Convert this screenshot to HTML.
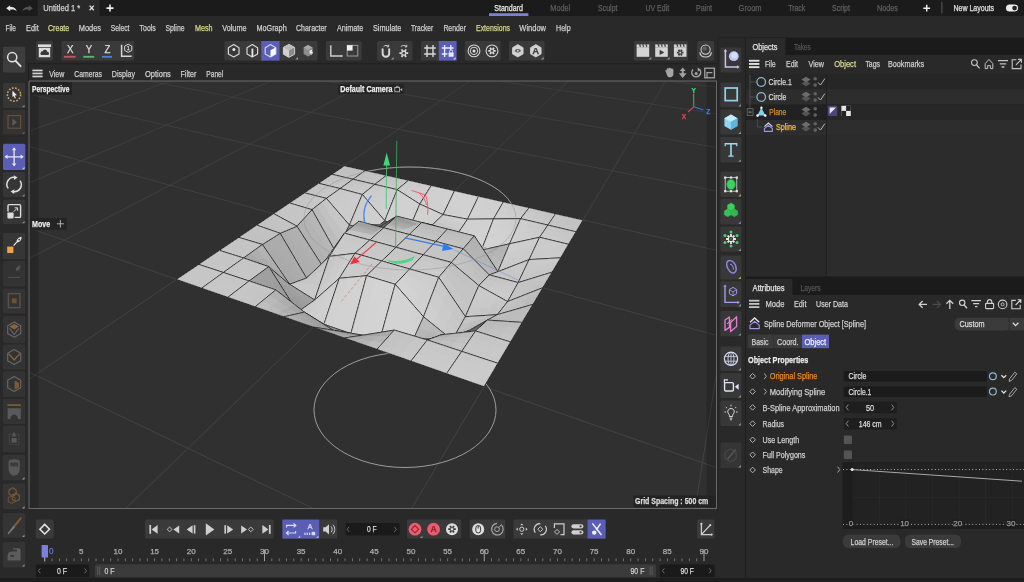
<!DOCTYPE html>
<html lang="en"><head><meta charset="utf-8"><title>Cinema 4D - Untitled 1</title>
<style>
html,body{margin:0;padding:0;background:#292929;overflow:hidden}
svg{display:block;font-family:'Liberation Sans', sans-serif}
text{white-space:pre;stroke-width:0.25px;paint-order:stroke fill}
svg{will-change:transform;transform:translateZ(0)}
</style></head><body>
<svg width="1024" height="582" viewBox="0 0 1024 582" shape-rendering="geometricPrecision">
<rect x="0.00" y="0.00" width="1024.00" height="582.00" fill="#292929" />
<rect x="0.00" y="0.00" width="1024.00" height="16.00" fill="#1b1b1b" />
<rect x="37.60" y="0.00" width="62.00" height="16.00" fill="#292929" />
<path d="M6.2 8.2 L10.2 5.2 L10.2 7.1 C13.5 6.6 16 8.2 16.8 11.4 C15.4 9.6 13.2 9.2 10.2 9.6 L10.2 11.2 Z" fill="#e6e6e6" />
<path d="M32.8 8.2 L28.8 5.2 L28.8 7.1 C25.5 6.6 23 8.2 22.2 11.4 C23.6 9.6 25.8 9.2 28.8 9.6 L28.8 11.2 Z" fill="#555" />
<text x="43.3" y="11.0" font-size="8.5" fill="#d0d0d0" stroke="#d0d0d0" textLength="37.0" lengthAdjust="spacingAndGlyphs" >Untitled 1 *</text>
<path d="M89.6 5.6 L93.8 10.2 M93.8 5.6 L89.6 10.2" fill="none" stroke="#e0e0e0" stroke-width="1.3" />
<path d="M110 4.6 V11.6 M106.5 8.1 H113.5" fill="none" stroke="#f0f0f0" stroke-width="1.6" />
<text x="494.2" y="11.0" font-size="8.5" fill="#e8e8e8" stroke="#e8e8e8" textLength="28.8" lengthAdjust="spacingAndGlyphs" >Standard</text>
<text x="550.3" y="11.0" font-size="8.5" fill="#5e5e5e" stroke="#5e5e5e" textLength="19.9" lengthAdjust="spacingAndGlyphs" >Model</text>
<text x="598.0" y="11.0" font-size="8.5" fill="#5e5e5e" stroke="#5e5e5e" textLength="19.5" lengthAdjust="spacingAndGlyphs" >Sculpt</text>
<text x="645.4" y="11.0" font-size="8.5" fill="#5e5e5e" stroke="#5e5e5e" textLength="23.8" lengthAdjust="spacingAndGlyphs" >UV Edit</text>
<text x="696.0" y="11.0" font-size="8.5" fill="#5e5e5e" stroke="#5e5e5e" textLength="16.0" lengthAdjust="spacingAndGlyphs" >Paint</text>
<text x="738.6" y="11.0" font-size="8.5" fill="#5e5e5e" stroke="#5e5e5e" textLength="23.0" lengthAdjust="spacingAndGlyphs" >Groom</text>
<text x="788.3" y="11.0" font-size="8.5" fill="#5e5e5e" stroke="#5e5e5e" textLength="16.9" lengthAdjust="spacingAndGlyphs" >Track</text>
<text x="832.0" y="11.0" font-size="8.5" fill="#5e5e5e" stroke="#5e5e5e" textLength="18.0" lengthAdjust="spacingAndGlyphs" >Script</text>
<text x="877.0" y="11.0" font-size="8.5" fill="#5e5e5e" stroke="#5e5e5e" textLength="21.0" lengthAdjust="spacingAndGlyphs" >Nodes</text>
<rect x="489.00" y="13.20" width="39.40" height="2.80" fill="#7c80d2" />
<path d="M926.7 4.8 V11.6 M923.3 8.2 H930.1" fill="none" stroke="#f0f0f0" stroke-width="1.5" />
<rect x="941.40" y="2.00" width="1.00" height="11.50" fill="#5a5a5a" />
<text x="953.4" y="11.0" font-size="8.5" fill="#e0e0e0" stroke="#e0e0e0" textLength="40.7" lengthAdjust="spacingAndGlyphs" >New Layouts</text>
<rect x="1006.00" y="4.60" width="12.20" height="7.00" fill="#ececec" rx="3.5" />
<circle cx="1014.60" cy="8.10" r="2.40" fill="#222" />
<text x="5.5" y="31.0" font-size="9" fill="#cfcfcf" stroke="#cfcfcf" textLength="10.5" lengthAdjust="spacingAndGlyphs" >File</text>
<text x="26.0" y="31.0" font-size="9" fill="#cfcfcf" stroke="#cfcfcf" textLength="12.7" lengthAdjust="spacingAndGlyphs" >Edit</text>
<text x="47.9" y="31.0" font-size="9" fill="#d6d98a" stroke="#d6d98a" textLength="21.4" lengthAdjust="spacingAndGlyphs" >Create</text>
<text x="78.7" y="31.0" font-size="9" fill="#cfcfcf" stroke="#cfcfcf" textLength="22.3" lengthAdjust="spacingAndGlyphs" >Modes</text>
<text x="110.7" y="31.0" font-size="9" fill="#cfcfcf" stroke="#cfcfcf" textLength="18.8" lengthAdjust="spacingAndGlyphs" >Select</text>
<text x="139.6" y="31.0" font-size="9" fill="#cfcfcf" stroke="#cfcfcf" textLength="16.1" lengthAdjust="spacingAndGlyphs" >Tools</text>
<text x="165.4" y="31.0" font-size="9" fill="#cfcfcf" stroke="#cfcfcf" textLength="19.2" lengthAdjust="spacingAndGlyphs" >Spline</text>
<text x="194.9" y="31.0" font-size="9" fill="#d6d98a" stroke="#d6d98a" textLength="17.6" lengthAdjust="spacingAndGlyphs" >Mesh</text>
<text x="222.2" y="31.0" font-size="9" fill="#cfcfcf" stroke="#cfcfcf" textLength="24.4" lengthAdjust="spacingAndGlyphs" >Volume</text>
<text x="256.4" y="31.0" font-size="9" fill="#cfcfcf" stroke="#cfcfcf" textLength="30.3" lengthAdjust="spacingAndGlyphs" >MoGraph</text>
<text x="296.0" y="31.0" font-size="9" fill="#cfcfcf" stroke="#cfcfcf" textLength="30.7" lengthAdjust="spacingAndGlyphs" >Character</text>
<text x="336.9" y="31.0" font-size="9" fill="#cfcfcf" stroke="#cfcfcf" textLength="26.5" lengthAdjust="spacingAndGlyphs" >Animate</text>
<text x="373.0" y="31.0" font-size="9" fill="#cfcfcf" stroke="#cfcfcf" textLength="28.4" lengthAdjust="spacingAndGlyphs" >Simulate</text>
<text x="411.0" y="31.0" font-size="9" fill="#cfcfcf" stroke="#cfcfcf" textLength="22.2" lengthAdjust="spacingAndGlyphs" >Tracker</text>
<text x="443.4" y="31.0" font-size="9" fill="#cfcfcf" stroke="#cfcfcf" textLength="22.6" lengthAdjust="spacingAndGlyphs" >Render</text>
<text x="476.0" y="31.0" font-size="9" fill="#d6d98a" stroke="#d6d98a" textLength="34.0" lengthAdjust="spacingAndGlyphs" >Extensions</text>
<text x="519.3" y="31.0" font-size="9" fill="#cfcfcf" stroke="#cfcfcf" textLength="26.7" lengthAdjust="spacingAndGlyphs" >Window</text>
<text x="556.0" y="31.0" font-size="9" fill="#cfcfcf" stroke="#cfcfcf" textLength="14.6" lengthAdjust="spacingAndGlyphs" >Help</text>
<rect x="29.00" y="81.00" width="687.50" height="427.50" fill="#303030" />
<clipPath id="vpclip"><rect x="29" y="81" width="687.5" height="427.5"/></clipPath>
<g clip-path="url(#vpclip)">
<line x1="-83.46" y1="94.52" x2="44.08" y2="60.51" stroke="#464646" stroke-width="1" opacity="0.52"/>
<line x1="27.42" y1="93.74" x2="126.15" y2="63.73" stroke="#464646" stroke-width="1" opacity="0.52"/>
<line x1="-16.00" y1="146.92" x2="122.65" y2="97.95" stroke="#464646" stroke-width="1" opacity="0.62"/>
<line x1="122.65" y1="97.95" x2="210.22" y2="67.03" stroke="#464646" stroke-width="1" opacity="0.53"/>
<line x1="-29.63" y1="207.54" x2="117.79" y2="145.53" stroke="#464646" stroke-width="1" opacity="0.70"/>
<line x1="117.79" y1="145.53" x2="220.59" y2="102.28" stroke="#464646" stroke-width="1" opacity="0.62"/>
<line x1="220.59" y1="102.28" x2="296.36" y2="70.41" stroke="#464646" stroke-width="1" opacity="0.54"/>
<line x1="-84.81" y1="317.58" x2="110.57" y2="216.16" stroke="#464646" stroke-width="1" opacity="0.79"/>
<line x1="110.57" y1="216.16" x2="249.27" y2="144.16" stroke="#464646" stroke-width="1" opacity="0.70"/>
<line x1="249.27" y1="144.16" x2="331.56" y2="101.44" stroke="#464646" stroke-width="1" opacity="0.61"/>
<line x1="331.56" y1="101.44" x2="392.36" y2="69.88" stroke="#464646" stroke-width="1" opacity="0.53"/>
<line x1="8.82" y1="362.46" x2="261.66" y2="483.64" stroke="#464646" stroke-width="1" opacity="0.88"/>
<line x1="261.66" y1="483.64" x2="604.60" y2="648.01" stroke="#464646" stroke-width="1" opacity="0.90"/>
<line x1="-189.88" y1="527.14" x2="98.73" y2="331.99" stroke="#464646" stroke-width="1" opacity="0.88"/>
<line x1="98.73" y1="331.99" x2="256.73" y2="225.15" stroke="#464646" stroke-width="1" opacity="0.80"/>
<line x1="256.73" y1="225.15" x2="356.43" y2="157.73" stroke="#464646" stroke-width="1" opacity="0.72"/>
<line x1="356.43" y1="157.73" x2="425.07" y2="111.32" stroke="#464646" stroke-width="1" opacity="0.63"/>
<line x1="425.07" y1="111.32" x2="481.28" y2="73.31" stroke="#464646" stroke-width="1" opacity="0.54"/>
<line x1="5.97" y1="219.95" x2="176.50" y2="279.40" stroke="#464646" stroke-width="1" opacity="0.78"/>
<line x1="176.50" y1="279.40" x2="376.96" y2="349.28" stroke="#464646" stroke-width="1" opacity="0.83"/>
<line x1="376.96" y1="349.28" x2="702.41" y2="462.74" stroke="#464646" stroke-width="1" opacity="0.87"/>
<line x1="702.41" y1="462.74" x2="1136.15" y2="613.95" stroke="#464646" stroke-width="1" opacity="0.90"/>
<line x1="117.49" y1="516.46" x2="313.42" y2="327.13" stroke="#464646" stroke-width="1" opacity="0.88"/>
<line x1="313.42" y1="327.13" x2="421.65" y2="222.55" stroke="#464646" stroke-width="1" opacity="0.80"/>
<line x1="421.65" y1="222.55" x2="490.30" y2="156.21" stroke="#464646" stroke-width="1" opacity="0.71"/>
<line x1="490.30" y1="156.21" x2="537.72" y2="110.38" stroke="#464646" stroke-width="1" opacity="0.63"/>
<line x1="537.72" y1="110.38" x2="572.44" y2="76.83" stroke="#464646" stroke-width="1" opacity="0.55"/>
<line x1="4.37" y1="139.72" x2="115.27" y2="170.19" stroke="#464646" stroke-width="1" opacity="0.67"/>
<line x1="115.27" y1="170.19" x2="273.65" y2="213.71" stroke="#464646" stroke-width="1" opacity="0.72"/>
<line x1="273.65" y1="213.71" x2="480.70" y2="270.59" stroke="#464646" stroke-width="1" opacity="0.77"/>
<line x1="480.70" y1="270.59" x2="722.15" y2="336.93" stroke="#464646" stroke-width="1" opacity="0.82"/>
<line x1="159.79" y1="932.20" x2="412.94" y2="506.19" stroke="#464646" stroke-width="1" opacity="0.90"/>
<line x1="412.94" y1="506.19" x2="522.14" y2="322.41" stroke="#464646" stroke-width="1" opacity="0.87"/>
<line x1="522.14" y1="322.41" x2="583.00" y2="220.00" stroke="#464646" stroke-width="1" opacity="0.79"/>
<line x1="583.00" y1="220.00" x2="621.80" y2="154.71" stroke="#464646" stroke-width="1" opacity="0.71"/>
<line x1="621.80" y1="154.71" x2="648.69" y2="109.46" stroke="#464646" stroke-width="1" opacity="0.63"/>
<line x1="648.69" y1="109.46" x2="668.42" y2="76.25" stroke="#464646" stroke-width="1" opacity="0.54"/>
<line x1="-19.71" y1="83.03" x2="78.97" y2="105.46" stroke="#464646" stroke-width="1" opacity="0.56"/>
<line x1="78.97" y1="105.46" x2="198.03" y2="132.51" stroke="#464646" stroke-width="1" opacity="0.61"/>
<line x1="198.03" y1="132.51" x2="344.50" y2="165.80" stroke="#464646" stroke-width="1" opacity="0.66"/>
<line x1="344.50" y1="165.80" x2="529.09" y2="207.75" stroke="#464646" stroke-width="1" opacity="0.71"/>
<line x1="529.09" y1="207.75" x2="768.91" y2="262.25" stroke="#464646" stroke-width="1" opacity="0.76"/>
<line x1="684.62" y1="576.05" x2="718.89" y2="357.71" stroke="#464646" stroke-width="1" opacity="0.89"/>
<line x1="137.38" y1="78.63" x2="247.66" y2="100.04" stroke="#464646" stroke-width="1" opacity="0.55"/>
<line x1="247.66" y1="100.04" x2="380.02" y2="125.74" stroke="#464646" stroke-width="1" opacity="0.60"/>
<line x1="380.02" y1="125.74" x2="541.85" y2="157.16" stroke="#464646" stroke-width="1" opacity="0.65"/>
<line x1="541.85" y1="157.16" x2="744.21" y2="196.44" stroke="#464646" stroke-width="1" opacity="0.70"/>
<line x1="286.78" y1="74.44" x2="407.36" y2="94.91" stroke="#464646" stroke-width="1" opacity="0.53"/>
<line x1="407.36" y1="94.91" x2="571.38" y2="122.75" stroke="#464646" stroke-width="1" opacity="0.58"/>
<line x1="571.38" y1="122.75" x2="750.99" y2="153.24" stroke="#464646" stroke-width="1" opacity="0.64"/>
<line x1="414.26" y1="68.22" x2="558.77" y2="90.04" stroke="#464646" stroke-width="1" opacity="0.51"/>
<line x1="558.77" y1="90.04" x2="734.36" y2="116.56" stroke="#464646" stroke-width="1" opacity="0.57"/>
<line x1="548.93" y1="64.50" x2="702.52" y2="85.43" stroke="#464646" stroke-width="1" opacity="0.50"/>
<line x1="702.52" y1="85.43" x2="888.23" y2="110.72" stroke="#464646" stroke-width="1" opacity="0.55"/>
<line x1="677.51" y1="60.96" x2="839.19" y2="81.04" stroke="#464646" stroke-width="1" opacity="0.48"/>
<ellipse cx="405" cy="410" rx="91" ry="57.5" fill="none" stroke="#a8a8a8" stroke-width="0.9"/>
<ellipse cx="410" cy="218.5" rx="106" ry="51.5" fill="none" stroke="#a8a8a8" stroke-width="0.9"/>
<g shape-rendering="crispEdges">
<polygon points="340.4,168.6 347.3,170.2 351.3,167.4 344.5,165.8" fill="rgb(192,192,192)"/>
<polygon points="347.3,170.2 354.2,171.8 358.2,168.9 351.3,167.4" fill="rgb(192,192,192)"/>
<polygon points="336.2,171.4 343.1,173.0 347.3,170.2 340.4,168.6" fill="rgb(192,192,192)"/>
<polygon points="354.2,171.8 361.2,173.4 365.2,170.5 358.2,168.9" fill="rgb(192,192,192)"/>
<polygon points="343.1,173.0 350.1,174.7 354.2,171.8 347.3,170.2" fill="rgb(192,192,192)"/>
<polygon points="331.9,174.3 338.9,176.0 343.1,173.0 336.2,171.4" fill="rgb(193,193,193)"/>
<polygon points="350.1,174.7 357.2,176.3 361.2,173.4 354.2,171.8" fill="rgb(193,193,193)"/>
<polygon points="338.9,176.0 345.9,177.6 350.1,174.7 343.1,173.0" fill="rgb(193,193,193)"/>
<polygon points="345.9,177.6 353.0,179.3 357.2,176.3 350.1,174.7" fill="rgb(193,193,193)"/>
<polygon points="331.9,174.3 353.0,179.3 365.2,170.5 344.5,165.8" fill="none" stroke="#262626" stroke-width="0.7" stroke-linejoin="round" shape-rendering="geometricPrecision"/>
<polygon points="361.2,173.4 368.3,175.0 372.3,172.1 365.2,170.5" fill="rgb(193,193,193)"/>
<polygon points="368.3,175.0 375.5,176.7 379.4,173.7 372.3,172.1" fill="rgb(193,193,193)"/>
<polygon points="357.2,176.3 364.3,178.0 368.3,175.0 361.2,173.4" fill="rgb(193,193,193)"/>
<polygon points="375.5,176.7 382.7,178.3 386.5,175.4 379.4,173.7" fill="rgb(194,194,194)"/>
<polygon points="364.3,178.0 371.5,179.6 375.5,176.7 368.3,175.0" fill="rgb(194,194,194)"/>
<polygon points="353.0,179.3 360.2,181.0 364.3,178.0 357.2,176.3" fill="rgb(194,194,194)"/>
<polygon points="371.5,179.6 378.8,181.3 382.7,178.3 375.5,176.7" fill="rgb(195,195,195)"/>
<polygon points="360.2,181.0 367.4,182.7 371.5,179.6 364.3,178.0" fill="rgb(195,195,195)"/>
<polygon points="367.4,182.7 374.8,184.4 378.8,181.3 371.5,179.6" fill="rgb(197,197,197)"/>
<polygon points="353.0,179.3 374.8,184.4 386.5,175.4 365.2,170.5" fill="none" stroke="#262626" stroke-width="0.7" stroke-linejoin="round" shape-rendering="geometricPrecision"/>
<polygon points="327.6,177.3 334.6,178.9 338.9,176.0 331.9,174.3" fill="rgb(193,193,193)"/>
<polygon points="334.6,178.9 341.6,180.6 345.9,177.6 338.9,176.0" fill="rgb(193,193,193)"/>
<polygon points="323.1,180.3 330.2,182.0 334.6,178.9 327.6,177.3" fill="rgb(193,193,193)"/>
<polygon points="341.6,180.6 348.8,182.3 353.0,179.3 345.9,177.6" fill="rgb(194,194,194)"/>
<polygon points="330.2,182.0 337.3,183.7 341.6,180.6 334.6,178.9" fill="rgb(194,194,194)"/>
<polygon points="318.6,183.3 325.7,185.1 330.2,182.0 323.1,180.3" fill="rgb(194,194,194)"/>
<polygon points="337.3,183.7 344.5,185.4 348.8,182.3 341.6,180.6" fill="rgb(196,196,196)"/>
<polygon points="325.7,185.1 332.9,186.8 337.3,183.7 330.2,182.0" fill="rgb(196,196,196)"/>
<polygon points="332.9,186.8 340.1,188.6 344.5,185.4 337.3,183.7" fill="rgb(197,197,197)"/>
<polygon points="318.6,183.3 340.1,188.6 353.0,179.3 331.9,174.3" fill="none" stroke="#262626" stroke-width="0.7" stroke-linejoin="round" shape-rendering="geometricPrecision"/>
<polygon points="382.7,178.3 390.0,180.0 393.8,177.0 386.5,175.4" fill="rgb(195,195,195)"/>
<polygon points="390.0,180.0 397.4,181.7 401.1,178.7 393.8,177.0" fill="rgb(196,196,196)"/>
<polygon points="378.8,181.3 386.1,183.0 390.0,180.0 382.7,178.3" fill="rgb(197,197,197)"/>
<polygon points="397.4,181.7 404.8,183.4 408.5,180.3 401.1,178.7" fill="rgb(198,198,198)"/>
<polygon points="386.1,183.0 393.5,184.8 397.4,181.7 390.0,180.0" fill="rgb(198,198,198)"/>
<polygon points="374.8,184.4 382.2,186.1 386.1,183.0 378.8,181.3" fill="rgb(198,198,198)"/>
<polygon points="393.5,184.8 401.0,186.5 404.8,183.4 397.4,181.7" fill="rgb(200,200,200)"/>
<polygon points="382.2,186.1 389.6,187.9 393.5,184.8 386.1,183.0" fill="rgb(200,200,200)"/>
<polygon points="389.6,187.9 397.2,189.7 401.0,186.5 393.5,184.8" fill="rgb(201,201,201)"/>
<polygon points="374.8,184.4 397.2,189.7 408.5,180.3 386.5,175.4" fill="none" stroke="#262626" stroke-width="0.7" stroke-linejoin="round" shape-rendering="geometricPrecision"/>
<polygon points="404.8,183.4 412.3,186.1 416.0,182.0 408.5,180.3" fill="rgb(201,201,201)"/>
<polygon points="412.3,186.1 419.8,188.9 423.5,183.8 416.0,182.0" fill="rgb(203,203,203)"/>
<polygon points="401.0,186.5 408.5,190.3 412.3,186.1 404.8,183.4" fill="rgb(203,203,203)"/>
<polygon points="419.8,188.9 427.4,191.6 431.2,185.5 423.5,183.8" fill="rgb(205,205,205)"/>
<polygon points="408.5,190.3 416.1,194.0 419.8,188.9 412.3,186.1" fill="rgb(205,205,205)"/>
<polygon points="416.1,194.0 423.7,197.8 427.4,191.6 419.8,188.9" fill="rgb(207,207,207)"/>
<polygon points="397.2,189.7 404.7,194.5 408.5,190.3 401.0,186.5" fill="rgb(205,205,205)"/>
<polygon points="404.7,194.5 412.3,199.3 416.1,194.0 408.5,190.3" fill="rgb(207,207,207)"/>
<polygon points="412.3,199.3 419.8,204.1 423.7,197.8 416.1,194.0" fill="rgb(208,208,208)"/>
<polygon points="397.2,189.7 419.8,204.1 431.2,185.5 408.5,180.3" fill="none" stroke="#262626" stroke-width="0.7" stroke-linejoin="round" shape-rendering="geometricPrecision"/>
<polygon points="348.8,182.3 356.0,184.1 360.2,181.0 353.0,179.3" fill="rgb(195,195,195)"/>
<polygon points="356.0,184.1 363.3,185.9 367.4,182.7 360.2,181.0" fill="rgb(197,197,197)"/>
<polygon points="344.5,185.4 351.8,187.3 356.0,184.1 348.8,182.3" fill="rgb(197,197,197)"/>
<polygon points="363.3,185.9 370.7,187.7 374.8,184.4 367.4,182.7" fill="rgb(199,199,199)"/>
<polygon points="351.8,187.3 359.1,189.2 363.3,185.9 356.0,184.1" fill="rgb(200,200,200)"/>
<polygon points="340.1,188.6 347.4,190.5 351.8,187.3 344.5,185.4" fill="rgb(199,199,199)"/>
<polygon points="359.1,189.2 366.5,191.1 370.7,187.7 363.3,185.9" fill="rgb(201,201,201)"/>
<polygon points="347.4,190.5 354.8,192.5 359.1,189.2 351.8,187.3" fill="rgb(201,201,201)"/>
<polygon points="354.8,192.5 362.3,194.5 366.5,191.1 359.1,189.2" fill="rgb(203,203,203)"/>
<polygon points="340.1,188.6 362.3,194.5 374.8,184.4 353.0,179.3" fill="none" stroke="#262626" stroke-width="0.7" stroke-linejoin="round" shape-rendering="geometricPrecision"/>
<polygon points="370.7,187.7 378.1,191.8 382.2,186.1 374.8,184.4" fill="rgb(201,201,201)"/>
<polygon points="378.1,191.8 385.6,195.9 389.6,187.9 382.2,186.1" fill="rgb(204,204,204)"/>
<polygon points="385.6,195.9 393.1,200.0 397.2,189.7 389.6,187.9" fill="rgb(205,205,205)"/>
<polygon points="366.5,191.1 374.0,197.5 378.1,191.8 370.7,187.7" fill="rgb(203,203,203)"/>
<polygon points="374.0,197.5 381.5,203.9 385.6,195.9 378.1,191.8" fill="rgb(205,205,205)"/>
<polygon points="381.5,203.9 388.9,210.3 393.1,200.0 385.6,195.9" fill="rgb(207,207,207)"/>
<polygon points="377.3,212.0 384.8,220.7 388.9,210.3 381.5,203.9" fill="rgb(207,207,207)"/>
<polygon points="369.8,203.3 377.3,212.0 381.5,203.9 374.0,197.5" fill="rgb(206,206,206)"/>
<polygon points="362.3,194.5 369.8,203.3 374.0,197.5 366.5,191.1" fill="rgb(205,205,205)"/>
<polygon points="362.3,194.5 384.8,220.7 397.2,189.7 374.8,184.4" fill="none" stroke="#262626" stroke-width="0.7" stroke-linejoin="round" shape-rendering="geometricPrecision"/>
<polygon points="427.4,191.6 435.1,193.9 438.9,187.2 431.2,185.5" fill="rgb(207,207,207)"/>
<polygon points="435.1,193.9 442.9,196.3 446.6,189.0 438.9,187.2" fill="rgb(208,208,208)"/>
<polygon points="423.7,197.8 431.4,200.7 435.1,193.9 427.4,191.6" fill="rgb(208,208,208)"/>
<polygon points="442.9,196.3 450.7,198.6 454.5,190.8 446.6,189.0" fill="rgb(209,209,209)"/>
<polygon points="431.4,200.7 439.1,203.6 442.9,196.3 435.1,193.9" fill="rgb(208,208,208)"/>
<polygon points="419.8,204.1 427.5,207.6 431.4,200.7 423.7,197.8" fill="rgb(208,208,208)"/>
<polygon points="439.1,203.6 447.0,206.6 450.7,198.6 442.9,196.3" fill="rgb(209,209,209)"/>
<polygon points="427.5,207.6 435.3,211.1 439.1,203.6 431.4,200.7" fill="rgb(208,208,208)"/>
<polygon points="435.3,211.1 443.1,214.6 447.0,206.6 439.1,203.6" fill="rgb(208,208,208)"/>
<polygon points="419.8,204.1 443.1,214.6 454.5,190.8 431.2,185.5" fill="none" stroke="#262626" stroke-width="0.7" stroke-linejoin="round" shape-rendering="geometricPrecision"/>
<polygon points="314.0,186.4 321.1,188.2 325.7,185.1 318.6,183.3" fill="rgb(194,194,194)"/>
<polygon points="321.1,188.2 328.3,190.0 332.9,186.8 325.7,185.1" fill="rgb(196,196,196)"/>
<polygon points="309.3,189.6 316.5,191.4 321.1,188.2 314.0,186.4" fill="rgb(195,195,195)"/>
<polygon points="328.3,190.0 335.6,191.8 340.1,188.6 332.9,186.8" fill="rgb(198,198,198)"/>
<polygon points="316.5,191.4 323.7,193.2 328.3,190.0 321.1,188.2" fill="rgb(197,197,197)"/>
<polygon points="304.5,192.9 311.7,194.7 316.5,191.4 309.3,189.6" fill="rgb(195,195,195)"/>
<polygon points="323.7,193.2 331.1,195.1 335.6,191.8 328.3,190.0" fill="rgb(199,199,199)"/>
<polygon points="311.7,194.7 319.0,196.5 323.7,193.2 316.5,191.4" fill="rgb(197,197,197)"/>
<polygon points="319.0,196.5 326.4,198.4 331.1,195.1 323.7,193.2" fill="rgb(199,199,199)"/>
<polygon points="304.5,192.9 326.4,198.4 340.1,188.6 318.6,183.3" fill="none" stroke="#262626" stroke-width="0.7" stroke-linejoin="round" shape-rendering="geometricPrecision"/>
<polygon points="393.1,200.0 400.6,204.5 404.7,194.5 397.2,189.7" fill="rgb(208,208,208)"/>
<polygon points="400.6,204.5 408.2,209.0 412.3,199.3 404.7,194.5" fill="rgb(209,209,209)"/>
<polygon points="388.9,210.3 396.5,214.6 400.6,204.5 393.1,200.0" fill="rgb(208,208,208)"/>
<polygon points="408.2,209.0 415.8,213.6 419.8,204.1 412.3,199.3" fill="rgb(209,209,209)"/>
<polygon points="396.5,214.6 404.1,218.8 408.2,209.0 400.6,204.5" fill="rgb(209,209,209)"/>
<polygon points="384.8,220.7 392.3,224.7 396.5,214.6 388.9,210.3" fill="rgb(209,209,209)"/>
<polygon points="404.1,218.8 411.7,223.1 415.8,213.6 408.2,209.0" fill="rgb(210,210,210)"/>
<polygon points="392.3,224.7 400.0,228.7 404.1,218.8 396.5,214.6" fill="rgb(210,210,210)"/>
<polygon points="400.0,228.7 407.6,232.7 411.7,223.1 404.1,218.8" fill="rgb(211,211,211)"/>
<polygon points="384.8,220.7 407.6,232.7 419.8,204.1 397.2,189.7" fill="none" stroke="#262626" stroke-width="0.7" stroke-linejoin="round" shape-rendering="geometricPrecision"/>
<polygon points="335.6,191.8 343.1,196.1 347.4,190.5 340.1,188.6" fill="rgb(201,201,201)"/>
<polygon points="343.1,196.1 350.5,200.4 354.8,192.5 347.4,190.5" fill="rgb(203,203,203)"/>
<polygon points="350.5,200.4 358.0,204.7 362.3,194.5 354.8,192.5" fill="rgb(204,204,204)"/>
<polygon points="331.1,195.1 338.6,201.7 343.1,196.1 335.6,191.8" fill="rgb(201,201,201)"/>
<polygon points="338.6,201.7 346.2,208.3 350.5,200.4 343.1,196.1" fill="rgb(203,203,203)"/>
<polygon points="346.2,208.3 353.7,214.9 358.0,204.7 350.5,200.4" fill="rgb(204,204,204)"/>
<polygon points="341.8,216.2 349.4,225.1 353.7,214.9 346.2,208.3" fill="rgb(203,203,203)"/>
<polygon points="334.1,207.3 341.8,216.2 346.2,208.3 338.6,201.7" fill="rgb(203,203,203)"/>
<polygon points="326.4,198.4 334.1,207.3 338.6,201.7 331.1,195.1" fill="rgb(202,202,202)"/>
<polygon points="326.4,198.4 349.4,225.1 362.3,194.5 340.1,188.6" fill="none" stroke="#262626" stroke-width="0.7" stroke-linejoin="round" shape-rendering="geometricPrecision"/>
<polygon points="450.7,198.6 458.7,200.4 462.4,192.6 454.5,190.8" fill="rgb(210,210,210)"/>
<polygon points="458.7,200.4 466.8,202.1 470.5,194.4 462.4,192.6" fill="rgb(209,209,209)"/>
<polygon points="447.0,206.6 455.0,208.2 458.7,200.4 450.7,198.6" fill="rgb(209,209,209)"/>
<polygon points="466.8,202.1 474.9,203.8 478.6,196.3 470.5,194.4" fill="rgb(209,209,209)"/>
<polygon points="443.1,214.6 451.2,216.1 455.0,208.2 447.0,206.6" fill="rgb(208,208,208)"/>
<polygon points="455.0,208.2 463.1,209.8 466.8,202.1 458.7,200.4" fill="rgb(209,209,209)"/>
<polygon points="463.1,209.8 471.3,211.5 474.9,203.8 466.8,202.1" fill="rgb(209,209,209)"/>
<polygon points="451.2,216.1 459.3,217.7 463.1,209.8 455.0,208.2" fill="rgb(208,208,208)"/>
<polygon points="459.3,217.7 467.5,219.2 471.3,211.5 463.1,209.8" fill="rgb(209,209,209)"/>
<polygon points="443.1,214.6 467.5,219.2 478.6,196.3 454.5,190.8" fill="none" stroke="#262626" stroke-width="0.7" stroke-linejoin="round" shape-rendering="geometricPrecision"/>
<polygon points="373.1,217.6 380.7,224.1 384.8,220.7 377.3,212.0" fill="rgb(207,207,207)"/>
<polygon points="365.6,211.1 373.1,217.6 377.3,212.0 369.8,203.3" fill="rgb(206,206,206)"/>
<polygon points="358.0,204.7 365.6,211.1 369.8,203.3 362.3,194.5" fill="rgb(205,205,205)"/>
<polygon points="353.7,214.9 361.3,219.0 365.6,211.1 358.0,204.7" fill="rgb(204,204,204)"/>
<polygon points="361.3,219.0 368.9,223.2 373.1,217.6 365.6,211.1" fill="rgb(206,206,206)"/>
<polygon points="368.9,223.2 376.5,227.5 380.7,224.1 373.1,217.6" fill="rgb(207,207,207)"/>
<polygon points="349.4,225.1 356.9,227.0 361.3,219.0 353.7,214.9" fill="rgb(203,203,203)"/>
<polygon points="356.9,227.0 364.6,229.0 368.9,223.2 361.3,219.0" fill="rgb(205,205,205)"/>
<polygon points="364.6,229.0 372.3,230.9 376.5,227.5 368.9,223.2" fill="rgb(206,206,206)"/>
<polygon points="349.4,225.1 372.3,230.9 384.8,220.7 362.3,194.5" fill="none" stroke="#262626" stroke-width="0.7" stroke-linejoin="round" shape-rendering="geometricPrecision"/>
<polygon points="415.8,213.6 423.6,215.0 427.5,207.6 419.8,204.1" fill="rgb(209,209,209)"/>
<polygon points="423.6,215.0 431.6,216.5 435.3,211.1 427.5,207.6" fill="rgb(209,209,209)"/>
<polygon points="411.7,223.1 419.7,222.6 423.6,215.0 415.8,213.6" fill="rgb(210,210,210)"/>
<polygon points="431.6,216.5 439.6,218.0 443.1,214.6 435.3,211.1" fill="rgb(208,208,208)"/>
<polygon points="407.6,232.7 415.7,230.2 419.7,222.6 411.7,223.1" fill="rgb(211,211,211)"/>
<polygon points="419.7,222.6 427.8,222.0 431.6,216.5 423.6,215.0" fill="rgb(209,209,209)"/>
<polygon points="427.8,222.0 436.0,221.4 439.6,218.0 431.6,216.5" fill="rgb(207,207,207)"/>
<polygon points="415.7,230.2 423.9,227.6 427.8,222.0 419.7,222.6" fill="rgb(209,209,209)"/>
<polygon points="423.9,227.6 432.3,225.0 436.0,221.4 427.8,222.0" fill="rgb(206,206,206)"/>
<polygon points="407.6,232.7 432.3,225.0 443.1,214.6 419.8,204.1" fill="none" stroke="#262626" stroke-width="0.7" stroke-linejoin="round" shape-rendering="geometricPrecision"/>
<polygon points="299.6,196.2 306.9,198.1 311.7,194.7 304.5,192.9" fill="rgb(196,196,196)"/>
<polygon points="306.9,198.1 314.3,200.1 319.0,196.5 311.7,194.7" fill="rgb(198,198,198)"/>
<polygon points="294.6,199.5 302.0,201.6 306.9,198.1 299.6,196.2" fill="rgb(197,197,197)"/>
<polygon points="314.3,200.1 321.7,202.1 326.4,198.4 319.0,196.5" fill="rgb(199,199,199)"/>
<polygon points="302.0,201.6 309.4,203.7 314.3,200.1 306.9,198.1" fill="rgb(198,198,198)"/>
<polygon points="289.5,203.0 296.9,205.2 302.0,201.6 294.6,199.5" fill="rgb(197,197,197)"/>
<polygon points="309.4,203.7 316.9,205.8 321.7,202.1 314.3,200.1" fill="rgb(199,199,199)"/>
<polygon points="296.9,205.2 304.4,207.4 309.4,203.7 302.0,201.6" fill="rgb(198,198,198)"/>
<polygon points="304.4,207.4 312.0,209.7 316.9,205.8 309.4,203.7" fill="rgb(198,198,198)"/>
<polygon points="289.5,203.0 312.0,209.7 326.4,198.4 304.5,192.9" fill="none" stroke="#262626" stroke-width="0.7" stroke-linejoin="round" shape-rendering="geometricPrecision"/>
<polygon points="380.7,224.1 388.4,225.2 392.3,224.7 384.8,220.7" fill="rgb(100,100,100)"/>
<polygon points="388.4,225.2 396.2,226.3 400.0,228.7 392.3,224.7" fill="rgb(100,100,100)"/>
<polygon points="396.2,226.3 404.1,227.4 407.6,232.7 400.0,228.7" fill="rgb(100,100,100)"/>
<polygon points="376.5,227.5 384.4,225.7 388.4,225.2 380.7,224.1" fill="rgb(100,100,100)"/>
<polygon points="384.4,225.7 392.3,223.8 396.2,226.3 388.4,225.2" fill="rgb(100,100,100)"/>
<polygon points="372.3,230.9 380.2,226.2 384.4,225.7 376.5,227.5" fill="rgb(100,100,100)"/>
<polygon points="392.3,223.8 400.5,221.9 404.1,227.4 396.2,226.3" fill="rgb(100,100,100)"/>
<polygon points="380.2,226.2 388.3,221.2 392.3,223.8 384.4,225.7" fill="rgb(100,100,100)"/>
<polygon points="388.3,221.2 396.7,216.2 400.5,221.9 392.3,223.8" fill="rgb(100,100,100)"/>
<polygon points="372.3,230.9 396.7,216.2 407.6,232.7 384.8,220.7" fill="none" stroke="#262626" stroke-width="0.7" stroke-linejoin="round" shape-rendering="geometricPrecision"/>
<polygon points="474.9,203.8 483.3,205.0 486.8,198.1 478.6,196.3" fill="rgb(209,209,209)"/>
<polygon points="483.3,205.0 491.7,206.2 495.1,200.0 486.8,198.1" fill="rgb(207,207,207)"/>
<polygon points="471.3,211.5 479.7,212.0 483.3,205.0 474.9,203.8" fill="rgb(209,209,209)"/>
<polygon points="491.7,206.2 500.2,207.5 503.4,201.9 495.1,200.0" fill="rgb(206,206,206)"/>
<polygon points="467.5,219.2 476.1,219.1 479.7,212.0 471.3,211.5" fill="rgb(209,209,209)"/>
<polygon points="479.7,212.0 488.2,212.6 491.7,206.2 483.3,205.0" fill="rgb(208,208,208)"/>
<polygon points="488.2,212.6 496.9,213.1 500.2,207.5 491.7,206.2" fill="rgb(207,207,207)"/>
<polygon points="476.1,219.1 484.7,219.0 488.2,212.6 479.7,212.0" fill="rgb(208,208,208)"/>
<polygon points="484.7,219.0 493.5,218.9 496.9,213.1 488.2,212.6" fill="rgb(208,208,208)"/>
<polygon points="467.5,219.2 493.5,218.9 503.4,201.9 478.6,196.3" fill="none" stroke="#262626" stroke-width="0.7" stroke-linejoin="round" shape-rendering="geometricPrecision"/>
<polygon points="337.3,223.6 345.0,234.3 349.4,225.1 341.8,216.2" fill="rgb(199,199,199)"/>
<polygon points="329.5,212.9 337.3,223.6 341.8,216.2 334.1,207.3" fill="rgb(199,199,199)"/>
<polygon points="321.7,202.1 329.5,212.9 334.1,207.3 326.4,198.4" fill="rgb(198,198,198)"/>
<polygon points="332.8,231.1 340.6,243.5 345.0,234.3 337.3,223.6" fill="rgb(194,194,194)"/>
<polygon points="324.9,218.5 332.8,231.1 337.3,223.6 329.5,212.9" fill="rgb(194,194,194)"/>
<polygon points="328.2,238.6 336.1,252.8 340.6,243.5 332.8,231.1" fill="rgb(188,188,188)"/>
<polygon points="316.9,205.8 324.9,218.5 329.5,212.9 321.7,202.1" fill="rgb(193,193,193)"/>
<polygon points="320.1,224.2 328.2,238.6 332.8,231.1 324.9,218.5" fill="rgb(188,188,188)"/>
<polygon points="312.0,209.7 320.1,224.2 324.9,218.5 316.9,205.8" fill="rgb(187,187,187)"/>
<polygon points="312.0,209.7 336.1,252.8 349.4,225.1 326.4,198.4" fill="none" stroke="#262626" stroke-width="0.7" stroke-linejoin="round" shape-rendering="geometricPrecision"/>
<polygon points="439.6,218.0 447.7,220.1 451.2,216.1 443.1,214.6" fill="rgb(206,206,206)"/>
<polygon points="447.7,220.1 455.8,222.2 459.3,217.7 451.2,216.1" fill="rgb(207,207,207)"/>
<polygon points="436.0,221.4 444.1,224.1 447.7,220.1 439.6,218.0" fill="rgb(202,202,202)"/>
<polygon points="455.8,222.2 464.0,224.4 467.5,219.2 459.3,217.7" fill="rgb(207,207,207)"/>
<polygon points="444.1,224.1 452.2,226.9 455.8,222.2 447.7,220.1" fill="rgb(203,203,203)"/>
<polygon points="452.2,226.9 460.5,229.6 464.0,224.4 455.8,222.2" fill="rgb(203,203,203)"/>
<polygon points="432.3,225.0 440.4,228.3 444.1,224.1 436.0,221.4" fill="rgb(197,197,197)"/>
<polygon points="440.4,228.3 448.6,231.6 452.2,226.9 444.1,224.1" fill="rgb(198,198,198)"/>
<polygon points="448.6,231.6 456.9,235.0 460.5,229.6 452.2,226.9" fill="rgb(198,198,198)"/>
<polygon points="432.3,225.0 456.9,235.0 467.5,219.2 443.1,214.6" fill="none" stroke="#262626" stroke-width="0.7" stroke-linejoin="round" shape-rendering="geometricPrecision"/>
<polygon points="345.0,234.3 352.5,232.2 356.9,227.0 349.4,225.1" fill="rgb(161,161,161)"/>
<polygon points="340.6,243.5 348.0,237.4 352.5,232.2 345.0,234.3" fill="rgb(159,159,159)"/>
<polygon points="352.5,232.2 360.2,230.0 364.6,229.0 356.9,227.0" fill="rgb(159,159,159)"/>
<polygon points="336.1,252.8 343.4,242.7 348.0,237.4 340.6,243.5" fill="rgb(154,154,154)"/>
<polygon points="360.2,230.0 368.0,227.8 372.3,230.9 364.6,229.0" fill="rgb(154,154,154)"/>
<polygon points="348.0,237.4 355.7,231.1 360.2,230.0 352.5,232.2" fill="rgb(161,161,161)"/>
<polygon points="343.4,242.7 351.0,232.2 355.7,231.1 348.0,237.4" fill="rgb(163,163,163)"/>
<polygon points="355.7,231.1 363.5,224.6 368.0,227.8 360.2,230.0" fill="rgb(162,162,162)"/>
<polygon points="351.0,232.2 358.9,221.3 363.5,224.6 355.7,231.1" fill="rgb(167,167,167)"/>
<polygon points="336.1,252.8 358.9,221.3 372.3,230.9 349.4,225.1" fill="none" stroke="#262626" stroke-width="0.7" stroke-linejoin="round" shape-rendering="geometricPrecision"/>
<polygon points="500.2,207.5 508.8,208.7 511.9,203.8 503.4,201.9" fill="rgb(204,204,204)"/>
<polygon points="508.8,208.7 517.5,210.0 520.4,205.8 511.9,203.8" fill="rgb(202,202,202)"/>
<polygon points="496.9,213.1 505.6,213.7 508.8,208.7 500.2,207.5" fill="rgb(206,206,206)"/>
<polygon points="517.5,210.0 526.3,211.3 529.1,207.7 520.4,205.8" fill="rgb(200,200,200)"/>
<polygon points="505.6,213.7 514.5,214.4 517.5,210.0 508.8,208.7" fill="rgb(204,204,204)"/>
<polygon points="493.5,218.9 502.4,218.8 505.6,213.7 496.9,213.1" fill="rgb(208,208,208)"/>
<polygon points="514.5,214.4 523.5,215.0 526.3,211.3 517.5,210.0" fill="rgb(202,202,202)"/>
<polygon points="502.4,218.8 511.4,218.8 514.5,214.4 505.6,213.7" fill="rgb(206,206,206)"/>
<polygon points="511.4,218.8 520.6,218.7 523.5,215.0 514.5,214.4" fill="rgb(204,204,204)"/>
<polygon points="493.5,218.9 520.6,218.7 529.1,207.7 503.4,201.9" fill="none" stroke="#262626" stroke-width="0.7" stroke-linejoin="round" shape-rendering="geometricPrecision"/>
<polygon points="464.0,224.4 472.4,226.0 476.1,219.1 467.5,219.2" fill="rgb(208,208,208)"/>
<polygon points="472.4,226.0 480.9,227.6 484.7,219.0 476.1,219.1" fill="rgb(209,209,209)"/>
<polygon points="460.5,229.6 468.7,232.9 472.4,226.0 464.0,224.4" fill="rgb(208,208,208)"/>
<polygon points="468.7,232.9 477.1,236.3 480.9,227.6 472.4,226.0" fill="rgb(209,209,209)"/>
<polygon points="480.9,227.6 489.5,229.2 493.5,218.9 484.7,219.0" fill="rgb(209,209,209)"/>
<polygon points="456.9,235.0 465.0,240.0 468.7,232.9 460.5,229.6" fill="rgb(208,208,208)"/>
<polygon points="477.1,236.3 485.5,239.7 489.5,229.2 480.9,227.6" fill="rgb(210,210,210)"/>
<polygon points="465.0,240.0 473.2,245.1 477.1,236.3 468.7,232.9" fill="rgb(210,210,210)"/>
<polygon points="473.2,245.1 481.4,250.2 485.5,239.7 477.1,236.3" fill="rgb(211,211,211)"/>
<polygon points="456.9,235.0 481.4,250.2 493.5,218.9 467.5,219.2" fill="none" stroke="#262626" stroke-width="0.7" stroke-linejoin="round" shape-rendering="geometricPrecision"/>
<polygon points="404.1,227.4 412.2,226.4 415.7,230.2 407.6,232.7" fill="rgb(100,100,100)"/>
<polygon points="412.2,226.4 420.5,225.3 423.9,227.6 415.7,230.2" fill="rgb(100,100,100)"/>
<polygon points="400.5,221.9 408.6,222.4 412.2,226.4 404.1,227.4" fill="rgb(100,100,100)"/>
<polygon points="420.5,225.3 428.9,224.2 432.3,225.0 423.9,227.6" fill="rgb(100,100,100)"/>
<polygon points="408.6,222.4 416.9,222.9 420.5,225.3 412.2,226.4" fill="rgb(100,100,100)"/>
<polygon points="416.9,222.9 425.3,223.4 428.9,224.2 420.5,225.3" fill="rgb(100,100,100)"/>
<polygon points="396.7,216.2 404.9,218.3 408.6,222.4 400.5,221.9" fill="rgb(100,100,100)"/>
<polygon points="404.9,218.3 413.2,220.4 416.9,222.9 408.6,222.4" fill="rgb(100,100,100)"/>
<polygon points="413.2,220.4 421.6,222.5 425.3,223.4 416.9,222.9" fill="rgb(100,100,100)"/>
<polygon points="396.7,216.2 421.6,222.5 432.3,225.0 407.6,232.7" fill="none" stroke="#262626" stroke-width="0.7" stroke-linejoin="round" shape-rendering="geometricPrecision"/>
<polygon points="323.4,243.1 331.4,256.8 336.1,252.8 328.2,238.6" fill="rgb(183,183,183)"/>
<polygon points="315.3,229.2 323.4,243.1 328.2,238.6 320.1,224.2" fill="rgb(183,183,183)"/>
<polygon points="318.5,247.6 326.7,260.9 331.4,256.8 323.4,243.1" fill="rgb(180,180,180)"/>
<polygon points="307.0,215.1 315.3,229.2 320.1,224.2 312.0,209.7" fill="rgb(183,183,183)"/>
<polygon points="310.3,234.2 318.5,247.6 323.4,243.1 315.3,229.2" fill="rgb(180,180,180)"/>
<polygon points="313.6,252.2 321.8,265.0 326.7,260.9 318.5,247.6" fill="rgb(177,177,177)"/>
<polygon points="302.0,220.6 310.3,234.2 315.3,229.2 307.0,215.1" fill="rgb(180,180,180)"/>
<polygon points="305.3,239.3 313.6,252.2 318.5,247.6 310.3,234.2" fill="rgb(178,178,178)"/>
<polygon points="296.9,226.2 305.3,239.3 310.3,234.2 302.0,220.6" fill="rgb(178,178,178)"/>
<polygon points="296.9,226.2 321.8,265.0 336.1,252.8 312.0,209.7" fill="none" stroke="#262626" stroke-width="0.7" stroke-linejoin="round" shape-rendering="geometricPrecision"/>
<polygon points="284.4,206.5 291.8,209.3 296.9,205.2 289.5,203.0" fill="rgb(198,198,198)"/>
<polygon points="291.8,209.3 299.4,212.2 304.4,207.4 296.9,205.2" fill="rgb(198,198,198)"/>
<polygon points="299.4,212.2 307.0,215.1 312.0,209.7 304.4,207.4" fill="rgb(198,198,198)"/>
<polygon points="279.1,210.1 286.6,213.5 291.8,209.3 284.4,206.5" fill="rgb(197,197,197)"/>
<polygon points="286.6,213.5 294.3,217.1 299.4,212.2 291.8,209.3" fill="rgb(197,197,197)"/>
<polygon points="294.3,217.1 302.0,220.6 307.0,215.1 299.4,212.2" fill="rgb(198,198,198)"/>
<polygon points="273.7,213.7 281.3,217.9 286.6,213.5 279.1,210.1" fill="rgb(197,197,197)"/>
<polygon points="281.3,217.9 289.1,222.0 294.3,217.1 286.6,213.5" fill="rgb(197,197,197)"/>
<polygon points="289.1,222.0 296.9,226.2 302.0,220.6 294.3,217.1" fill="rgb(197,197,197)"/>
<polygon points="273.7,213.7 296.9,226.2 312.0,209.7 289.5,203.0" fill="none" stroke="#262626" stroke-width="0.7" stroke-linejoin="round" shape-rendering="geometricPrecision"/>
<polygon points="526.3,211.3 535.1,213.4 537.8,209.7 529.1,207.7" fill="rgb(198,198,198)"/>
<polygon points="535.1,213.4 544.1,215.4 546.7,211.7 537.8,209.7" fill="rgb(197,197,197)"/>
<polygon points="523.5,215.0 532.4,217.1 535.1,213.4 526.3,211.3" fill="rgb(201,201,201)"/>
<polygon points="544.1,215.4 553.1,217.5 555.6,213.8 546.7,211.7" fill="rgb(196,196,196)"/>
<polygon points="532.4,217.1 541.4,219.2 544.1,215.4 535.1,213.4" fill="rgb(199,199,199)"/>
<polygon points="520.6,218.7 529.6,220.8 532.4,217.1 523.5,215.0" fill="rgb(203,203,203)"/>
<polygon points="541.4,219.2 550.5,221.3 553.1,217.5 544.1,215.4" fill="rgb(197,197,197)"/>
<polygon points="529.6,220.8 538.7,223.0 541.4,219.2 532.4,217.1" fill="rgb(201,201,201)"/>
<polygon points="538.7,223.0 547.9,225.1 550.5,221.3 541.4,219.2" fill="rgb(199,199,199)"/>
<polygon points="520.6,218.7 547.9,225.1 555.6,213.8 529.1,207.7" fill="none" stroke="#262626" stroke-width="0.7" stroke-linejoin="round" shape-rendering="geometricPrecision"/>
<polygon points="489.5,229.2 498.5,228.5 502.4,218.8 493.5,218.9" fill="rgb(209,209,209)"/>
<polygon points="485.5,239.7 494.6,238.2 498.5,228.5 489.5,229.2" fill="rgb(210,210,210)"/>
<polygon points="498.5,228.5 507.7,227.7 511.4,218.8 502.4,218.8" fill="rgb(208,208,208)"/>
<polygon points="481.4,250.2 490.6,248.1 494.6,238.2 485.5,239.7" fill="rgb(211,211,211)"/>
<polygon points="494.6,238.2 503.9,236.8 507.7,227.7 498.5,228.5" fill="rgb(209,209,209)"/>
<polygon points="507.7,227.7 517.0,227.0 520.6,218.7 511.4,218.8" fill="rgb(206,206,206)"/>
<polygon points="490.6,248.1 500.0,246.0 503.9,236.8 494.6,238.2" fill="rgb(210,210,210)"/>
<polygon points="503.9,236.8 513.3,235.3 517.0,227.0 507.7,227.7" fill="rgb(208,208,208)"/>
<polygon points="500.0,246.0 509.6,243.8 513.3,235.3 503.9,236.8" fill="rgb(208,208,208)"/>
<polygon points="481.4,250.2 509.6,243.8 520.6,218.7 493.5,218.9" fill="none" stroke="#262626" stroke-width="0.7" stroke-linejoin="round" shape-rendering="geometricPrecision"/>
<polygon points="428.9,224.2 437.1,227.1 440.4,228.3 432.3,225.0" fill="rgb(100,100,100)"/>
<polygon points="437.1,227.1 445.4,230.1 448.6,231.6 440.4,228.3" fill="rgb(100,100,100)"/>
<polygon points="445.4,230.1 453.8,233.1 456.9,235.0 448.6,231.6" fill="rgb(100,100,100)"/>
<polygon points="425.3,223.4 433.7,225.9 437.1,227.1 428.9,224.2" fill="rgb(100,100,100)"/>
<polygon points="433.7,225.9 442.2,228.5 445.4,230.1 437.1,227.1" fill="rgb(100,100,100)"/>
<polygon points="442.2,228.5 450.7,231.1 453.8,233.1 445.4,230.1" fill="rgb(100,100,100)"/>
<polygon points="421.6,222.5 430.2,224.7 433.7,225.9 425.3,223.4" fill="rgb(100,100,100)"/>
<polygon points="430.2,224.7 438.8,226.9 442.2,228.5 433.7,225.9" fill="rgb(100,100,100)"/>
<polygon points="438.8,226.9 447.5,229.1 450.7,231.1 442.2,228.5" fill="rgb(100,100,100)"/>
<polygon points="421.6,222.5 447.5,229.1 456.9,235.0 432.3,225.0" fill="none" stroke="#262626" stroke-width="0.7" stroke-linejoin="round" shape-rendering="geometricPrecision"/>
<polygon points="368.0,227.8 376.0,225.3 380.2,226.2 372.3,230.9" fill="rgb(100,100,100)"/>
<polygon points="376.0,225.3 384.1,222.7 388.3,221.2 380.2,226.2" fill="rgb(100,100,100)"/>
<polygon points="363.5,224.6 371.6,224.3 376.0,225.3 368.0,227.8" fill="rgb(100,100,100)"/>
<polygon points="384.1,222.7 392.4,220.0 396.7,216.2 388.3,221.2" fill="rgb(100,100,100)"/>
<polygon points="371.6,224.3 379.8,224.1 384.1,222.7 376.0,225.3" fill="rgb(100,100,100)"/>
<polygon points="358.9,221.3 367.1,223.4 371.6,224.3 363.5,224.6" fill="rgb(100,100,100)"/>
<polygon points="379.8,224.1 388.1,223.8 392.4,220.0 384.1,222.7" fill="rgb(100,100,100)"/>
<polygon points="367.1,223.4 375.3,225.6 379.8,224.1 371.6,224.3" fill="rgb(100,100,100)"/>
<polygon points="375.3,225.6 383.7,227.8 388.1,223.8 379.8,224.1" fill="rgb(100,100,100)"/>
<polygon points="358.9,221.3 383.7,227.8 396.7,216.2 372.3,230.9" fill="none" stroke="#262626" stroke-width="0.7" stroke-linejoin="round" shape-rendering="geometricPrecision"/>
<polygon points="331.4,256.8 338.8,246.6 343.4,242.7 336.1,252.8" fill="rgb(100,100,100)"/>
<polygon points="326.7,260.9 334.0,250.7 338.8,246.6 331.4,256.8" fill="rgb(100,100,100)"/>
<polygon points="338.8,246.6 346.3,236.1 351.0,232.2 343.4,242.7" fill="rgb(100,100,100)"/>
<polygon points="321.8,265.0 329.1,254.8 334.0,250.7 326.7,260.9" fill="rgb(100,100,100)"/>
<polygon points="334.0,250.7 341.5,240.1 346.3,236.1 338.8,246.6" fill="rgb(100,100,100)"/>
<polygon points="346.3,236.1 354.2,225.1 358.9,221.3 351.0,232.2" fill="rgb(100,100,100)"/>
<polygon points="329.1,254.8 336.6,244.2 341.5,240.1 334.0,250.7" fill="rgb(100,100,100)"/>
<polygon points="341.5,240.1 349.4,229.1 354.2,225.1 346.3,236.1" fill="rgb(100,100,100)"/>
<polygon points="336.6,244.2 344.5,233.2 349.4,229.1 341.5,240.1" fill="rgb(100,100,100)"/>
<polygon points="321.8,265.0 344.5,233.2 358.9,221.3 336.1,252.8" fill="none" stroke="#262626" stroke-width="0.7" stroke-linejoin="round" shape-rendering="geometricPrecision"/>
<polygon points="553.1,217.5 562.2,219.6 564.6,215.8 555.6,213.8" fill="rgb(195,195,195)"/>
<polygon points="562.2,219.6 571.4,221.7 573.8,217.9 564.6,215.8" fill="rgb(195,195,195)"/>
<polygon points="550.5,221.3 559.7,223.4 562.2,219.6 553.1,217.5" fill="rgb(196,196,196)"/>
<polygon points="571.4,221.7 580.7,223.8 583.0,220.0 573.8,217.9" fill="rgb(194,194,194)"/>
<polygon points="559.7,223.4 569.0,225.6 571.4,221.7 562.2,219.6" fill="rgb(195,195,195)"/>
<polygon points="547.9,225.1 557.1,227.3 559.7,223.4 550.5,221.3" fill="rgb(197,197,197)"/>
<polygon points="569.0,225.6 578.4,227.8 580.7,223.8 571.4,221.7" fill="rgb(195,195,195)"/>
<polygon points="557.1,227.3 566.5,229.5 569.0,225.6 559.7,223.4" fill="rgb(196,196,196)"/>
<polygon points="566.5,229.5 576.0,231.8 578.4,227.8 569.0,225.6" fill="rgb(195,195,195)"/>
<polygon points="547.9,225.1 576.0,231.8 583.0,220.0 555.6,213.8" fill="none" stroke="#262626" stroke-width="0.7" stroke-linejoin="round" shape-rendering="geometricPrecision"/>
<polygon points="453.8,233.1 462.2,237.2 465.0,240.0 456.9,235.0" fill="rgb(100,100,100)"/>
<polygon points="462.2,237.2 470.6,241.4 473.2,245.1 465.0,240.0" fill="rgb(100,100,100)"/>
<polygon points="470.6,241.4 479.1,245.6 481.4,250.2 473.2,245.1" fill="rgb(100,100,100)"/>
<polygon points="450.7,231.1 459.3,234.3 462.2,237.2 453.8,233.1" fill="rgb(100,100,100)"/>
<polygon points="459.3,234.3 468.0,237.6 470.6,241.4 462.2,237.2" fill="rgb(100,100,100)"/>
<polygon points="468.0,237.6 476.8,240.8 479.1,245.6 470.6,241.4" fill="rgb(100,100,100)"/>
<polygon points="447.5,229.1 456.3,231.3 459.3,234.3 450.7,231.1" fill="rgb(100,100,100)"/>
<polygon points="456.3,231.3 465.3,233.6 468.0,237.6 459.3,234.3" fill="rgb(100,100,100)"/>
<polygon points="465.3,233.6 474.3,235.9 476.8,240.8 468.0,237.6" fill="rgb(100,100,100)"/>
<polygon points="447.5,229.1 474.3,235.9 481.4,250.2 456.9,235.0" fill="none" stroke="#262626" stroke-width="0.7" stroke-linejoin="round" shape-rendering="geometricPrecision"/>
<polygon points="308.4,255.9 316.8,269.3 321.8,265.0 313.6,252.2" fill="rgb(175,175,175)"/>
<polygon points="300.0,242.3 308.4,255.9 313.6,252.2 305.3,239.3" fill="rgb(176,176,176)"/>
<polygon points="303.2,259.6 311.7,273.6 316.8,269.3 308.4,255.9" fill="rgb(174,174,174)"/>
<polygon points="291.4,228.5 300.0,242.3 305.3,239.3 296.9,226.2" fill="rgb(176,176,176)"/>
<polygon points="294.6,245.3 303.2,259.6 308.4,255.9 300.0,242.3" fill="rgb(174,174,174)"/>
<polygon points="297.8,263.4 306.5,278.1 311.7,273.6 303.2,259.6" fill="rgb(173,173,173)"/>
<polygon points="285.9,230.9 294.6,245.3 300.0,242.3 291.4,228.5" fill="rgb(175,175,175)"/>
<polygon points="289.1,248.5 297.8,263.4 303.2,259.6 294.6,245.3" fill="rgb(173,173,173)"/>
<polygon points="280.1,233.3 289.1,248.5 294.6,245.3 285.9,230.9" fill="rgb(173,173,173)"/>
<polygon points="280.1,233.3 306.5,278.1 321.8,265.0 296.9,226.2" fill="none" stroke="#262626" stroke-width="0.7" stroke-linejoin="round" shape-rendering="geometricPrecision"/>
<polygon points="268.1,217.4 275.8,221.1 281.3,217.9 273.7,213.7" fill="rgb(196,196,196)"/>
<polygon points="275.8,221.1 283.6,224.8 289.1,222.0 281.3,217.9" fill="rgb(196,196,196)"/>
<polygon points="283.6,224.8 291.4,228.5 296.9,226.2 289.1,222.0" fill="rgb(196,196,196)"/>
<polygon points="262.5,221.3 270.2,224.4 275.8,221.1 268.1,217.4" fill="rgb(195,195,195)"/>
<polygon points="270.2,224.4 278.0,227.7 283.6,224.8 275.8,221.1" fill="rgb(195,195,195)"/>
<polygon points="278.0,227.7 285.9,230.9 291.4,228.5 283.6,224.8" fill="rgb(196,196,196)"/>
<polygon points="256.7,225.1 264.5,227.8 270.2,224.4 262.5,221.3" fill="rgb(194,194,194)"/>
<polygon points="264.5,227.8 272.2,230.6 278.0,227.7 270.2,224.4" fill="rgb(194,194,194)"/>
<polygon points="272.2,230.6 280.1,233.3 285.9,230.9 278.0,227.7" fill="rgb(195,195,195)"/>
<polygon points="256.7,225.1 280.1,233.3 296.9,226.2 273.7,213.7" fill="none" stroke="#262626" stroke-width="0.7" stroke-linejoin="round" shape-rendering="geometricPrecision"/>
<polygon points="392.4,220.0 400.7,222.1 404.9,218.3 396.7,216.2" fill="rgb(177,177,177)"/>
<polygon points="400.7,222.1 409.1,224.3 413.2,220.4 404.9,218.3" fill="rgb(181,181,181)"/>
<polygon points="388.1,223.8 396.4,226.0 400.7,222.1 392.4,220.0" fill="rgb(183,183,183)"/>
<polygon points="409.1,224.3 417.6,226.5 421.6,222.5 413.2,220.4" fill="rgb(185,185,185)"/>
<polygon points="396.4,226.0 404.9,228.2 409.1,224.3 400.7,222.1" fill="rgb(187,187,187)"/>
<polygon points="383.7,227.8 392.1,230.0 396.4,226.0 388.1,223.8" fill="rgb(189,189,189)"/>
<polygon points="404.9,228.2 413.5,230.4 417.6,226.5 409.1,224.3" fill="rgb(190,190,190)"/>
<polygon points="392.1,230.0 400.6,232.3 404.9,228.2 396.4,226.0" fill="rgb(191,191,191)"/>
<polygon points="400.6,232.3 409.3,234.5 413.5,230.4 404.9,228.2" fill="rgb(194,194,194)"/>
<polygon points="383.7,227.8 409.3,234.5 421.6,222.5 396.7,216.2" fill="none" stroke="#262626" stroke-width="0.7" stroke-linejoin="round" shape-rendering="geometricPrecision"/>
<polygon points="517.0,227.0 526.3,227.7 529.6,220.8 520.6,218.7" fill="rgb(205,205,205)"/>
<polygon points="526.3,227.7 535.6,228.4 538.7,223.0 529.6,220.8" fill="rgb(203,203,203)"/>
<polygon points="513.3,235.3 522.9,234.6 526.3,227.7 517.0,227.0" fill="rgb(206,206,206)"/>
<polygon points="535.6,228.4 545.2,229.1 547.9,225.1 538.7,223.0" fill="rgb(201,201,201)"/>
<polygon points="509.6,243.8 519.4,241.7 522.9,234.6 513.3,235.3" fill="rgb(207,207,207)"/>
<polygon points="522.9,234.6 532.5,233.9 535.6,228.4 526.3,227.7" fill="rgb(205,205,205)"/>
<polygon points="532.5,233.9 542.4,233.1 545.2,229.1 535.6,228.4" fill="rgb(203,203,203)"/>
<polygon points="519.4,241.7 529.4,239.5 532.5,233.9 522.9,234.6" fill="rgb(206,206,206)"/>
<polygon points="529.4,239.5 539.6,237.3 542.4,233.1 532.5,233.9" fill="rgb(204,204,204)"/>
<polygon points="509.6,243.8 539.6,237.3 547.9,225.1 520.6,218.7" fill="none" stroke="#262626" stroke-width="0.7" stroke-linejoin="round" shape-rendering="geometricPrecision"/>
<polygon points="479.1,245.6 487.9,248.0 490.6,248.1 481.4,250.2" fill="rgb(166,166,166)"/>
<polygon points="487.9,248.0 496.8,250.5 500.0,246.0 490.6,248.1" fill="rgb(173,173,173)"/>
<polygon points="496.8,250.5 505.8,253.0 509.6,243.8 500.0,246.0" fill="rgb(179,179,179)"/>
<polygon points="476.8,240.8 485.1,248.0 487.9,248.0 479.1,245.6" fill="rgb(171,171,171)"/>
<polygon points="485.1,248.0 493.5,255.1 496.8,250.5 487.9,248.0" fill="rgb(177,177,177)"/>
<polygon points="493.5,255.1 501.9,262.3 505.8,253.0 496.8,250.5" fill="rgb(182,182,182)"/>
<polygon points="490.1,259.9 497.9,271.7 501.9,262.3 493.5,255.1" fill="rgb(185,185,185)"/>
<polygon points="482.2,247.9 490.1,259.9 493.5,255.1 485.1,248.0" fill="rgb(181,181,181)"/>
<polygon points="474.3,235.9 482.2,247.9 485.1,248.0 476.8,240.8" fill="rgb(176,176,176)"/>
<polygon points="474.3,235.9 497.9,271.7 509.6,243.8 481.4,250.2" fill="none" stroke="#262626" stroke-width="0.7" stroke-linejoin="round" shape-rendering="geometricPrecision"/>
<polygon points="316.8,269.3 324.1,260.1 329.1,254.8 321.8,265.0" fill="rgb(154,154,154)"/>
<polygon points="311.7,273.6 319.1,265.5 324.1,260.1 316.8,269.3" fill="rgb(175,175,175)"/>
<polygon points="324.1,260.1 331.7,250.6 336.6,244.2 329.1,254.8" fill="rgb(155,155,155)"/>
<polygon points="306.5,278.1 313.9,271.1 319.1,265.5 311.7,273.6" fill="rgb(185,185,185)"/>
<polygon points="319.1,265.5 326.7,257.2 331.7,250.6 324.1,260.1" fill="rgb(176,176,176)"/>
<polygon points="313.9,271.1 321.6,263.8 326.7,257.2 319.1,265.5" fill="rgb(187,187,187)"/>
<polygon points="331.7,250.6 339.6,240.8 344.5,233.2 336.6,244.2" fill="rgb(156,156,156)"/>
<polygon points="326.7,257.2 334.5,248.5 339.6,240.8 331.7,250.6" fill="rgb(177,177,177)"/>
<polygon points="321.6,263.8 329.4,256.4 334.5,248.5 326.7,257.2" fill="rgb(188,188,188)"/>
<polygon points="306.5,278.1 329.4,256.4 344.5,233.2 321.8,265.0" fill="none" stroke="#262626" stroke-width="0.7" stroke-linejoin="round" shape-rendering="geometricPrecision"/>
<polygon points="354.2,225.1 362.4,227.3 367.1,223.4 358.9,221.3" fill="rgb(185,185,185)"/>
<polygon points="362.4,227.3 370.7,229.6 375.3,225.6 367.1,223.4" fill="rgb(188,188,188)"/>
<polygon points="349.4,229.1 357.7,231.4 362.4,227.3 354.2,225.1" fill="rgb(192,192,192)"/>
<polygon points="370.7,229.6 379.1,231.8 383.7,227.8 375.3,225.6" fill="rgb(190,190,190)"/>
<polygon points="357.7,231.4 366.0,233.6 370.7,229.6 362.4,227.3" fill="rgb(193,193,193)"/>
<polygon points="344.5,233.2 352.8,235.5 357.7,231.4 349.4,229.1" fill="rgb(197,197,197)"/>
<polygon points="366.0,233.6 374.5,235.9 379.1,231.8 370.7,229.6" fill="rgb(194,194,194)"/>
<polygon points="352.8,235.5 361.3,237.8 366.0,233.6 357.7,231.4" fill="rgb(197,197,197)"/>
<polygon points="361.3,237.8 369.8,240.1 374.5,235.9 366.0,233.6" fill="rgb(197,197,197)"/>
<polygon points="344.5,233.2 369.8,240.1 383.7,227.8 358.9,221.3" fill="none" stroke="#262626" stroke-width="0.7" stroke-linejoin="round" shape-rendering="geometricPrecision"/>
<polygon points="417.6,226.5 426.2,228.7 430.2,224.7 421.6,222.5" fill="rgb(187,187,187)"/>
<polygon points="426.2,228.7 434.9,230.9 438.8,226.9 430.2,224.7" fill="rgb(187,187,187)"/>
<polygon points="413.5,230.4 422.1,232.7 426.2,228.7 417.6,226.5" fill="rgb(191,191,191)"/>
<polygon points="434.9,230.9 443.7,233.1 447.5,229.1 438.8,226.9" fill="rgb(187,187,187)"/>
<polygon points="422.1,232.7 430.9,235.0 434.9,230.9 426.2,228.7" fill="rgb(191,191,191)"/>
<polygon points="409.3,234.5 418.0,236.8 422.1,232.7 413.5,230.4" fill="rgb(195,195,195)"/>
<polygon points="430.9,235.0 439.8,237.3 443.7,233.1 434.9,230.9" fill="rgb(191,191,191)"/>
<polygon points="418.0,236.8 426.8,239.2 430.9,235.0 422.1,232.7" fill="rgb(195,195,195)"/>
<polygon points="426.8,239.2 435.8,241.5 439.8,237.3 430.9,235.0" fill="rgb(195,195,195)"/>
<polygon points="409.3,234.5 435.8,241.5 447.5,229.1 421.6,222.5" fill="none" stroke="#262626" stroke-width="0.7" stroke-linejoin="round" shape-rendering="geometricPrecision"/>
<polygon points="545.2,229.1 554.5,231.3 557.1,227.3 547.9,225.1" fill="rgb(199,199,199)"/>
<polygon points="554.5,231.3 564.0,233.6 566.5,229.5 557.1,227.3" fill="rgb(198,198,198)"/>
<polygon points="542.4,233.1 551.9,235.4 554.5,231.3 545.2,229.1" fill="rgb(201,201,201)"/>
<polygon points="564.0,233.6 573.6,235.9 576.0,231.8 566.5,229.5" fill="rgb(197,197,197)"/>
<polygon points="551.9,235.4 561.4,237.7 564.0,233.6 554.5,231.3" fill="rgb(200,200,200)"/>
<polygon points="539.6,237.3 549.1,239.6 551.9,235.4 542.4,233.1" fill="rgb(203,203,203)"/>
<polygon points="561.4,237.7 571.1,240.0 573.6,235.9 564.0,233.6" fill="rgb(199,199,199)"/>
<polygon points="549.1,239.6 558.8,241.9 561.4,237.7 551.9,235.4" fill="rgb(202,202,202)"/>
<polygon points="558.8,241.9 568.5,244.3 571.1,240.0 561.4,237.7" fill="rgb(200,200,200)"/>
<polygon points="539.6,237.3 568.5,244.3 576.0,231.8 547.9,225.1" fill="none" stroke="#262626" stroke-width="0.7" stroke-linejoin="round" shape-rendering="geometricPrecision"/>
<polygon points="505.8,253.0 515.7,250.3 519.4,241.7 509.6,243.8" fill="rgb(207,207,207)"/>
<polygon points="501.9,262.3 511.9,259.0 515.7,250.3 505.8,253.0" fill="rgb(204,204,204)"/>
<polygon points="515.7,250.3 525.8,247.5 529.4,239.5 519.4,241.7" fill="rgb(206,206,206)"/>
<polygon points="497.9,271.7 508.1,267.8 511.9,259.0 501.9,262.3" fill="rgb(202,202,202)"/>
<polygon points="511.9,259.0 522.2,255.5 525.8,247.5 515.7,250.3" fill="rgb(204,204,204)"/>
<polygon points="525.8,247.5 536.2,244.6 539.6,237.3 529.4,239.5" fill="rgb(205,205,205)"/>
<polygon points="508.1,267.8 518.5,263.7 522.2,255.5 511.9,259.0" fill="rgb(202,202,202)"/>
<polygon points="522.2,255.5 532.7,252.0 536.2,244.6 525.8,247.5" fill="rgb(203,203,203)"/>
<polygon points="518.5,263.7 529.1,259.6 532.7,252.0 522.2,255.5" fill="rgb(202,202,202)"/>
<polygon points="497.9,271.7 529.1,259.6 539.6,237.3 509.6,243.8" fill="none" stroke="#262626" stroke-width="0.7" stroke-linejoin="round" shape-rendering="geometricPrecision"/>
<polygon points="292.3,265.9 301.0,280.1 306.5,278.1 297.8,263.4" fill="rgb(172,172,172)"/>
<polygon points="283.4,251.5 292.3,265.9 297.8,263.4 289.1,248.5" fill="rgb(172,172,172)"/>
<polygon points="286.5,268.5 295.4,282.2 301.0,280.1 292.3,265.9" fill="rgb(171,171,171)"/>
<polygon points="274.4,237.0 283.4,251.5 289.1,248.5 280.1,233.3" fill="rgb(173,173,173)"/>
<polygon points="277.6,254.7 286.5,268.5 292.3,265.9 283.4,251.5" fill="rgb(171,171,171)"/>
<polygon points="268.5,240.7 277.6,254.7 283.4,251.5 274.4,237.0" fill="rgb(172,172,172)"/>
<polygon points="280.7,271.2 289.6,284.3 295.4,282.2 286.5,268.5" fill="rgb(169,169,169)"/>
<polygon points="271.6,257.9 280.7,271.2 286.5,268.5 277.6,254.7" fill="rgb(170,170,170)"/>
<polygon points="262.4,244.5 271.6,257.9 277.6,254.7 268.5,240.7" fill="rgb(171,171,171)"/>
<polygon points="262.4,244.5 289.6,284.3 306.5,278.1 280.1,233.3" fill="none" stroke="#262626" stroke-width="0.7" stroke-linejoin="round" shape-rendering="geometricPrecision"/>
<polygon points="250.8,229.1 258.6,231.7 264.5,227.8 256.7,225.1" fill="rgb(194,194,194)"/>
<polygon points="258.6,231.7 266.4,234.3 272.2,230.6 264.5,227.8" fill="rgb(194,194,194)"/>
<polygon points="266.4,234.3 274.4,237.0 280.1,233.3 272.2,230.6" fill="rgb(194,194,194)"/>
<polygon points="244.8,233.2 252.6,235.7 258.6,231.7 250.8,229.1" fill="rgb(194,194,194)"/>
<polygon points="252.6,235.7 260.5,238.2 266.4,234.3 258.6,231.7" fill="rgb(193,193,193)"/>
<polygon points="238.7,237.4 246.5,239.7 252.6,235.7 244.8,233.2" fill="rgb(195,195,195)"/>
<polygon points="260.5,238.2 268.5,240.7 274.4,237.0 266.4,234.3" fill="rgb(193,193,193)"/>
<polygon points="246.5,239.7 254.4,242.1 260.5,238.2 252.6,235.7" fill="rgb(193,193,193)"/>
<polygon points="254.4,242.1 262.4,244.5 268.5,240.7 260.5,238.2" fill="rgb(191,191,191)"/>
<polygon points="238.7,237.4 262.4,244.5 280.1,233.3 256.7,225.1" fill="none" stroke="#262626" stroke-width="0.7" stroke-linejoin="round" shape-rendering="geometricPrecision"/>
<polygon points="301.0,280.1 308.7,277.1 313.9,271.1 306.5,278.1" fill="rgb(193,193,193)"/>
<polygon points="295.4,282.2 303.4,283.3 308.7,277.1 301.0,280.1" fill="rgb(197,197,197)"/>
<polygon points="308.7,277.1 316.5,274.0 321.6,263.8 313.9,271.1" fill="rgb(195,195,195)"/>
<polygon points="303.4,283.3 311.4,284.3 316.5,274.0 308.7,277.1" fill="rgb(198,198,198)"/>
<polygon points="289.6,284.3 297.9,289.5 303.4,283.3 295.4,282.2" fill="rgb(201,201,201)"/>
<polygon points="316.5,274.0 324.6,270.9 329.4,256.4 321.6,263.8" fill="rgb(197,197,197)"/>
<polygon points="297.9,289.5 306.3,294.7 311.4,284.3 303.4,283.3" fill="rgb(201,201,201)"/>
<polygon points="311.4,284.3 319.6,285.4 324.6,270.9 316.5,274.0" fill="rgb(200,200,200)"/>
<polygon points="306.3,294.7 314.7,300.0 319.6,285.4 311.4,284.3" fill="rgb(202,202,202)"/>
<polygon points="289.6,284.3 314.7,300.0 329.4,256.4 306.5,278.1" fill="none" stroke="#262626" stroke-width="0.7" stroke-linejoin="round" shape-rendering="geometricPrecision"/>
<polygon points="379.1,231.8 387.6,234.1 392.1,230.0 383.7,227.8" fill="rgb(192,192,192)"/>
<polygon points="387.6,234.1 396.2,236.4 400.6,232.3 392.1,230.0" fill="rgb(194,194,194)"/>
<polygon points="374.5,235.9 383.1,238.2 387.6,234.1 379.1,231.8" fill="rgb(195,195,195)"/>
<polygon points="396.2,236.4 404.9,238.7 409.3,234.5 400.6,232.3" fill="rgb(196,196,196)"/>
<polygon points="383.1,238.2 391.7,240.6 396.2,236.4 387.6,234.1" fill="rgb(196,196,196)"/>
<polygon points="369.8,240.1 378.4,242.5 383.1,238.2 374.5,235.9" fill="rgb(197,197,197)"/>
<polygon points="391.7,240.6 400.5,243.0 404.9,238.7 396.2,236.4" fill="rgb(196,196,196)"/>
<polygon points="378.4,242.5 387.2,244.9 391.7,240.6 383.1,238.2" fill="rgb(197,197,197)"/>
<polygon points="387.2,244.9 396.0,247.3 400.5,243.0 391.7,240.6" fill="rgb(197,197,197)"/>
<polygon points="369.8,240.1 396.0,247.3 409.3,234.5 383.7,227.8" fill="none" stroke="#262626" stroke-width="0.7" stroke-linejoin="round" shape-rendering="geometricPrecision"/>
<polygon points="443.7,233.1 452.6,235.4 456.3,231.3 447.5,229.1" fill="rgb(188,188,188)"/>
<polygon points="452.6,235.4 461.6,237.7 465.3,233.6 456.3,231.3" fill="rgb(189,189,189)"/>
<polygon points="439.8,237.3 448.7,239.6 452.6,235.4 443.7,233.1" fill="rgb(192,192,192)"/>
<polygon points="461.6,237.7 470.7,240.1 474.3,235.9 465.3,233.6" fill="rgb(190,190,190)"/>
<polygon points="448.7,239.6 457.8,242.0 461.6,237.7 452.6,235.4" fill="rgb(192,192,192)"/>
<polygon points="435.8,241.5 444.8,243.9 448.7,239.6 439.8,237.3" fill="rgb(195,195,195)"/>
<polygon points="457.8,242.0 467.0,244.4 470.7,240.1 461.6,237.7" fill="rgb(192,192,192)"/>
<polygon points="444.8,243.9 454.0,246.3 457.8,242.0 448.7,239.6" fill="rgb(195,195,195)"/>
<polygon points="454.0,246.3 463.2,248.8 467.0,244.4 457.8,242.0" fill="rgb(194,194,194)"/>
<polygon points="435.8,241.5 463.2,248.8 474.3,235.9 447.5,229.1" fill="none" stroke="#262626" stroke-width="0.7" stroke-linejoin="round" shape-rendering="geometricPrecision"/>
<polygon points="487.0,261.9 495.1,272.7 497.9,271.7 490.1,259.9" fill="rgb(179,179,179)"/>
<polygon points="478.9,251.0 487.0,261.9 490.1,259.9 482.2,247.9" fill="rgb(179,179,179)"/>
<polygon points="470.7,240.1 478.9,251.0 482.2,247.9 474.3,235.9" fill="rgb(178,178,178)"/>
<polygon points="483.8,264.0 492.2,273.8 495.1,272.7 487.0,261.9" fill="rgb(182,182,182)"/>
<polygon points="475.4,254.2 483.8,264.0 487.0,261.9 478.9,251.0" fill="rgb(180,180,180)"/>
<polygon points="467.0,244.4 475.4,254.2 478.9,251.0 470.7,240.1" fill="rgb(179,179,179)"/>
<polygon points="480.6,266.2 489.2,274.9 492.2,273.8 483.8,264.0" fill="rgb(184,184,184)"/>
<polygon points="471.9,257.5 480.6,266.2 483.8,264.0 475.4,254.2" fill="rgb(182,182,182)"/>
<polygon points="463.2,248.8 471.9,257.5 475.4,254.2 467.0,244.4" fill="rgb(180,180,180)"/>
<polygon points="463.2,248.8 489.2,274.9 497.9,271.7 474.3,235.9" fill="none" stroke="#262626" stroke-width="0.7" stroke-linejoin="round" shape-rendering="geometricPrecision"/>
<polygon points="339.6,240.8 347.9,242.0 352.8,235.5 344.5,233.2" fill="rgb(201,201,201)"/>
<polygon points="347.9,242.0 356.4,243.2 361.3,237.8 352.8,235.5" fill="rgb(200,200,200)"/>
<polygon points="334.5,248.5 342.9,248.6 347.9,242.0 339.6,240.8" fill="rgb(202,202,202)"/>
<polygon points="356.4,243.2 365.0,244.4 369.8,240.1 361.3,237.8" fill="rgb(200,200,200)"/>
<polygon points="342.9,248.6 351.4,248.7 356.4,243.2 347.9,242.0" fill="rgb(202,202,202)"/>
<polygon points="329.4,256.4 337.8,255.4 342.9,248.6 334.5,248.5" fill="rgb(203,203,203)"/>
<polygon points="351.4,248.7 360.0,248.8 365.0,244.4 356.4,243.2" fill="rgb(202,202,202)"/>
<polygon points="337.8,255.4 346.3,254.4 351.4,248.7 342.9,248.6" fill="rgb(203,203,203)"/>
<polygon points="346.3,254.4 355.0,253.3 360.0,248.8 351.4,248.7" fill="rgb(203,203,203)"/>
<polygon points="329.4,256.4 355.0,253.3 369.8,240.1 344.5,233.2" fill="none" stroke="#262626" stroke-width="0.7" stroke-linejoin="round" shape-rendering="geometricPrecision"/>
<polygon points="396.0,247.3 423.2,254.8 435.8,241.5 409.3,234.5" fill="rgb(197,197,197)"/>
<polygon points="396.0,247.3 423.2,254.8 435.8,241.5 409.3,234.5" fill="none" stroke="#262626" stroke-width="0.7" stroke-linejoin="round" shape-rendering="geometricPrecision"/>
<polygon points="495.1,272.7 505.0,270.9 508.1,267.8 497.9,271.7" fill="rgb(199,199,199)"/>
<polygon points="505.0,270.9 515.2,269.1 518.5,263.7 508.1,267.8" fill="rgb(200,200,200)"/>
<polygon points="492.2,273.8 502.0,274.1 505.0,270.9 495.1,272.7" fill="rgb(198,198,198)"/>
<polygon points="502.0,274.1 511.9,274.5 515.2,269.1 505.0,270.9" fill="rgb(199,199,199)"/>
<polygon points="515.2,269.1 525.6,267.2 529.1,259.6 518.5,263.7" fill="rgb(201,201,201)"/>
<polygon points="489.2,274.9 498.8,277.4 502.0,274.1 492.2,273.8" fill="rgb(198,198,198)"/>
<polygon points="511.9,274.5 521.9,274.8 525.6,267.2 515.2,269.1" fill="rgb(200,200,200)"/>
<polygon points="498.8,277.4 508.4,280.0 511.9,274.5 502.0,274.1" fill="rgb(198,198,198)"/>
<polygon points="508.4,280.0 518.2,282.6 521.9,274.8 511.9,274.5" fill="rgb(199,199,199)"/>
<polygon points="489.2,274.9 518.2,282.6 529.1,259.6 497.9,271.7" fill="none" stroke="#262626" stroke-width="0.7" stroke-linejoin="round" shape-rendering="geometricPrecision"/>
<polygon points="536.2,244.6 545.9,245.9 549.1,239.6 539.6,237.3" fill="rgb(203,203,203)"/>
<polygon points="545.9,245.9 555.9,247.3 558.8,241.9 549.1,239.6" fill="rgb(203,203,203)"/>
<polygon points="532.7,252.0 542.7,252.4 545.9,245.9 536.2,244.6" fill="rgb(203,203,203)"/>
<polygon points="555.9,247.3 565.9,248.7 568.5,244.3 558.8,241.9" fill="rgb(202,202,202)"/>
<polygon points="542.7,252.4 552.9,252.8 555.9,247.3 545.9,245.9" fill="rgb(203,203,203)"/>
<polygon points="529.1,259.6 539.4,259.0 542.7,252.4 532.7,252.0" fill="rgb(202,202,202)"/>
<polygon points="552.9,252.8 563.3,253.2 565.9,248.7 555.9,247.3" fill="rgb(202,202,202)"/>
<polygon points="539.4,259.0 549.9,258.4 552.9,252.8 542.7,252.4" fill="rgb(203,203,203)"/>
<polygon points="549.9,258.4 560.6,257.8 563.3,253.2 552.9,252.8" fill="rgb(203,203,203)"/>
<polygon points="529.1,259.6 560.6,257.8 568.5,244.3 539.6,237.3" fill="none" stroke="#262626" stroke-width="0.7" stroke-linejoin="round" shape-rendering="geometricPrecision"/>
<polygon points="232.4,241.6 240.3,244.0 246.5,239.7 238.7,237.4" fill="rgb(196,196,196)"/>
<polygon points="240.3,244.0 248.2,246.4 254.4,242.1 246.5,239.7" fill="rgb(196,196,196)"/>
<polygon points="226.0,246.0 233.9,248.4 240.3,244.0 232.4,241.6" fill="rgb(196,196,196)"/>
<polygon points="248.2,246.4 256.3,248.9 262.4,244.5 254.4,242.1" fill="rgb(196,196,196)"/>
<polygon points="233.9,248.4 241.9,250.9 248.2,246.4 240.3,244.0" fill="rgb(196,196,196)"/>
<polygon points="219.4,250.4 227.4,252.9 233.9,248.4 226.0,246.0" fill="rgb(197,197,197)"/>
<polygon points="241.9,250.9 250.0,253.4 256.3,248.9 248.2,246.4" fill="rgb(197,197,197)"/>
<polygon points="227.4,252.9 235.4,255.4 241.9,250.9 233.9,248.4" fill="rgb(197,197,197)"/>
<polygon points="235.4,255.4 243.6,258.0 250.0,253.4 241.9,250.9" fill="rgb(197,197,197)"/>
<polygon points="219.4,250.4 243.6,258.0 262.4,244.5 238.7,237.4" fill="none" stroke="#262626" stroke-width="0.7" stroke-linejoin="round" shape-rendering="geometricPrecision"/>
<polygon points="324.6,270.9 332.8,267.8 337.8,255.4 329.4,256.4" fill="rgb(199,199,199)"/>
<polygon points="319.6,285.4 327.7,280.4 332.8,267.8 324.6,270.9" fill="rgb(201,201,201)"/>
<polygon points="314.7,300.0 322.7,293.0 327.7,280.4 319.6,285.4" fill="rgb(203,203,203)"/>
<polygon points="332.8,267.8 341.2,264.7 346.3,254.4 337.8,255.4" fill="rgb(202,202,202)"/>
<polygon points="327.7,280.4 336.1,275.2 341.2,264.7 332.8,267.8" fill="rgb(203,203,203)"/>
<polygon points="322.7,293.0 330.9,285.8 336.1,275.2 327.7,280.4" fill="rgb(205,205,205)"/>
<polygon points="341.2,264.7 349.8,261.5 355.0,253.3 346.3,254.4" fill="rgb(204,204,204)"/>
<polygon points="336.1,275.2 344.6,269.8 349.8,261.5 341.2,264.7" fill="rgb(205,205,205)"/>
<polygon points="330.9,285.8 339.3,278.3 344.6,269.8 336.1,275.2" fill="rgb(206,206,206)"/>
<polygon points="314.7,300.0 339.3,278.3 355.0,253.3 329.4,256.4" fill="none" stroke="#262626" stroke-width="0.7" stroke-linejoin="round" shape-rendering="geometricPrecision"/>
<polygon points="365.0,244.4 373.7,246.8 378.4,242.5 369.8,240.1" fill="rgb(199,199,199)"/>
<polygon points="373.7,246.8 382.5,249.3 387.2,244.9 378.4,242.5" fill="rgb(198,198,198)"/>
<polygon points="360.0,248.8 368.8,251.3 373.7,246.8 365.0,244.4" fill="rgb(200,200,200)"/>
<polygon points="382.5,249.3 391.4,251.8 396.0,247.3 387.2,244.9" fill="rgb(198,198,198)"/>
<polygon points="368.8,251.3 377.7,253.8 382.5,249.3 373.7,246.8" fill="rgb(199,199,199)"/>
<polygon points="355.0,253.3 363.8,255.9 368.8,251.3 360.0,248.8" fill="rgb(201,201,201)"/>
<polygon points="377.7,253.8 386.7,256.4 391.4,251.8 382.5,249.3" fill="rgb(199,199,199)"/>
<polygon points="363.8,255.9 372.8,258.4 377.7,253.8 368.8,251.3" fill="rgb(200,200,200)"/>
<polygon points="372.8,258.4 381.8,261.0 386.7,256.4 377.7,253.8" fill="rgb(200,200,200)"/>
<polygon points="355.0,253.3 381.8,261.0 396.0,247.3 369.8,240.1" fill="none" stroke="#262626" stroke-width="0.7" stroke-linejoin="round" shape-rendering="geometricPrecision"/>
<polygon points="431.7,245.8 440.8,248.3 444.8,243.9 435.8,241.5" fill="rgb(197,197,197)"/>
<polygon points="440.8,248.3 450.0,250.7 454.0,246.3 444.8,243.9" fill="rgb(196,196,196)"/>
<polygon points="427.5,250.3 436.7,252.8 440.8,248.3 431.7,245.8" fill="rgb(197,197,197)"/>
<polygon points="450.0,250.7 459.4,253.2 463.2,248.8 454.0,246.3" fill="rgb(196,196,196)"/>
<polygon points="436.7,252.8 446.0,255.3 450.0,250.7 440.8,248.3" fill="rgb(197,197,197)"/>
<polygon points="423.2,254.8 432.5,257.3 436.7,252.8 427.5,250.3" fill="rgb(197,197,197)"/>
<polygon points="446.0,255.3 455.4,257.8 459.4,253.2 450.0,250.7" fill="rgb(196,196,196)"/>
<polygon points="432.5,257.3 441.9,259.9 446.0,255.3 436.7,252.8" fill="rgb(197,197,197)"/>
<polygon points="441.9,259.9 451.4,262.5 455.4,257.8 446.0,255.3" fill="rgb(196,196,196)"/>
<polygon points="423.2,254.8 451.4,262.5 463.2,248.8 435.8,241.5" fill="none" stroke="#262626" stroke-width="0.7" stroke-linejoin="round" shape-rendering="geometricPrecision"/>
<polygon points="283.0,278.7 291.7,287.1 297.9,289.5 289.6,284.3" fill="rgb(165,165,165)"/>
<polygon points="291.7,287.1 300.5,295.6 306.3,294.7 297.9,289.5" fill="rgb(162,162,162)"/>
<polygon points="300.5,295.6 309.2,304.0 314.7,300.0 306.3,294.7" fill="rgb(160,160,160)"/>
<polygon points="294.4,296.4 303.5,308.0 309.2,304.0 300.5,295.6" fill="rgb(157,157,157)"/>
<polygon points="285.3,284.7 294.4,296.4 300.5,295.6 291.7,287.1" fill="rgb(160,160,160)"/>
<polygon points="276.1,272.9 285.3,284.7 291.7,287.1 283.0,278.7" fill="rgb(163,163,163)"/>
<polygon points="288.2,297.3 297.6,312.2 303.5,308.0 294.4,296.4" fill="rgb(154,154,154)"/>
<polygon points="278.6,282.1 288.2,297.3 294.4,296.4 285.3,284.7" fill="rgb(158,158,158)"/>
<polygon points="268.8,266.7 278.6,282.1 285.3,284.7 276.1,272.9" fill="rgb(161,161,161)"/>
<polygon points="268.8,266.7 297.6,312.2 314.7,300.0 289.6,284.3" fill="none" stroke="#262626" stroke-width="0.7" stroke-linejoin="round" shape-rendering="geometricPrecision"/>
<polygon points="274.1,268.8 283.0,278.7 289.6,284.3 280.7,271.2" fill="rgb(169,169,169)"/>
<polygon points="265.2,258.9 274.1,268.8 280.7,271.2 271.6,257.9" fill="rgb(175,175,175)"/>
<polygon points="256.3,248.9 265.2,258.9 271.6,257.9 262.4,244.5" fill="rgb(179,179,179)"/>
<polygon points="250.0,253.4 258.7,259.9 265.2,258.9 256.3,248.9" fill="rgb(174,174,174)"/>
<polygon points="258.7,259.9 267.3,266.4 274.1,268.8 265.2,258.9" fill="rgb(171,171,171)"/>
<polygon points="267.3,266.4 276.1,272.9 283.0,278.7 274.1,268.8" fill="rgb(167,167,167)"/>
<polygon points="243.6,258.0 251.9,260.9 258.7,259.9 250.0,253.4" fill="rgb(168,168,168)"/>
<polygon points="251.9,260.9 260.3,263.8 267.3,266.4 258.7,259.9" fill="rgb(166,166,166)"/>
<polygon points="260.3,263.8 268.8,266.7 276.1,272.9 267.3,266.4" fill="rgb(164,164,164)"/>
<polygon points="243.6,258.0 268.8,266.7 289.6,284.3 262.4,244.5" fill="none" stroke="#262626" stroke-width="0.7" stroke-linejoin="round" shape-rendering="geometricPrecision"/>
<polygon points="477.0,270.0 485.9,278.3 489.2,274.9 480.6,266.2" fill="rgb(189,189,189)"/>
<polygon points="468.2,261.6 477.0,270.0 480.6,266.2 471.9,257.5" fill="rgb(190,190,190)"/>
<polygon points="459.4,253.2 468.2,261.6 471.9,257.5 463.2,248.8" fill="rgb(192,192,192)"/>
<polygon points="455.4,257.8 464.4,265.9 468.2,261.6 459.4,253.2" fill="rgb(194,194,194)"/>
<polygon points="464.4,265.9 473.4,273.9 477.0,270.0 468.2,261.6" fill="rgb(193,193,193)"/>
<polygon points="473.4,273.9 482.4,281.9 485.9,278.3 477.0,270.0" fill="rgb(191,191,191)"/>
<polygon points="451.4,262.5 460.5,270.2 464.4,265.9 455.4,257.8" fill="rgb(196,196,196)"/>
<polygon points="460.5,270.2 469.7,277.9 473.4,273.9 464.4,265.9" fill="rgb(195,195,195)"/>
<polygon points="469.7,277.9 478.8,285.6 482.4,281.9 473.4,273.9" fill="rgb(194,194,194)"/>
<polygon points="451.4,262.5 478.8,285.6 489.2,274.9 463.2,248.8" fill="none" stroke="#262626" stroke-width="0.7" stroke-linejoin="round" shape-rendering="geometricPrecision"/>
<polygon points="525.6,267.2 536.1,265.6 539.4,259.0 529.1,259.6" fill="rgb(201,201,201)"/>
<polygon points="521.9,274.8 532.7,272.4 536.1,265.6 525.6,267.2" fill="rgb(200,200,200)"/>
<polygon points="536.1,265.6 546.8,264.0 549.9,258.4 539.4,259.0" fill="rgb(202,202,202)"/>
<polygon points="518.2,282.6 529.2,279.2 532.7,272.4 521.9,274.8" fill="rgb(199,199,199)"/>
<polygon points="532.7,272.4 543.7,269.8 546.8,264.0 536.1,265.6" fill="rgb(200,200,200)"/>
<polygon points="546.8,264.0 557.8,262.4 560.6,257.8 549.9,258.4" fill="rgb(202,202,202)"/>
<polygon points="529.2,279.2 540.4,275.7 543.7,269.8 532.7,272.4" fill="rgb(198,198,198)"/>
<polygon points="543.7,269.8 554.9,267.2 557.8,262.4 546.8,264.0" fill="rgb(200,200,200)"/>
<polygon points="540.4,275.7 552.0,272.2 554.9,267.2 543.7,269.8" fill="rgb(198,198,198)"/>
<polygon points="518.2,282.6 552.0,272.2 560.6,257.8 529.1,259.6" fill="none" stroke="#262626" stroke-width="0.7" stroke-linejoin="round" shape-rendering="geometricPrecision"/>
<polygon points="309.2,304.0 317.3,300.6 322.7,293.0 314.7,300.0" fill="rgb(204,204,204)"/>
<polygon points="303.5,308.0 311.8,308.3 317.3,300.6 309.2,304.0" fill="rgb(204,204,204)"/>
<polygon points="317.3,300.6 325.6,297.1 330.9,285.8 322.7,293.0" fill="rgb(205,205,205)"/>
<polygon points="297.6,312.2 306.3,316.2 311.8,308.3 303.5,308.0" fill="rgb(204,204,204)"/>
<polygon points="311.8,308.3 320.4,308.6 325.6,297.1 317.3,300.6" fill="rgb(206,206,206)"/>
<polygon points="306.3,316.2 315.0,320.2 320.4,308.6 311.8,308.3" fill="rgb(206,206,206)"/>
<polygon points="325.6,297.1 334.2,293.6 339.3,278.3 330.9,285.8" fill="rgb(207,207,207)"/>
<polygon points="320.4,308.6 329.0,309.0 334.2,293.6 325.6,297.1" fill="rgb(208,208,208)"/>
<polygon points="315.0,320.2 323.9,324.3 329.0,309.0 320.4,308.6" fill="rgb(208,208,208)"/>
<polygon points="297.6,312.2 323.9,324.3 339.3,278.3 314.7,300.0" fill="none" stroke="#262626" stroke-width="0.7" stroke-linejoin="round" shape-rendering="geometricPrecision"/>
<polygon points="391.4,251.8 400.4,254.3 405.0,249.8 396.0,247.3" fill="rgb(198,198,198)"/>
<polygon points="400.4,254.3 409.6,256.8 414.0,252.3 405.0,249.8" fill="rgb(198,198,198)"/>
<polygon points="386.7,256.4 395.8,258.9 400.4,254.3 391.4,251.8" fill="rgb(199,199,199)"/>
<polygon points="409.6,256.8 418.8,259.4 423.2,254.8 414.0,252.3" fill="rgb(198,198,198)"/>
<polygon points="395.8,258.9 405.0,261.5 409.6,256.8 400.4,254.3" fill="rgb(199,199,199)"/>
<polygon points="381.8,261.0 391.0,263.7 395.8,258.9 386.7,256.4" fill="rgb(200,200,200)"/>
<polygon points="405.0,261.5 414.3,264.2 418.8,259.4 409.6,256.8" fill="rgb(200,200,200)"/>
<polygon points="391.0,263.7 400.3,266.3 405.0,261.5 395.8,258.9" fill="rgb(201,201,201)"/>
<polygon points="400.3,266.3 409.7,269.0 414.3,264.2 405.0,261.5" fill="rgb(201,201,201)"/>
<polygon points="381.8,261.0 409.7,269.0 423.2,254.8 396.0,247.3" fill="none" stroke="#262626" stroke-width="0.7" stroke-linejoin="round" shape-rendering="geometricPrecision"/>
<polygon points="485.9,278.3 495.4,281.8 498.8,277.4 489.2,274.9" fill="rgb(195,195,195)"/>
<polygon points="495.4,281.8 505.0,285.3 508.4,280.0 498.8,277.4" fill="rgb(198,198,198)"/>
<polygon points="505.0,285.3 514.7,288.8 518.2,282.6 508.4,280.0" fill="rgb(200,200,200)"/>
<polygon points="482.4,281.9 491.9,286.3 495.4,281.8 485.9,278.3" fill="rgb(198,198,198)"/>
<polygon points="491.9,286.3 501.5,290.7 505.0,285.3 495.4,281.8" fill="rgb(200,200,200)"/>
<polygon points="501.5,290.7 511.2,295.1 514.7,288.8 505.0,285.3" fill="rgb(202,202,202)"/>
<polygon points="478.8,285.6 488.4,290.8 491.9,286.3 482.4,281.9" fill="rgb(200,200,200)"/>
<polygon points="488.4,290.8 497.9,296.2 501.5,290.7 491.9,286.3" fill="rgb(202,202,202)"/>
<polygon points="497.9,296.2 507.6,301.6 511.2,295.1 501.5,290.7" fill="rgb(203,203,203)"/>
<polygon points="478.8,285.6 507.6,301.6 518.2,282.6 489.2,274.9" fill="none" stroke="#262626" stroke-width="0.7" stroke-linejoin="round" shape-rendering="geometricPrecision"/>
<polygon points="212.7,255.0 220.7,257.5 227.4,252.9 219.4,250.4" fill="rgb(197,197,197)"/>
<polygon points="220.7,257.5 228.8,260.1 235.4,255.4 227.4,252.9" fill="rgb(197,197,197)"/>
<polygon points="205.8,259.6 213.8,262.2 220.7,257.5 212.7,255.0" fill="rgb(197,197,197)"/>
<polygon points="228.8,260.1 237.0,262.7 243.6,258.0 235.4,255.4" fill="rgb(197,197,197)"/>
<polygon points="213.8,262.2 222.0,264.9 228.8,260.1 220.7,257.5" fill="rgb(197,197,197)"/>
<polygon points="198.7,264.4 206.8,267.1 213.8,262.2 205.8,259.6" fill="rgb(197,197,197)"/>
<polygon points="222.0,264.9 230.3,267.6 237.0,262.7 228.8,260.1" fill="rgb(197,197,197)"/>
<polygon points="206.8,267.1 215.1,269.8 222.0,264.9 213.8,262.2" fill="rgb(197,197,197)"/>
<polygon points="215.1,269.8 223.4,272.5 230.3,267.6 222.0,264.9" fill="rgb(198,198,198)"/>
<polygon points="198.7,264.4 223.4,272.5 243.6,258.0 219.4,250.4" fill="none" stroke="#262626" stroke-width="0.7" stroke-linejoin="round" shape-rendering="geometricPrecision"/>
<polygon points="349.8,261.5 358.7,262.9 363.8,255.9 355.0,253.3" fill="rgb(203,203,203)"/>
<polygon points="358.7,262.9 367.7,264.4 372.8,258.4 363.8,255.9" fill="rgb(203,203,203)"/>
<polygon points="344.6,269.8 353.5,270.1 358.7,262.9 349.8,261.5" fill="rgb(204,204,204)"/>
<polygon points="367.7,264.4 376.9,265.8 381.8,261.0 372.8,258.4" fill="rgb(201,201,201)"/>
<polygon points="353.5,270.1 362.6,270.4 367.7,264.4 358.7,262.9" fill="rgb(203,203,203)"/>
<polygon points="339.3,278.3 348.2,277.4 353.5,270.1 344.6,269.8" fill="rgb(204,204,204)"/>
<polygon points="362.6,270.4 371.8,270.7 376.9,265.8 367.7,264.4" fill="rgb(202,202,202)"/>
<polygon points="348.2,277.4 357.3,276.6 362.6,270.4 353.5,270.1" fill="rgb(204,204,204)"/>
<polygon points="357.3,276.6 366.6,275.7 371.8,270.7 362.6,270.4" fill="rgb(203,203,203)"/>
<polygon points="339.3,278.3 366.6,275.7 381.8,261.0 355.0,253.3" fill="none" stroke="#262626" stroke-width="0.7" stroke-linejoin="round" shape-rendering="geometricPrecision"/>
<polygon points="418.8,259.4 428.2,262.0 432.5,257.3 423.2,254.8" fill="rgb(198,198,198)"/>
<polygon points="428.2,262.0 437.7,264.7 441.9,259.9 432.5,257.3" fill="rgb(198,198,198)"/>
<polygon points="414.3,264.2 423.8,266.8 428.2,262.0 418.8,259.4" fill="rgb(200,200,200)"/>
<polygon points="437.7,264.7 447.3,267.4 451.4,262.5 441.9,259.9" fill="rgb(198,198,198)"/>
<polygon points="423.8,266.8 433.3,269.5 437.7,264.7 428.2,262.0" fill="rgb(201,201,201)"/>
<polygon points="409.7,269.0 419.3,271.8 423.8,266.8 414.3,264.2" fill="rgb(202,202,202)"/>
<polygon points="433.3,269.5 443.0,272.3 447.3,267.4 437.7,264.7" fill="rgb(201,201,201)"/>
<polygon points="419.3,271.8 428.9,274.5 433.3,269.5 423.8,266.8" fill="rgb(203,203,203)"/>
<polygon points="428.9,274.5 438.7,277.3 443.0,272.3 433.3,269.5" fill="rgb(204,204,204)"/>
<polygon points="409.7,269.0 438.7,277.3 451.4,262.5 423.2,254.8" fill="none" stroke="#262626" stroke-width="0.7" stroke-linejoin="round" shape-rendering="geometricPrecision"/>
<polygon points="447.3,267.4 456.3,276.9 460.5,270.2 451.4,262.5" fill="rgb(193,193,193)"/>
<polygon points="456.3,276.9 465.4,286.3 469.7,277.9 460.5,270.2" fill="rgb(194,194,194)"/>
<polygon points="465.4,286.3 474.4,295.8 478.8,285.6 469.7,277.9" fill="rgb(195,195,195)"/>
<polygon points="461.0,295.0 469.9,306.2 474.4,295.8 465.4,286.3" fill="rgb(196,196,196)"/>
<polygon points="452.0,283.7 461.0,295.0 465.4,286.3 456.3,276.9" fill="rgb(196,196,196)"/>
<polygon points="443.0,272.3 452.0,283.7 456.3,276.9 447.3,267.4" fill="rgb(196,196,196)"/>
<polygon points="456.6,303.7 465.4,316.7 469.9,306.2 461.0,295.0" fill="rgb(197,197,197)"/>
<polygon points="447.7,290.6 456.6,303.7 461.0,295.0 452.0,283.7" fill="rgb(198,198,198)"/>
<polygon points="438.7,277.3 447.7,290.6 452.0,283.7 443.0,272.3" fill="rgb(199,199,199)"/>
<polygon points="438.7,277.3 465.4,316.7 478.8,285.6 451.4,262.5" fill="none" stroke="#262626" stroke-width="0.7" stroke-linejoin="round" shape-rendering="geometricPrecision"/>
<polygon points="334.2,293.6 343.1,294.1 348.2,277.4 339.3,278.3" fill="rgb(208,208,208)"/>
<polygon points="329.0,309.0 337.9,310.8 343.1,294.1 334.2,293.6" fill="rgb(209,209,209)"/>
<polygon points="323.9,324.3 332.7,327.4 337.9,310.8 329.0,309.0" fill="rgb(209,209,209)"/>
<polygon points="332.7,327.4 341.7,330.5 346.9,312.6 337.9,310.8" fill="rgb(210,210,210)"/>
<polygon points="337.9,310.8 346.9,312.6 352.1,294.6 343.1,294.1" fill="rgb(210,210,210)"/>
<polygon points="343.1,294.1 352.1,294.6 357.3,276.6 348.2,277.4" fill="rgb(210,210,210)"/>
<polygon points="341.7,330.5 350.9,333.6 356.1,314.4 346.9,312.6" fill="rgb(210,210,210)"/>
<polygon points="346.9,312.6 356.1,314.4 361.3,295.1 352.1,294.6" fill="rgb(210,210,210)"/>
<polygon points="352.1,294.6 361.3,295.1 366.6,275.7 357.3,276.6" fill="rgb(210,210,210)"/>
<polygon points="323.9,324.3 350.9,333.6 366.6,275.7 339.3,278.3" fill="none" stroke="#262626" stroke-width="0.7" stroke-linejoin="round" shape-rendering="geometricPrecision"/>
<polygon points="514.7,288.8 525.9,285.0 529.2,279.2 518.2,282.6" fill="rgb(196,196,196)"/>
<polygon points="511.2,295.1 522.5,291.0 525.9,285.0 514.7,288.8" fill="rgb(196,196,196)"/>
<polygon points="525.9,285.0 537.3,281.2 540.4,275.7 529.2,279.2" fill="rgb(196,196,196)"/>
<polygon points="507.6,301.6 519.0,297.1 522.5,291.0 511.2,295.1" fill="rgb(197,197,197)"/>
<polygon points="522.5,291.0 534.0,286.7 537.3,281.2 525.9,285.0" fill="rgb(195,195,195)"/>
<polygon points="537.3,281.2 549.0,277.2 552.0,272.2 540.4,275.7" fill="rgb(195,195,195)"/>
<polygon points="519.0,297.1 530.7,292.4 534.0,286.7 522.5,291.0" fill="rgb(194,194,194)"/>
<polygon points="534.0,286.7 545.9,282.4 549.0,277.2 537.3,281.2" fill="rgb(194,194,194)"/>
<polygon points="530.7,292.4 542.8,287.7 545.9,282.4 534.0,286.7" fill="rgb(192,192,192)"/>
<polygon points="507.6,301.6 542.8,287.7 552.0,272.2 518.2,282.6" fill="none" stroke="#262626" stroke-width="0.7" stroke-linejoin="round" shape-rendering="geometricPrecision"/>
<polygon points="237.0,262.7 245.4,265.6 251.9,260.9 243.6,258.0" fill="rgb(197,197,197)"/>
<polygon points="245.4,265.6 253.8,268.5 260.3,263.8 251.9,260.9" fill="rgb(197,197,197)"/>
<polygon points="230.3,267.6 238.7,270.4 245.4,265.6 237.0,262.7" fill="rgb(198,198,198)"/>
<polygon points="253.8,268.5 262.4,271.4 268.8,266.7 260.3,263.8" fill="rgb(198,198,198)"/>
<polygon points="238.7,270.4 247.2,273.3 253.8,268.5 245.4,265.6" fill="rgb(198,198,198)"/>
<polygon points="223.4,272.5 231.8,275.3 238.7,270.4 230.3,267.6" fill="rgb(198,198,198)"/>
<polygon points="247.2,273.3 255.8,276.1 262.4,271.4 253.8,268.5" fill="rgb(198,198,198)"/>
<polygon points="231.8,275.3 240.4,278.2 247.2,273.3 238.7,270.4" fill="rgb(198,198,198)"/>
<polygon points="240.4,278.2 249.1,281.0 255.8,276.1 247.2,273.3" fill="rgb(198,198,198)"/>
<polygon points="223.4,272.5 249.1,281.0 268.8,266.7 243.6,258.0" fill="none" stroke="#262626" stroke-width="0.7" stroke-linejoin="round" shape-rendering="geometricPrecision"/>
<polygon points="474.4,295.8 484.2,299.1 488.4,290.8 478.8,285.6" fill="rgb(203,203,203)"/>
<polygon points="484.2,299.1 494.2,302.4 497.9,296.2 488.4,290.8" fill="rgb(202,202,202)"/>
<polygon points="469.9,306.2 480.0,307.5 484.2,299.1 474.4,295.8" fill="rgb(202,202,202)"/>
<polygon points="494.2,302.4 504.2,305.8 507.6,301.6 497.9,296.2" fill="rgb(200,200,200)"/>
<polygon points="480.0,307.5 490.3,308.8 494.2,302.4 484.2,299.1" fill="rgb(201,201,201)"/>
<polygon points="465.4,316.7 475.8,316.1 480.0,307.5 469.9,306.2" fill="rgb(200,200,200)"/>
<polygon points="490.3,308.8 500.8,310.2 504.2,305.8 494.2,302.4" fill="rgb(198,198,198)"/>
<polygon points="475.8,316.1 486.4,315.4 490.3,308.8 480.0,307.5" fill="rgb(198,198,198)"/>
<polygon points="486.4,315.4 497.3,314.7 500.8,310.2 490.3,308.8" fill="rgb(196,196,196)"/>
<polygon points="465.4,316.7 497.3,314.7 507.6,301.6 478.8,285.6" fill="none" stroke="#262626" stroke-width="0.7" stroke-linejoin="round" shape-rendering="geometricPrecision"/>
<polygon points="376.9,265.8 386.1,268.5 391.0,263.7 381.8,261.0" fill="rgb(201,201,201)"/>
<polygon points="386.1,268.5 395.5,271.2 400.3,266.3 391.0,263.7" fill="rgb(202,202,202)"/>
<polygon points="371.8,270.7 381.1,273.5 386.1,268.5 376.9,265.8" fill="rgb(202,202,202)"/>
<polygon points="395.5,271.2 405.0,274.0 409.7,269.0 400.3,266.3" fill="rgb(203,203,203)"/>
<polygon points="381.1,273.5 390.6,276.3 395.5,271.2 386.1,268.5" fill="rgb(203,203,203)"/>
<polygon points="366.6,275.7 376.0,278.6 381.1,273.5 371.8,270.7" fill="rgb(203,203,203)"/>
<polygon points="390.6,276.3 400.2,279.1 405.0,274.0 395.5,271.2" fill="rgb(204,204,204)"/>
<polygon points="376.0,278.6 385.6,281.4 390.6,276.3 381.1,273.5" fill="rgb(204,204,204)"/>
<polygon points="385.6,281.4 395.2,284.3 400.2,279.1 390.6,276.3" fill="rgb(205,205,205)"/>
<polygon points="366.6,275.7 395.2,284.3 409.7,269.0 381.8,261.0" fill="none" stroke="#262626" stroke-width="0.7" stroke-linejoin="round" shape-rendering="geometricPrecision"/>
<polygon points="281.3,294.0 290.7,305.1 297.6,312.2 288.2,297.3" fill="rgb(155,155,155)"/>
<polygon points="271.9,282.7 281.3,294.0 288.2,297.3 278.6,282.1" fill="rgb(157,157,157)"/>
<polygon points="262.4,271.4 271.9,282.7 278.6,282.1 268.8,266.7" fill="rgb(160,160,160)"/>
<polygon points="274.2,290.5 283.4,297.7 290.7,305.1 281.3,294.0" fill="rgb(158,158,158)"/>
<polygon points="265.0,283.3 274.2,290.5 281.3,294.0 271.9,282.7" fill="rgb(159,159,159)"/>
<polygon points="255.8,276.1 265.0,283.3 271.9,282.7 262.4,271.4" fill="rgb(160,160,160)"/>
<polygon points="249.1,281.0 257.9,283.9 265.0,283.3 255.8,276.1" fill="rgb(160,160,160)"/>
<polygon points="257.9,283.9 266.8,286.9 274.2,290.5 265.0,283.3" fill="rgb(161,161,161)"/>
<polygon points="266.8,286.9 275.8,289.9 283.4,297.7 274.2,290.5" fill="rgb(162,162,162)"/>
<polygon points="249.1,281.0 275.8,289.9 297.6,312.2 268.8,266.7" fill="none" stroke="#262626" stroke-width="0.7" stroke-linejoin="round" shape-rendering="geometricPrecision"/>
<polygon points="290.7,305.1 299.6,310.2 306.3,316.2 297.6,312.2" fill="rgb(100,100,100)"/>
<polygon points="299.6,310.2 308.6,315.3 315.0,320.2 306.3,316.2" fill="rgb(100,100,100)"/>
<polygon points="308.6,315.3 317.7,320.5 323.9,324.3 315.0,320.2" fill="rgb(100,100,100)"/>
<polygon points="283.4,297.7 292.6,303.9 299.6,310.2 290.7,305.1" fill="rgb(100,100,100)"/>
<polygon points="292.6,303.9 301.9,310.1 308.6,315.3 299.6,310.2" fill="rgb(100,100,100)"/>
<polygon points="301.9,310.1 311.2,316.4 317.7,320.5 308.6,315.3" fill="rgb(100,100,100)"/>
<polygon points="275.8,289.9 285.3,297.3 292.6,303.9 283.4,297.7" fill="rgb(100,100,100)"/>
<polygon points="285.3,297.3 294.8,304.7 301.9,310.1 292.6,303.9" fill="rgb(100,100,100)"/>
<polygon points="294.8,304.7 304.4,312.2 311.2,316.4 301.9,310.1" fill="rgb(100,100,100)"/>
<polygon points="275.8,289.9 304.4,312.2 323.9,324.3 297.6,312.2" fill="none" stroke="#262626" stroke-width="0.7" stroke-linejoin="round" shape-rendering="geometricPrecision"/>
<polygon points="191.5,269.3 199.7,272.0 206.8,267.1 198.7,264.4" fill="rgb(197,197,197)"/>
<polygon points="199.7,272.0 207.9,274.8 215.1,269.8 206.8,267.1" fill="rgb(198,198,198)"/>
<polygon points="184.1,274.3 192.3,277.1 199.7,272.0 191.5,269.3" fill="rgb(198,198,198)"/>
<polygon points="207.9,274.8 216.3,277.6 223.4,272.5 215.1,269.8" fill="rgb(198,198,198)"/>
<polygon points="192.3,277.1 200.7,279.9 207.9,274.8 199.7,272.0" fill="rgb(198,198,198)"/>
<polygon points="176.5,279.4 184.8,282.3 192.3,277.1 184.1,274.3" fill="rgb(198,198,198)"/>
<polygon points="200.7,279.9 209.1,282.8 216.3,277.6 207.9,274.8" fill="rgb(198,198,198)"/>
<polygon points="184.8,282.3 193.2,285.2 200.7,279.9 192.3,277.1" fill="rgb(198,198,198)"/>
<polygon points="193.2,285.2 201.7,288.2 209.1,282.8 200.7,279.9" fill="rgb(198,198,198)"/>
<polygon points="176.5,279.4 201.7,288.2 223.4,272.5 198.7,264.4" fill="none" stroke="#262626" stroke-width="0.7" stroke-linejoin="round" shape-rendering="geometricPrecision"/>
<polygon points="405.0,274.0 414.5,279.4 419.3,271.8 409.7,269.0" fill="rgb(205,205,205)"/>
<polygon points="414.5,279.4 424.0,284.9 428.9,274.5 419.3,271.8" fill="rgb(206,206,206)"/>
<polygon points="424.0,284.9 433.7,290.4 438.7,277.3 428.9,274.5" fill="rgb(205,205,205)"/>
<polygon points="400.2,279.1 409.6,287.2 414.5,279.4 405.0,274.0" fill="rgb(209,209,209)"/>
<polygon points="409.6,287.2 419.1,295.4 424.0,284.9 414.5,279.4" fill="rgb(208,208,208)"/>
<polygon points="419.1,295.4 428.6,303.5 433.7,290.4 424.0,284.9" fill="rgb(207,207,207)"/>
<polygon points="414.1,306.0 423.5,316.8 428.6,303.5 419.1,295.4" fill="rgb(208,208,208)"/>
<polygon points="404.7,295.2 414.1,306.0 419.1,295.4 409.6,287.2" fill="rgb(210,210,210)"/>
<polygon points="395.2,284.3 404.7,295.2 409.6,287.2 400.2,279.1" fill="rgb(211,211,211)"/>
<polygon points="395.2,284.3 423.5,316.8 438.7,277.3 409.7,269.0" fill="none" stroke="#262626" stroke-width="0.7" stroke-linejoin="round" shape-rendering="geometricPrecision"/>
<polygon points="350.9,333.6 360.1,336.8 365.4,317.5 356.1,314.4" fill="rgb(210,210,210)"/>
<polygon points="356.1,314.4 365.4,317.5 370.7,298.1 361.3,295.1" fill="rgb(210,210,210)"/>
<polygon points="361.3,295.1 370.7,298.1 376.0,278.6 366.6,275.7" fill="rgb(210,210,210)"/>
<polygon points="360.1,336.8 369.4,340.0 374.8,320.6 365.4,317.5" fill="rgb(211,211,211)"/>
<polygon points="365.4,317.5 374.8,320.6 380.2,301.1 370.7,298.1" fill="rgb(211,211,211)"/>
<polygon points="370.7,298.1 380.2,301.1 385.6,281.4 376.0,278.6" fill="rgb(212,212,212)"/>
<polygon points="369.4,340.0 378.9,343.3 384.3,323.7 374.8,320.6" fill="rgb(211,211,211)"/>
<polygon points="374.8,320.6 384.3,323.7 389.8,304.1 380.2,301.1" fill="rgb(212,212,212)"/>
<polygon points="380.2,301.1 389.8,304.1 395.2,284.3 385.6,281.4" fill="rgb(212,212,212)"/>
<polygon points="350.9,333.6 378.9,343.3 395.2,284.3 366.6,275.7" fill="none" stroke="#262626" stroke-width="0.7" stroke-linejoin="round" shape-rendering="geometricPrecision"/>
<polygon points="452.0,313.1 461.1,324.4 465.4,316.7 456.6,303.7" fill="rgb(198,198,198)"/>
<polygon points="442.9,301.8 452.0,313.1 456.6,303.7 447.7,290.6" fill="rgb(200,200,200)"/>
<polygon points="433.7,290.4 442.9,301.8 447.7,290.6 438.7,277.3" fill="rgb(201,201,201)"/>
<polygon points="447.4,322.6 456.7,332.1 461.1,324.4 452.0,313.1" fill="rgb(199,199,199)"/>
<polygon points="438.0,313.1 447.4,322.6 452.0,313.1 442.9,301.8" fill="rgb(202,202,202)"/>
<polygon points="428.6,303.5 438.0,313.1 442.9,301.8 433.7,290.4" fill="rgb(204,204,204)"/>
<polygon points="423.5,316.8 433.0,324.5 438.0,313.1 428.6,303.5" fill="rgb(206,206,206)"/>
<polygon points="433.0,324.5 442.7,332.2 447.4,322.6 438.0,313.1" fill="rgb(203,203,203)"/>
<polygon points="442.7,332.2 452.3,340.0 456.7,332.1 447.4,322.6" fill="rgb(201,201,201)"/>
<polygon points="423.5,316.8 452.3,340.0 465.4,316.7 438.7,277.3" fill="none" stroke="#262626" stroke-width="0.7" stroke-linejoin="round" shape-rendering="geometricPrecision"/>
<polygon points="317.7,320.5 326.8,324.4 332.7,327.4 323.9,324.3" fill="rgb(131,131,131)"/>
<polygon points="326.8,324.4 336.0,328.5 341.7,330.5 332.7,327.4" fill="rgb(133,133,133)"/>
<polygon points="336.0,328.5 345.2,332.5 350.9,333.6 341.7,330.5" fill="rgb(135,135,135)"/>
<polygon points="311.2,316.4 320.5,321.4 326.8,324.4 317.7,320.5" fill="rgb(146,146,146)"/>
<polygon points="320.5,321.4 329.9,326.4 336.0,328.5 326.8,324.4" fill="rgb(146,146,146)"/>
<polygon points="329.9,326.4 339.4,331.4 345.2,332.5 336.0,328.5" fill="rgb(145,145,145)"/>
<polygon points="304.4,312.2 314.0,318.2 320.5,321.4 311.2,316.4" fill="rgb(155,155,155)"/>
<polygon points="314.0,318.2 323.6,324.2 329.9,326.4 320.5,321.4" fill="rgb(153,153,153)"/>
<polygon points="323.6,324.2 333.3,330.3 339.4,331.4 329.9,326.4" fill="rgb(151,151,151)"/>
<polygon points="304.4,312.2 333.3,330.3 350.9,333.6 323.9,324.3" fill="none" stroke="#262626" stroke-width="0.7" stroke-linejoin="round" shape-rendering="geometricPrecision"/>
<polygon points="378.9,343.3 388.5,345.7 393.9,328.9 384.3,323.7" fill="rgb(211,211,211)"/>
<polygon points="384.3,323.7 393.9,328.9 399.3,312.0 389.8,304.1" fill="rgb(211,211,211)"/>
<polygon points="408.9,320.0 418.5,328.0 423.5,316.8 414.1,306.0" fill="rgb(209,209,209)"/>
<polygon points="399.3,312.0 408.9,320.0 414.1,306.0 404.7,295.2" fill="rgb(211,211,211)"/>
<polygon points="389.8,304.1 399.3,312.0 404.7,295.2 395.2,284.3" fill="rgb(211,211,211)"/>
<polygon points="393.9,328.9 403.6,334.1 408.9,320.0 399.3,312.0" fill="rgb(211,211,211)"/>
<polygon points="388.5,345.7 398.3,348.3 403.6,334.1 393.9,328.9" fill="rgb(211,211,211)"/>
<polygon points="403.6,334.1 413.4,339.3 418.5,328.0 408.9,320.0" fill="rgb(210,210,210)"/>
<polygon points="398.3,348.3 408.2,350.8 413.4,339.3 403.6,334.1" fill="rgb(211,211,211)"/>
<polygon points="378.9,343.3 408.2,350.8 423.5,316.8 395.2,284.3" fill="none" stroke="#262626" stroke-width="0.7" stroke-linejoin="round" shape-rendering="geometricPrecision"/>
<polygon points="504.2,305.8 515.7,301.7 519.0,297.1 507.6,301.6" fill="rgb(196,196,196)"/>
<polygon points="500.8,310.2 512.3,306.5 515.7,301.7 504.2,305.8" fill="rgb(195,195,195)"/>
<polygon points="515.7,301.7 527.5,297.5 530.7,292.4 519.0,297.1" fill="rgb(193,193,193)"/>
<polygon points="497.3,314.7 508.8,311.3 512.3,306.5 500.8,310.2" fill="rgb(193,193,193)"/>
<polygon points="512.3,306.5 524.1,302.6 527.5,297.5 515.7,301.7" fill="rgb(192,192,192)"/>
<polygon points="527.5,297.5 539.6,293.1 542.8,287.7 530.7,292.4" fill="rgb(190,190,190)"/>
<polygon points="508.8,311.3 520.7,307.9 524.1,302.6 512.3,306.5" fill="rgb(191,191,191)"/>
<polygon points="524.1,302.6 536.3,298.6 539.6,293.1 527.5,297.5" fill="rgb(189,189,189)"/>
<polygon points="520.7,307.9 532.9,304.4 536.3,298.6 524.1,302.6" fill="rgb(188,188,188)"/>
<polygon points="497.3,314.7 532.9,304.4 542.8,287.7 507.6,301.6" fill="none" stroke="#262626" stroke-width="0.7" stroke-linejoin="round" shape-rendering="geometricPrecision"/>
<polygon points="216.3,277.6 224.8,280.5 231.8,275.3 223.4,272.5" fill="rgb(198,198,198)"/>
<polygon points="224.8,280.5 233.5,283.4 240.4,278.2 231.8,275.3" fill="rgb(198,198,198)"/>
<polygon points="209.1,282.8 217.7,285.8 224.8,280.5 216.3,277.6" fill="rgb(198,198,198)"/>
<polygon points="233.5,283.4 242.2,286.3 249.1,281.0 240.4,278.2" fill="rgb(198,198,198)"/>
<polygon points="217.7,285.8 226.3,288.7 233.5,283.4 224.8,280.5" fill="rgb(199,199,199)"/>
<polygon points="201.7,288.2 210.3,291.2 217.7,285.8 209.1,282.8" fill="rgb(199,199,199)"/>
<polygon points="226.3,288.7 235.1,291.8 242.2,286.3 233.5,283.4" fill="rgb(199,199,199)"/>
<polygon points="210.3,291.2 219.0,294.2 226.3,288.7 217.7,285.8" fill="rgb(199,199,199)"/>
<polygon points="219.0,294.2 227.9,297.3 235.1,291.8 226.3,288.7" fill="rgb(199,199,199)"/>
<polygon points="201.7,288.2 227.9,297.3 249.1,281.0 223.4,272.5" fill="none" stroke="#262626" stroke-width="0.7" stroke-linejoin="round" shape-rendering="geometricPrecision"/>
<polygon points="461.1,324.4 471.8,321.8 475.8,316.1 465.4,316.7" fill="rgb(197,197,197)"/>
<polygon points="456.7,332.1 467.7,327.6 471.8,321.8 461.1,324.4" fill="rgb(192,192,192)"/>
<polygon points="471.8,321.8 482.8,319.1 486.4,315.4 475.8,316.1" fill="rgb(195,195,195)"/>
<polygon points="452.3,340.0 463.5,333.6 467.7,327.6 456.7,332.1" fill="rgb(185,185,185)"/>
<polygon points="482.8,319.1 494.1,316.4 497.3,314.7 486.4,315.4" fill="rgb(193,193,193)"/>
<polygon points="467.7,327.6 479.1,323.0 482.8,319.1 471.8,321.8" fill="rgb(190,190,190)"/>
<polygon points="463.5,333.6 475.2,327.0 479.1,323.0 467.7,327.6" fill="rgb(185,185,185)"/>
<polygon points="479.1,323.0 490.8,318.2 494.1,316.4 482.8,319.1" fill="rgb(189,189,189)"/>
<polygon points="475.2,327.0 487.3,320.1 490.8,318.2 479.1,323.0" fill="rgb(184,184,184)"/>
<polygon points="452.3,340.0 487.3,320.1 497.3,314.7 465.4,316.7" fill="none" stroke="#262626" stroke-width="0.7" stroke-linejoin="round" shape-rendering="geometricPrecision"/>
<polygon points="345.2,332.5 354.6,335.2 360.1,336.8 350.9,333.6" fill="rgb(100,100,100)"/>
<polygon points="354.6,335.2 364.1,337.9 369.4,340.0 360.1,336.8" fill="rgb(100,100,100)"/>
<polygon points="364.1,337.9 373.8,340.7 378.9,343.3 369.4,340.0" fill="rgb(100,100,100)"/>
<polygon points="339.4,331.4 348.9,333.6 354.6,335.2 345.2,332.5" fill="rgb(100,100,100)"/>
<polygon points="348.9,333.6 358.6,335.8 364.1,337.9 354.6,335.2" fill="rgb(100,100,100)"/>
<polygon points="358.6,335.8 368.4,338.0 373.8,340.7 364.1,337.9" fill="rgb(100,100,100)"/>
<polygon points="333.3,330.3 343.0,331.9 348.9,333.6 339.4,331.4" fill="rgb(100,100,100)"/>
<polygon points="343.0,331.9 352.8,333.6 358.6,335.8 348.9,333.6" fill="rgb(100,100,100)"/>
<polygon points="352.8,333.6 362.8,335.2 368.4,338.0 358.6,335.8" fill="rgb(100,100,100)"/>
<polygon points="333.3,330.3 362.8,335.2 378.9,343.3 350.9,333.6" fill="none" stroke="#262626" stroke-width="0.7" stroke-linejoin="round" shape-rendering="geometricPrecision"/>
<polygon points="418.5,328.0 428.4,331.4 433.0,324.5 423.5,316.8" fill="rgb(188,188,188)"/>
<polygon points="428.4,331.4 438.5,334.9 442.7,332.2 433.0,324.5" fill="rgb(185,185,185)"/>
<polygon points="438.5,334.9 448.7,338.4 452.3,340.0 442.7,332.2" fill="rgb(182,182,182)"/>
<polygon points="413.4,339.3 423.6,338.5 428.4,331.4 418.5,328.0" fill="rgb(182,182,182)"/>
<polygon points="408.2,350.8 418.8,345.7 423.6,338.5 413.4,339.3" fill="rgb(175,175,175)"/>
<polygon points="423.6,338.5 434.2,337.6 438.5,334.9 428.4,331.4" fill="rgb(180,180,180)"/>
<polygon points="434.2,337.6 444.9,336.7 448.7,338.4 438.5,334.9" fill="rgb(178,178,178)"/>
<polygon points="418.8,345.7 429.7,340.4 434.2,337.6 423.6,338.5" fill="rgb(174,174,174)"/>
<polygon points="429.7,340.4 441.0,334.9 444.9,336.7 434.2,337.6" fill="rgb(174,174,174)"/>
<polygon points="408.2,350.8 441.0,334.9 452.3,340.0 423.5,316.8" fill="none" stroke="#262626" stroke-width="0.7" stroke-linejoin="round" shape-rendering="geometricPrecision"/>
<polygon points="242.2,286.3 251.0,289.3 257.9,283.9 249.1,281.0" fill="rgb(198,198,198)"/>
<polygon points="251.0,289.3 260.0,292.3 266.8,286.9 257.9,283.9" fill="rgb(197,197,197)"/>
<polygon points="235.1,291.8 244.0,294.8 251.0,289.3 242.2,286.3" fill="rgb(198,198,198)"/>
<polygon points="260.0,292.3 269.1,295.4 275.8,289.9 266.8,286.9" fill="rgb(196,196,196)"/>
<polygon points="244.0,294.8 253.1,297.9 260.0,292.3 251.0,289.3" fill="rgb(197,197,197)"/>
<polygon points="227.9,297.3 236.9,300.4 244.0,294.8 235.1,291.8" fill="rgb(199,199,199)"/>
<polygon points="253.1,297.9 262.2,301.0 269.1,295.4 260.0,292.3" fill="rgb(196,196,196)"/>
<polygon points="236.9,300.4 246.0,303.6 253.1,297.9 244.0,294.8" fill="rgb(198,198,198)"/>
<polygon points="246.0,303.6 255.2,306.8 262.2,301.0 253.1,297.9" fill="rgb(196,196,196)"/>
<polygon points="227.9,297.3 255.2,306.8 275.8,289.9 249.1,281.0" fill="none" stroke="#262626" stroke-width="0.7" stroke-linejoin="round" shape-rendering="geometricPrecision"/>
<polygon points="373.8,340.7 383.6,341.9 388.5,345.7 378.9,343.3" fill="rgb(100,100,100)"/>
<polygon points="383.6,341.9 393.6,343.1 398.3,348.3 388.5,345.7" fill="rgb(100,100,100)"/>
<polygon points="393.6,343.1 403.8,344.3 408.2,350.8 398.3,348.3" fill="rgb(100,100,100)"/>
<polygon points="368.4,338.0 378.4,337.8 383.6,341.9 373.8,340.7" fill="rgb(100,100,100)"/>
<polygon points="378.4,337.8 388.7,337.6 393.6,343.1 383.6,341.9" fill="rgb(100,100,100)"/>
<polygon points="388.7,337.6 399.2,337.4 403.8,344.3 393.6,343.1" fill="rgb(100,100,100)"/>
<polygon points="362.8,335.2 373.0,333.6 378.4,337.8 368.4,338.0" fill="rgb(100,100,100)"/>
<polygon points="373.0,333.6 383.5,331.9 388.7,337.6 378.4,337.8" fill="rgb(100,100,100)"/>
<polygon points="383.5,331.9 394.3,330.1 399.2,337.4 388.7,337.6" fill="rgb(100,100,100)"/>
<polygon points="362.8,335.2 394.3,330.1 408.2,350.8 378.9,343.3" fill="none" stroke="#262626" stroke-width="0.7" stroke-linejoin="round" shape-rendering="geometricPrecision"/>
<polygon points="269.1,295.4 278.6,301.4 285.3,297.3 275.8,289.9" fill="rgb(178,178,178)"/>
<polygon points="278.6,301.4 288.1,307.5 294.8,304.7 285.3,297.3" fill="rgb(173,173,173)"/>
<polygon points="288.1,307.5 297.8,313.6 304.4,312.2 294.8,304.7" fill="rgb(167,167,167)"/>
<polygon points="262.2,301.0 271.7,305.7 278.6,301.4 269.1,295.4" fill="rgb(185,185,185)"/>
<polygon points="271.7,305.7 281.2,310.4 288.1,307.5 278.6,301.4" fill="rgb(180,180,180)"/>
<polygon points="281.2,310.4 290.9,315.2 297.8,313.6 288.1,307.5" fill="rgb(174,174,174)"/>
<polygon points="255.2,306.8 264.6,310.1 271.7,305.7 262.2,301.0" fill="rgb(191,191,191)"/>
<polygon points="264.6,310.1 274.1,313.4 281.2,310.4 271.7,305.7" fill="rgb(186,186,186)"/>
<polygon points="274.1,313.4 283.7,316.8 290.9,315.2 281.2,310.4" fill="rgb(181,181,181)"/>
<polygon points="255.2,306.8 283.7,316.8 304.4,312.2 275.8,289.9" fill="none" stroke="#262626" stroke-width="0.7" stroke-linejoin="round" shape-rendering="geometricPrecision"/>
<polygon points="494.1,316.4 505.6,314.4 508.8,311.3 497.3,314.7" fill="rgb(191,191,191)"/>
<polygon points="505.6,314.4 517.3,312.3 520.7,307.9 508.8,311.3" fill="rgb(189,189,189)"/>
<polygon points="490.8,318.2 502.2,317.6 505.6,314.4 494.1,316.4" fill="rgb(188,188,188)"/>
<polygon points="517.3,312.3 529.4,310.2 532.9,304.4 520.7,307.9" fill="rgb(187,187,187)"/>
<polygon points="502.2,317.6 513.9,316.9 517.3,312.3 505.6,314.4" fill="rgb(188,188,188)"/>
<polygon points="487.3,320.1 498.7,320.9 502.2,317.6 490.8,318.2" fill="rgb(185,185,185)"/>
<polygon points="513.9,316.9 525.8,316.2 529.4,310.2 517.3,312.3" fill="rgb(188,188,188)"/>
<polygon points="498.7,320.9 510.3,321.6 513.9,316.9 502.2,317.6" fill="rgb(187,187,187)"/>
<polygon points="510.3,321.6 522.1,322.4 525.8,316.2 513.9,316.9" fill="rgb(189,189,189)"/>
<polygon points="487.3,320.1 522.1,322.4 532.9,304.4 497.3,314.7" fill="none" stroke="#262626" stroke-width="0.7" stroke-linejoin="round" shape-rendering="geometricPrecision"/>
<polygon points="448.7,338.4 459.9,333.6 463.5,333.6 452.3,340.0" fill="rgb(100,100,100)"/>
<polygon points="459.9,333.6 471.5,328.7 475.2,327.0 463.5,333.6" fill="rgb(100,100,100)"/>
<polygon points="444.9,336.7 456.2,333.6 459.9,333.6 448.7,338.4" fill="rgb(100,100,100)"/>
<polygon points="471.5,328.7 483.6,323.6 487.3,320.1 475.2,327.0" fill="rgb(100,100,100)"/>
<polygon points="456.2,333.6 467.7,330.5 471.5,328.7 459.9,333.6" fill="rgb(100,100,100)"/>
<polygon points="441.0,334.9 452.2,333.6 456.2,333.6 444.9,336.7" fill="rgb(100,100,100)"/>
<polygon points="467.7,330.5 479.7,327.3 483.6,323.6 471.5,328.7" fill="rgb(100,100,100)"/>
<polygon points="452.2,333.6 463.8,332.3 467.7,330.5 456.2,333.6" fill="rgb(100,100,100)"/>
<polygon points="463.8,332.3 475.6,331.0 479.7,327.3 467.7,330.5" fill="rgb(100,100,100)"/>
<polygon points="441.0,334.9 475.6,331.0 487.3,320.1 452.3,340.0" fill="none" stroke="#262626" stroke-width="0.7" stroke-linejoin="round" shape-rendering="geometricPrecision"/>
<polygon points="297.8,313.6 307.4,318.8 314.0,318.2 304.4,312.2" fill="rgb(163,163,163)"/>
<polygon points="307.4,318.8 317.1,324.0 323.6,324.2 314.0,318.2" fill="rgb(160,160,160)"/>
<polygon points="317.1,324.0 327.0,329.3 333.3,330.3 323.6,324.2" fill="rgb(156,156,156)"/>
<polygon points="290.9,315.2 300.6,319.5 307.4,318.8 297.8,313.6" fill="rgb(169,169,169)"/>
<polygon points="300.6,319.5 310.4,323.8 317.1,324.0 307.4,318.8" fill="rgb(165,165,165)"/>
<polygon points="310.4,323.8 320.3,328.2 327.0,329.3 317.1,324.0" fill="rgb(161,161,161)"/>
<polygon points="283.7,316.8 293.5,320.2 300.6,319.5 290.9,315.2" fill="rgb(175,175,175)"/>
<polygon points="293.5,320.2 303.4,323.6 310.4,323.8 300.6,319.5" fill="rgb(170,170,170)"/>
<polygon points="303.4,323.6 313.4,327.1 320.3,328.2 310.4,323.8" fill="rgb(165,165,165)"/>
<polygon points="283.7,316.8 313.4,327.1 333.3,330.3 304.4,312.2" fill="none" stroke="#262626" stroke-width="0.7" stroke-linejoin="round" shape-rendering="geometricPrecision"/>
<polygon points="403.8,344.3 414.4,341.8 418.8,345.7 408.2,350.8" fill="rgb(100,100,100)"/>
<polygon points="414.4,341.8 425.4,339.2 429.7,340.4 418.8,345.7" fill="rgb(100,100,100)"/>
<polygon points="399.2,337.4 409.9,337.7 414.4,341.8 403.8,344.3" fill="rgb(100,100,100)"/>
<polygon points="425.4,339.2 436.6,336.5 441.0,334.9 429.7,340.4" fill="rgb(100,100,100)"/>
<polygon points="409.9,337.7 420.8,337.9 425.4,339.2 414.4,341.8" fill="rgb(100,100,100)"/>
<polygon points="420.8,337.9 432.0,338.2 436.6,336.5 425.4,339.2" fill="rgb(100,100,100)"/>
<polygon points="394.3,330.1 405.1,333.4 409.9,337.7 399.2,337.4" fill="rgb(100,100,100)"/>
<polygon points="405.1,333.4 416.1,336.6 420.8,337.9 409.9,337.7" fill="rgb(100,100,100)"/>
<polygon points="416.1,336.6 427.3,340.0 432.0,338.2 420.8,337.9" fill="rgb(100,100,100)"/>
<polygon points="394.3,330.1 427.3,340.0 441.0,334.9 408.2,350.8" fill="none" stroke="#262626" stroke-width="0.7" stroke-linejoin="round" shape-rendering="geometricPrecision"/>
<polygon points="327.0,329.3 336.8,331.5 343.0,331.9 333.3,330.3" fill="rgb(154,154,154)"/>
<polygon points="336.8,331.5 346.8,333.8 352.8,333.6 343.0,331.9" fill="rgb(154,154,154)"/>
<polygon points="346.8,333.8 356.9,336.1 362.8,335.2 352.8,333.6" fill="rgb(154,154,154)"/>
<polygon points="320.3,328.2 330.3,331.1 336.8,331.5 327.0,329.3" fill="rgb(159,159,159)"/>
<polygon points="330.3,331.1 340.5,334.0 346.8,333.8 336.8,331.5" fill="rgb(160,160,160)"/>
<polygon points="340.5,334.0 350.8,337.0 356.9,336.1 346.8,333.8" fill="rgb(162,162,162)"/>
<polygon points="313.4,327.1 323.6,330.7 330.3,331.1 320.3,328.2" fill="rgb(163,163,163)"/>
<polygon points="323.6,330.7 334.0,334.3 340.5,334.0 330.3,331.1" fill="rgb(165,165,165)"/>
<polygon points="334.0,334.3 344.5,338.0 350.8,337.0 340.5,334.0" fill="rgb(168,168,168)"/>
<polygon points="313.4,327.1 344.5,338.0 362.8,335.2 333.3,330.3" fill="none" stroke="#262626" stroke-width="0.7" stroke-linejoin="round" shape-rendering="geometricPrecision"/>
<polygon points="483.6,323.6 494.9,325.3 498.7,320.9 487.3,320.1" fill="rgb(185,185,185)"/>
<polygon points="494.9,325.3 506.6,327.0 510.3,321.6 498.7,320.9" fill="rgb(188,188,188)"/>
<polygon points="479.7,327.3 491.1,329.9 494.9,325.3 483.6,323.6" fill="rgb(187,187,187)"/>
<polygon points="506.6,327.0 518.4,328.8 522.1,322.4 510.3,321.6" fill="rgb(190,190,190)"/>
<polygon points="491.1,329.9 502.7,332.6 506.6,327.0 494.9,325.3" fill="rgb(191,191,191)"/>
<polygon points="475.6,331.0 487.1,334.6 491.1,329.9 479.7,327.3" fill="rgb(190,190,190)"/>
<polygon points="502.7,332.6 514.5,335.3 518.4,328.8 506.6,327.0" fill="rgb(193,193,193)"/>
<polygon points="487.1,334.6 498.7,338.3 502.7,332.6 491.1,329.9" fill="rgb(193,193,193)"/>
<polygon points="498.7,338.3 510.5,342.0 514.5,335.3 502.7,332.6" fill="rgb(196,196,196)"/>
<polygon points="475.6,331.0 510.5,342.0 522.1,322.4 487.3,320.1" fill="none" stroke="#262626" stroke-width="0.7" stroke-linejoin="round" shape-rendering="geometricPrecision"/>
<polygon points="356.9,336.1 367.3,336.2 373.0,333.6 362.8,335.2" fill="rgb(158,158,158)"/>
<polygon points="367.3,336.2 377.8,336.3 383.5,331.9 373.0,333.6" fill="rgb(164,164,164)"/>
<polygon points="350.8,337.0 361.3,338.9 367.3,336.2 356.9,336.1" fill="rgb(166,166,166)"/>
<polygon points="377.8,336.3 388.7,336.3 394.3,330.1 383.5,331.9" fill="rgb(170,170,170)"/>
<polygon points="361.3,338.9 372.0,340.8 377.8,336.3 367.3,336.2" fill="rgb(174,174,174)"/>
<polygon points="344.5,338.0 355.1,341.7 361.3,338.9 350.8,337.0" fill="rgb(173,173,173)"/>
<polygon points="372.0,340.8 382.9,342.7 388.7,336.3 377.8,336.3" fill="rgb(180,180,180)"/>
<polygon points="355.1,341.7 366.0,345.5 372.0,340.8 361.3,338.9" fill="rgb(181,181,181)"/>
<polygon points="366.0,345.5 377.0,349.3 382.9,342.7 372.0,340.8" fill="rgb(188,188,188)"/>
<polygon points="344.5,338.0 377.0,349.3 394.3,330.1 362.8,335.2" fill="none" stroke="#262626" stroke-width="0.7" stroke-linejoin="round" shape-rendering="geometricPrecision"/>
<polygon points="436.6,336.5 447.9,336.9 452.2,333.6 441.0,334.9" fill="rgb(178,178,178)"/>
<polygon points="447.9,336.9 459.4,337.2 463.8,332.3 452.2,333.6" fill="rgb(184,184,184)"/>
<polygon points="432.0,338.2 443.3,340.2 447.9,336.9 436.6,336.5" fill="rgb(183,183,183)"/>
<polygon points="459.4,337.2 471.1,337.6 475.6,331.0 463.8,332.3" fill="rgb(188,188,188)"/>
<polygon points="443.3,340.2 454.8,342.3 459.4,337.2 447.9,336.9" fill="rgb(188,188,188)"/>
<polygon points="427.3,340.0 438.6,343.7 443.3,340.2 432.0,338.2" fill="rgb(188,188,188)"/>
<polygon points="454.8,342.3 466.5,344.4 471.1,337.6 459.4,337.2" fill="rgb(193,193,193)"/>
<polygon points="438.6,343.7 450.1,347.5 454.8,342.3 443.3,340.2" fill="rgb(192,192,192)"/>
<polygon points="450.1,347.5 461.7,351.4 466.5,344.4 454.8,342.3" fill="rgb(196,196,196)"/>
<polygon points="427.3,340.0 461.7,351.4 475.6,331.0 441.0,334.9" fill="none" stroke="#262626" stroke-width="0.7" stroke-linejoin="round" shape-rendering="geometricPrecision"/>
<polygon points="388.7,336.3 399.6,339.8 405.1,333.4 394.3,330.1" fill="rgb(194,194,194)"/>
<polygon points="399.6,339.8 410.7,343.3 416.1,336.6 405.1,333.4" fill="rgb(196,196,196)"/>
<polygon points="382.9,342.7 393.9,346.4 399.6,339.8 388.7,336.3" fill="rgb(195,195,195)"/>
<polygon points="410.7,343.3 422.0,346.8 427.3,340.0 416.1,336.6" fill="rgb(198,198,198)"/>
<polygon points="393.9,346.4 405.2,350.1 410.7,343.3 399.6,339.8" fill="rgb(197,197,197)"/>
<polygon points="377.0,349.3 388.1,353.2 393.9,346.4 382.9,342.7" fill="rgb(195,195,195)"/>
<polygon points="405.2,350.1 416.6,353.9 422.0,346.8 410.7,343.3" fill="rgb(199,199,199)"/>
<polygon points="388.1,353.2 399.5,357.1 405.2,350.1 393.9,346.4" fill="rgb(198,198,198)"/>
<polygon points="399.5,357.1 411.0,361.1 416.6,353.9 405.2,350.1" fill="rgb(200,200,200)"/>
<polygon points="377.0,349.3 411.0,361.1 427.3,340.0 394.3,330.1" fill="none" stroke="#262626" stroke-width="0.7" stroke-linejoin="round" shape-rendering="geometricPrecision"/>
<polygon points="471.1,337.6 482.7,341.3 487.1,334.6 475.6,331.0" fill="rgb(196,196,196)"/>
<polygon points="482.7,341.3 494.5,345.1 498.7,338.3 487.1,334.6" fill="rgb(197,197,197)"/>
<polygon points="466.5,344.4 478.2,348.2 482.7,341.3 471.1,337.6" fill="rgb(198,198,198)"/>
<polygon points="494.5,345.1 506.4,348.9 510.5,342.0 498.7,338.3" fill="rgb(198,198,198)"/>
<polygon points="478.2,348.2 490.1,352.1 494.5,345.1 482.7,341.3" fill="rgb(199,199,199)"/>
<polygon points="461.7,351.4 473.6,355.3 478.2,348.2 466.5,344.4" fill="rgb(199,199,199)"/>
<polygon points="490.1,352.1 502.2,356.0 506.4,348.9 494.5,345.1" fill="rgb(200,200,200)"/>
<polygon points="473.6,355.3 485.6,359.3 490.1,352.1 478.2,348.2" fill="rgb(200,200,200)"/>
<polygon points="485.6,359.3 497.8,363.3 502.2,356.0 490.1,352.1" fill="rgb(201,201,201)"/>
<polygon points="461.7,351.4 497.8,363.3 510.5,342.0 475.6,331.0" fill="none" stroke="#262626" stroke-width="0.7" stroke-linejoin="round" shape-rendering="geometricPrecision"/>
<polygon points="422.0,346.8 433.4,350.7 438.6,343.7 427.3,340.0" fill="rgb(199,199,199)"/>
<polygon points="433.4,350.7 445.0,354.6 450.1,347.5 438.6,343.7" fill="rgb(199,199,199)"/>
<polygon points="416.6,353.9 428.1,357.8 433.4,350.7 422.0,346.8" fill="rgb(200,200,200)"/>
<polygon points="445.0,354.6 456.8,358.6 461.7,351.4 450.1,347.5" fill="rgb(200,200,200)"/>
<polygon points="428.1,357.8 439.9,361.9 445.0,354.6 433.4,350.7" fill="rgb(201,201,201)"/>
<polygon points="411.0,361.1 422.7,365.2 428.1,357.8 416.6,353.9" fill="rgb(202,202,202)"/>
<polygon points="439.9,361.9 451.8,365.9 456.8,358.6 445.0,354.6" fill="rgb(201,201,201)"/>
<polygon points="422.7,365.2 434.5,369.4 439.9,361.9 428.1,357.8" fill="rgb(202,202,202)"/>
<polygon points="434.5,369.4 446.6,373.6 451.8,365.9 439.9,361.9" fill="rgb(202,202,202)"/>
<polygon points="411.0,361.1 446.6,373.6 461.7,351.4 427.3,340.0" fill="none" stroke="#262626" stroke-width="0.7" stroke-linejoin="round" shape-rendering="geometricPrecision"/>
<polygon points="456.8,358.6 468.8,362.6 473.6,355.3 461.7,351.4" fill="rgb(200,200,200)"/>
<polygon points="468.8,362.6 481.0,366.7 485.6,359.3 473.6,355.3" fill="rgb(201,201,201)"/>
<polygon points="451.8,365.9 463.9,370.1 468.8,362.6 456.8,358.6" fill="rgb(202,202,202)"/>
<polygon points="481.0,366.7 493.4,370.8 497.8,363.3 485.6,359.3" fill="rgb(202,202,202)"/>
<polygon points="463.9,370.1 476.2,374.3 481.0,366.7 468.8,362.6" fill="rgb(202,202,202)"/>
<polygon points="446.6,373.6 458.9,377.8 463.9,370.1 451.8,365.9" fill="rgb(203,203,203)"/>
<polygon points="476.2,374.3 488.8,378.6 493.4,370.8 481.0,366.7" fill="rgb(203,203,203)"/>
<polygon points="458.9,377.8 471.3,382.2 476.2,374.3 463.9,370.1" fill="rgb(203,203,203)"/>
<polygon points="471.3,382.2 484.0,386.6 488.8,378.6 476.2,374.3" fill="rgb(203,203,203)"/>
<polygon points="446.6,373.6 484.0,386.6 497.8,363.3 461.7,351.4" fill="none" stroke="#262626" stroke-width="0.7" stroke-linejoin="round" shape-rendering="geometricPrecision"/>
</g>
<defs><linearGradient id="pg1" x1="1" y1="0" x2="0" y2="1"><stop offset="0" stop-color="#000" stop-opacity="0.22"/><stop offset="1" stop-color="#000" stop-opacity="0"/></linearGradient></defs>
<polygon points="356.8,222.5 383.3,226.8 372,234.8 345.5,229.5" fill="url(#pg1)"/>
<polygon points="395.6,216.3 418.2,223.8 405,229.5 383.3,225.3" fill="url(#pg1)"/>
</g>
<rect x="29.00" y="81.00" width="9.50" height="427.50" fill="#000" opacity="0.16"/>
<rect x="706.50" y="81.00" width="10.00" height="427.50" fill="#000" opacity="0.16"/>
<rect x="29" y="81" width="687.5" height="427.5" fill="none" stroke="#6a6a6a" stroke-width="1"/>
<rect x="30.30" y="82.00" width="41.70" height="12.80" fill="#232323" />
<text x="32.1" y="92.1" font-size="9" fill="#ededed" stroke="#ededed" textLength="37.3" lengthAdjust="spacingAndGlyphs" font-weight="bold" >Perspective</text>
<rect x="338.00" y="84.00" width="66.00" height="9.80" fill="#242424" />
<text x="340.3" y="92.3" font-size="9" fill="#ededed" stroke="#ededed" textLength="52.2" lengthAdjust="spacingAndGlyphs" font-weight="bold" >Default Camera</text>
<rect x="30.00" y="218.00" width="36.60" height="11.60" fill="#242424" />
<text x="32.1" y="226.9" font-size="9" fill="#ededed" stroke="#ededed" textLength="18.1" lengthAdjust="spacingAndGlyphs" font-weight="bold" >Move</text>
<path d="M60.4 220 V227.6 M56.9 223.8 H63.9" fill="none" stroke="#bdbdbd" stroke-width="0.9" />
<rect x="633.40" y="495.50" width="82.60" height="11.80" fill="#232323" />
<text x="635.0" y="503.9" font-size="8.6" fill="#dcdcdc" stroke="#dcdcdc" textLength="73.3" lengthAdjust="spacingAndGlyphs" font-weight="bold" >Grid Spacing : 500 cm</text>
<rect x="28.20" y="63.30" width="689.20" height="1.00" fill="#1e1e1e" />
<rect x="28.00" y="63.30" width="0.90" height="18.00" fill="#1e1e1e" />
<rect x="32.40" y="69.60" width="10.20" height="1.70" fill="#d4d4d4" />
<rect x="32.40" y="72.60" width="10.20" height="1.70" fill="#d4d4d4" />
<rect x="32.40" y="75.60" width="10.20" height="1.70" fill="#d4d4d4" />
<text x="49.3" y="76.5" font-size="9" fill="#cfcfcf" stroke="#cfcfcf" textLength="15.0" lengthAdjust="spacingAndGlyphs" >View</text>
<text x="74.3" y="76.5" font-size="9" fill="#cfcfcf" stroke="#cfcfcf" textLength="27.7" lengthAdjust="spacingAndGlyphs" >Cameras</text>
<text x="111.8" y="76.5" font-size="9" fill="#cfcfcf" stroke="#cfcfcf" textLength="23.2" lengthAdjust="spacingAndGlyphs" >Display</text>
<text x="145.0" y="76.5" font-size="9" fill="#cfcfcf" stroke="#cfcfcf" textLength="25.8" lengthAdjust="spacingAndGlyphs" >Options</text>
<text x="180.5" y="76.5" font-size="9" fill="#cfcfcf" stroke="#cfcfcf" textLength="15.8" lengthAdjust="spacingAndGlyphs" >Filter</text>
<text x="206.3" y="76.5" font-size="9" fill="#cfcfcf" stroke="#cfcfcf" textLength="17.0" lengthAdjust="spacingAndGlyphs" >Panel</text>
<g clip-path="url(#vpclip)">
<ellipse cx="410" cy="218.5" rx="106" ry="51.5" fill="none" stroke="#8a8a8a" stroke-width="0.8" opacity="0.5"/>
<path d="M344 200 A92 51 0 0 1 515 222" fill="none" stroke="#b4b4b4" stroke-width="0.9" transform="translate(0,0)" opacity="0"/>
<line x1="396.80" y1="141.00" x2="395.60" y2="246.00" stroke="#3fae62" stroke-width="0.9" opacity="0.9"/>
<line x1="386.60" y1="165.00" x2="386.20" y2="209.00" stroke="#43c873" stroke-width="1.1" opacity="0.8"/>
<path d="M386.7 152.4 L390 165.4 H383.4 Z" fill="#3fd877" />
<line x1="405.00" y1="237.80" x2="443.00" y2="246.20" stroke="#3a7be8" stroke-width="1.2" />
<path d="M453.4 249 L442 251 L443.6 243.2 Z" fill="#2f7bf2" />
<line x1="453.40" y1="249.60" x2="520.00" y2="281.00" stroke="#5a80d8" stroke-width="0.8" opacity="0.55"/>
<line x1="376.40" y1="242.20" x2="357.00" y2="259.00" stroke="#e8404a" stroke-width="1.2" />
<path d="M350 264.6 L354.4 256.4 L359.8 262 Z" fill="#f0303c" />
<line x1="372.00" y1="264.00" x2="340.00" y2="303.00" stroke="#e8404a" stroke-width="0.8" stroke-dasharray="3 2" opacity="0.6"/>
<path d="M386 259 C392 262.4 404 261.6 414.6 256.2 L412.6 260 C404 265 392 265.4 386 259 Z" fill="#42d67c" opacity="0.9"/>
<path d="M364.6 222.4 C362.6 213 365 203 371.6 195.6" fill="none" stroke="#4a86ea" stroke-width="1.4" opacity="0.9"/>
<path d="M411.6 190.4 L425.6 195 C427.6 201 428.2 207 427.6 215 M419 192.8 C422.6 196 425.4 200 426.6 205" fill="none" stroke="#ee5560" stroke-width="1" opacity="0.9"/>
</g>
<line x1="693.80" y1="106.80" x2="693.60" y2="94.00" stroke="#35b35a" stroke-width="1.1" />
<line x1="693.80" y1="106.80" x2="688.00" y2="112.00" stroke="#d8404a" stroke-width="1.2" />
<line x1="693.80" y1="106.80" x2="703.40" y2="110.00" stroke="#3a74d8" stroke-width="1.2" />
<text x="693.6" y="92.6" font-size="6.5" fill="#3fd070" stroke="#3fd070" font-weight="bold" text-anchor="middle" >Y</text>
<text x="683.8" y="119.0" font-size="6.5" fill="#e8404a" stroke="#e8404a" font-weight="bold" text-anchor="middle" >X</text>
<text x="708.2" y="114.4" font-size="6.5" fill="#3a7be8" stroke="#3a7be8" font-weight="bold" text-anchor="middle" >Z</text>
<rect x="394.80" y="87.40" width="4.60" height="4.40" fill="none" stroke="#c8c8c8" stroke-width="0.8"/>
<path d="M400 89.6 L402.2 88.2 V91 Z" fill="#c8c8c8" />
<path d="M396 86.4 H398.6" fill="none" stroke="#c8c8c8" stroke-width="0.7" />
<rect x="3.00" y="46.80" width="22.30" height="25.80" fill="#3d3d3d" rx="1.5" />
<circle cx="12.20" cy="57.20" r="4.60" fill="none" stroke="#e0e0e0" stroke-width="1.5" />
<path d="M15.6 60.8 L20.6 66.2" fill="none" stroke="#e0e0e0" stroke-width="1.9" stroke-linecap="round"/>
<rect x="36.00" y="41.00" width="17.00" height="19.60" fill="#3a3a3a" rx="1.5" />
<rect x="38.00" y="44.40" width="13.10" height="2.60" fill="#dcdcdc" />
<path d="M38.8 47.8 H50.2 V57.2 H38.8 Z M40.9 55 H48.5 C49.7 53 48.6 51.5 47.2 51.7 C46.8 49.5 43.6 49.1 42.8 51.3 C41 50.9 39.8 53 40.9 55 Z" fill="#dcdcdc" fill-rule="evenodd"/>
<rect x="61.40" y="41.00" width="72.90" height="19.60" fill="#3a3a3a" rx="1.5" />
<text x="66.9" y="53.0" font-size="10.5" fill="#dedede" stroke="#dedede" textLength="6.5" lengthAdjust="spacingAndGlyphs" >X</text>
<text x="85.7" y="53.0" font-size="10.5" fill="#dedede" stroke="#dedede" textLength="6.4" lengthAdjust="spacingAndGlyphs" >Y</text>
<text x="104.4" y="53.0" font-size="10.5" fill="#dedede" stroke="#dedede" textLength="5.9" lengthAdjust="spacingAndGlyphs" >Z</text>
<rect x="64.00" y="55.90" width="11.70" height="1.80" fill="#c9515c" />
<rect x="83.30" y="55.90" width="10.90" height="1.80" fill="#5cb868" />
<rect x="102.00" y="55.90" width="10.00" height="1.80" fill="#4b80d2" />
<path d="M121.6 44.8 V56.2 H131.6" fill="none" stroke="#d6d6d6" stroke-width="1.5" />
<path d="M128.2 44.2 L131.8 46.2 V50.4 L128.2 52.4 L124.6 50.4 V46.2 Z" fill="none" stroke="#d6d6d6" stroke-width="1" />
<text x="128.2" y="50.3" font-size="5.4" fill="#d6d6d6" stroke="#d6d6d6" text-anchor="middle" >1</text>
<rect x="224.40" y="41.00" width="93.20" height="19.60" fill="#3a3a3a" rx="1.5" />
<rect x="261.30" y="41.00" width="18.30" height="19.60" fill="#5a5eb4" />
<path d="M233.7 44.6 L239.0 47.7 V53.9 L233.7 57.0 L228.4 53.9 V47.7 Z" fill="none" stroke="#d6d6d6" stroke-width="1.2" stroke-linejoin="round"/>
<circle cx="233.90" cy="49.60" r="1.50" fill="#e8e8e8" />
<path d="M252.3 44.6 L257.6 47.7 V53.9 L252.3 57.0 L247.0 53.9 V47.7 Z" fill="none" stroke="#d6d6d6" stroke-width="1.2" stroke-linejoin="round"/>
<rect x="251.50" y="48.60" width="1.80" height="8.20" fill="#e8e8e8" />
<path d="M270.5 44.6 L275.8 47.7 V53.9 L270.5 57.0 L265.2 53.9 V47.7 Z" fill="none" stroke="#cfd1f3" stroke-width="1.2" stroke-linejoin="round"/>
<path d="M270.5 50.2 L275.6 47.6 V53.9 L270.5 56.8 Z" fill="#ffffff" />
<path d="M289 44.4 L294.6 47.4 V54.2 L289 57.3 L283.4 54.2 V47.4 Z" fill="#b9b9b9" stroke="#e0e0e0" stroke-width="0.9" />
<path d="M289 50.4 L294.2 47.8 V54 L289 56.8 Z" fill="#8a8a8a" />
<path d="M289 50.4 L283.8 47.8 V54 L289 56.8 Z" fill="#d0d0d0" />
<path d="M298.0 59.6 L295.4 59.6 L298.0 57.0 Z" fill="#9a9a9a" />
<path d="M308 45 L312.6 47.4 V54 L308 56.6 L303.6 54 V47.4 Z" fill="#8d8d8d" />
<path d="M308 49.8 L303.6 47.4 L308 45 L312.6 47.4 Z" fill="#a8a8a8" />
<path d="M309.6 50.8 L312.4 49.6 L311.4 52.2 L313.2 51.8 L311.2 55.4 L311.6 53.2 L309.6 53.8 Z" fill="#f0f0f0" />
<rect x="326.00" y="41.00" width="35.60" height="19.60" fill="#3a3a3a" rx="1.5" />
<path d="M330.8 45.2 V56 H341.4" fill="none" stroke="#cfcfcf" stroke-width="1.4" />
<circle cx="341.60" cy="56.00" r="1.00" fill="#cfcfcf" />
<rect x="347.20" y="45.40" width="10.60" height="10.60" fill="none" stroke="#9c9c9c" stroke-width="1"/>
<rect x="347.00" y="45.20" width="5.60" height="5.40" fill="#f2f2f2" />
<rect x="377.00" y="41.00" width="35.40" height="19.60" fill="#3a3a3a" rx="1.5" />
<path d="M382.6 48.6 V53.4 A3.3 3.3 0 0 0 389.2 53.4 V48.6" fill="none" stroke="#dadada" stroke-width="1.9" />
<path d="M383.6 46.6 C385 45 387 45 388.4 46.4 M388.6 44.8 V46.8 H386.6" fill="none" stroke="#dadada" stroke-width="0.9" />
<path d="M393.6 59.6 L391.0 59.6 L393.6 57.0 Z" fill="#9a9a9a" />
<path d="M406.20 53.20 L408.20 53.20 M405.00 55.28 L406.00 57.01 M402.60 55.28 L401.60 57.01 M401.40 53.20 L399.40 53.20 M402.60 51.12 L401.60 49.39 M405.00 51.12 L406.00 49.39 " fill="none" stroke="#dadada" stroke-width="1.8" />
<circle cx="403.80" cy="53.20" r="2.60" fill="#dadada" />
<circle cx="403.80" cy="53.20" r="1.30" fill="#3a3a3a" />
<path d="M400.8 46.6 C402.4 45.2 405 45.2 406.6 46.4 M406.8 44.9 V46.9 H404.8" fill="none" stroke="#dadada" stroke-width="0.9" />
<rect x="421.00" y="41.00" width="35.60" height="19.60" fill="#3a3a3a" rx="1.5" />
<rect x="438.80" y="41.00" width="17.80" height="19.60" fill="#5a5eb4" />
<path d="M427 45 V57 M433 45 V57 M424.2 48 H435.8 M424.2 54 H435.8" fill="none" stroke="#dadada" stroke-width="1.4" />
<path d="M444.6 45 V57 M450.8 45 V50 M441.8 48 H453.6 M441.8 54 H447.4" fill="none" stroke="#ececf8" stroke-width="1.4" />
<rect x="448.60" y="52.60" width="5.00" height="4.20" fill="#ececf8" rx="0.6" />
<path d="M449.6 52.8 V51.4 A1.5 1.5 0 0 1 452.6 51.4 V52.8" fill="none" stroke="#ececf8" stroke-width="0.9" />
<path d="M455.6 59.6 L453.0 59.6 L455.6 57.0 Z" fill="#c9cbe8" />
<rect x="464.80" y="41.00" width="35.80" height="19.60" fill="#3a3a3a" rx="1.5" />
<circle cx="474.00" cy="50.90" r="5.90" fill="none" stroke="#d6d6d6" stroke-width="1.1" />
<circle cx="474.00" cy="50.90" r="3.70" fill="none" stroke="#d6d6d6" stroke-width="1" />
<circle cx="474.00" cy="50.90" r="1.50" fill="#e4e4e4" />
<circle cx="492.00" cy="50.90" r="5.90" fill="none" stroke="#d6d6d6" stroke-width="1.1" />
<path d="M493.70 50.90 L495.70 50.90 M492.85 52.37 L493.85 54.10 M491.15 52.37 L490.15 54.10 M490.30 50.90 L488.30 50.90 M491.15 49.43 L490.15 47.70 M492.85 49.43 L493.85 47.70 " fill="none" stroke="#e0e0e0" stroke-width="1.8" />
<circle cx="492.00" cy="50.90" r="1.90" fill="#e0e0e0" />
<circle cx="492.00" cy="50.90" r="1.10" fill="#3a3a3a" />
<rect x="509.00" y="41.00" width="35.60" height="19.60" fill="#3a3a3a" rx="1.5" />
<path d="M517.8 44.6 L523.1 47.7 V53.9 L517.8 57.0 L512.5 53.9 V47.7 Z" fill="#d2d2d2" stroke="#d2d2d2" stroke-width="0.8" stroke-linejoin="round"/>
<path d="M514.6 50.8 C516 48.4 519.6 48.4 521 50.8 C519.6 53.2 516 53.2 514.6 50.8 Z" fill="#5a5a5a" />
<circle cx="517.80" cy="50.80" r="1.00" fill="#d2d2d2" />
<path d="M535.8 44.6 L541.1 47.7 V53.9 L535.8 57.0 L530.5 53.9 V47.7 Z" fill="#d2d2d2" stroke="#d2d2d2" stroke-width="0.8" stroke-linejoin="round"/>
<text x="535.8" y="54.3" font-size="9.5" fill="#3a3a3a" stroke="#3a3a3a" font-weight="bold" text-anchor="middle" >A</text>
<path d="M543.6 59.6 L541.0 59.6 L543.6 57.0 Z" fill="#9a9a9a" />
<rect x="633.80" y="41.00" width="54.40" height="19.60" fill="#3a3a3a" rx="1.5" />
<rect x="636.60" y="47.20" width="12.60" height="9.60" fill="#d4d4d4" />
<path d="M636.6 44.4 H649.2 V47.2 H636.6 Z" fill="#d4d4d4" />
<path d="M639.0 44.3 l1.3 0 l0.7 2.4 l-1.3 0 Z" fill="#3a3a3a" />
<path d="M642.2 44.3 l1.3 0 l0.7 2.4 l-1.3 0 Z" fill="#3a3a3a" />
<path d="M645.4 44.3 l1.3 0 l0.7 2.4 l-1.3 0 Z" fill="#3a3a3a" />
<path d="M651.2 59.6 L648.6 59.6 L651.2 57.0 Z" fill="#9a9a9a" />
<rect x="655.20" y="47.20" width="12.60" height="9.60" fill="#d4d4d4" />
<path d="M655.2 44.4 H667.8 V47.2 H655.2 Z" fill="#d4d4d4" />
<path d="M657.6 44.3 l1.3 0 l0.7 2.4 l-1.3 0 Z" fill="#3a3a3a" />
<path d="M660.8 44.3 l1.3 0 l0.7 2.4 l-1.3 0 Z" fill="#3a3a3a" />
<path d="M664.0 44.3 l1.3 0 l0.7 2.4 l-1.3 0 Z" fill="#3a3a3a" />
<path d="M659.6 49.8 L664.4 52.4 L659.6 55 Z" fill="#3a3a3a" />
<path d="M669.6 59.6 L667.0 59.6 L669.6 57.0 Z" fill="#9a9a9a" />
<rect x="673.90" y="47.20" width="12.60" height="9.60" fill="#d4d4d4" />
<path d="M673.9 44.4 H686.5 V47.2 H673.9 Z" fill="#d4d4d4" />
<path d="M676.3 44.3 l1.3 0 l0.7 2.4 l-1.3 0 Z" fill="#3a3a3a" />
<path d="M679.5 44.3 l1.3 0 l0.7 2.4 l-1.3 0 Z" fill="#3a3a3a" />
<path d="M682.7 44.3 l1.3 0 l0.7 2.4 l-1.3 0 Z" fill="#3a3a3a" />
<path d="M681.50 52.60 L683.50 52.60 M680.85 53.73 L681.85 55.46 M679.55 53.73 L678.55 55.46 M678.90 52.60 L676.90 52.60 M679.55 51.47 L678.55 49.74 M680.85 51.47 L681.85 49.74 " fill="none" stroke="#3a3a3a" stroke-width="1.8" />
<circle cx="680.20" cy="52.60" r="1.50" fill="#3a3a3a" />
<circle cx="680.20" cy="52.60" r="0.90" fill="#d4d4d4" />
<rect x="697.00" y="41.00" width="17.20" height="19.60" fill="#3a3a3a" rx="1.5" />
<circle cx="705.60" cy="49.60" r="4.60" fill="none" stroke="#cfcfcf" stroke-width="1.1" />
<circle cx="704.60" cy="48.60" r="2.20" fill="#5e5e5e" />
<path d="M699.8 52.2 C700.6 58.6 710.6 58.6 711.4 52.2" fill="none" stroke="#cfcfcf" stroke-width="1.2" />
<path d="M666 72 C664.6 70 665.2 69.4 666.6 70.8 V68.8 C667 68 668 68 668.2 68.8 C668.6 67.6 669.8 67.6 670 68.6 C670.6 67.8 671.6 68 671.8 69 C672.6 68.6 673.4 69 673.4 70 V74.4 C673 77.6 668.4 78.4 667 75.4 Z" fill="#a4a4a4" />
<path d="M682.7 67.6 L685.6 71 H683.7 V73.2 H686.6 L682.7 78 L678.8 73.2 H681.7 V71 H679.8 Z" fill="#a4a4a4" />
<path d="M699.6 69.6 A4.4 4.4 0 1 1 693 69.4" fill="none" stroke="#a4a4a4" stroke-width="1.5" />
<path d="M697.6 67.6 L700.6 69.6 L697.8 71.8 Z" fill="#a4a4a4" />
<circle cx="696.20" cy="73.40" r="1.50" fill="#a4a4a4" />
<rect x="704.80" y="68.20" width="9.60" height="9.60" fill="none" stroke="#a4a4a4" stroke-width="1.3"/>
<path d="M707 78 V72.6 H712.4" fill="none" stroke="#a4a4a4" stroke-width="1.2" />
<rect x="3.00" y="83.00" width="22.30" height="25.00" fill="#363636" rx="1.5" />
<path d="M24.5 107.2 L22.1 107.2 L24.5 104.8 Z" fill="#8c8c8c" />
<circle cx="14.00" cy="94.60" r="6.60" fill="none" stroke="#e0a85a" stroke-width="1.5" stroke-dasharray="1.7 1.5"/>
<path d="M12.4 90.4 L17 95.2 L14.8 95.4 L15.9 98 L14.8 98.4 L13.7 95.9 L12.4 97 Z" fill="#e8e8e8" />
<rect x="3.00" y="109.80" width="22.30" height="24.80" fill="#333333" rx="1.5" />
<path d="M24.5 133.8 L22.1 133.8 L24.5 131.4 Z" fill="#6a6a6a" />
<rect x="8.00" y="115.60" width="12.60" height="12.60" fill="none" stroke="#6a5436" stroke-width="1.1"/>
<path d="M12.4 118.4 L17 122.2 L12.4 126 Z" fill="#5a5a5a" />
<rect x="3.00" y="143.80" width="22.30" height="26.20" fill="#5a5eb4" rx="1.5" />
<path d="M24.5 169.2 L22.1 169.2 L24.5 166.8 Z" fill="#c9cbe8" />
<path d="M14.1 148.6 V165 M5.9 156.8 H22.3" fill="none" stroke="#e6e7fb" stroke-width="1.3" />
<path d="M14.1 147.2 L16.3 150.2 H11.9 Z M14.1 166.4 L16.3 163.4 H11.9 Z M4.5 156.8 L7.5 154.6 V159 Z M23.7 156.8 L20.7 154.6 V159 Z" fill="#e6e7fb" />
<rect x="3.00" y="172.00" width="22.30" height="25.20" fill="#363636" rx="1.5" />
<path d="M24.5 196.4 L22.1 196.4 L24.5 194.0 Z" fill="#8c8c8c" />
<path d="M8.2 188.4 A7 7 0 0 1 14.8 177.4" fill="none" stroke="#dcdcdc" stroke-width="1.5" />
<path d="M20 180.6 A7 7 0 0 1 13.4 191.6" fill="none" stroke="#dcdcdc" stroke-width="1.5" />
<path d="M13.8 175.2 L17.6 177.6 L14 180 Z" fill="#dcdcdc" />
<path d="M14.4 189.2 L10.6 191.4 L14.2 194 Z" fill="#dcdcdc" />
<rect x="3.00" y="199.80" width="22.30" height="24.20" fill="#363636" rx="1.5" />
<path d="M24.5 223.2 L22.1 223.2 L24.5 220.8 Z" fill="#8c8c8c" />
<rect x="8.00" y="204.60" width="12.60" height="12.80" fill="none" rx="1.2" stroke="#dcdcdc" stroke-width="1.4"/>
<rect x="6.60" y="211.60" width="8.00" height="7.60" fill="#363636" />
<rect x="7.40" y="212.40" width="6.20" height="6.00" fill="#dcdcdc" rx="0.8" />
<path d="M13.6 211.8 L17.2 208.2 M14.6 207.8 H17.6 V210.8" fill="none" stroke="#dcdcdc" stroke-width="1" />
<rect x="3.00" y="233.00" width="22.30" height="26.20" fill="#363636" rx="1.5" />
<path d="M16.4 241.6 C17 238.4 19.4 237 21.6 236.8 C21.8 239.4 20.4 242 17.2 242.6 Z" fill="#e8e8e8" />
<circle cx="19.20" cy="239.60" r="0.90" fill="#363636" />
<path d="M16.8 242.2 L13.6 245.6" fill="none" stroke="#e8e8e8" stroke-width="1.2" />
<rect x="7.20" y="246.60" width="6.20" height="6.40" fill="#f0a04a" />
<rect x="3.00" y="261.00" width="22.30" height="25.40" fill="#333333" rx="1.5" />
<path d="M15.6 270 C16.2 267 18.4 265.8 20.4 265.6 C20.6 268 19.4 270.4 16.4 271 Z" fill="#555" />
<path d="M8 277.4 H20" fill="none" stroke="#4e4e4e" stroke-width="1.1" />
<rect x="3.00" y="288.40" width="22.30" height="25.00" fill="#333333" rx="1.5" />
<rect x="8.40" y="293.60" width="11.60" height="14.00" fill="none" stroke="#5c5146" stroke-width="1.4"/>
<rect x="11.80" y="298.40" width="4.80" height="5.00" fill="#6a5436" />
<rect x="3.00" y="316.00" width="22.30" height="27.00" fill="#333333" rx="1.5" />
<path d="M14.2 322.0 L20.7 325.8 V333.4 L14.2 337.2 L7.7 333.4 V325.8 Z" fill="none" stroke="#666666" stroke-width="1.2" stroke-linejoin="round"/>
<path d="M9.4 326.6 L14.2 329.6 L19 326.6 L14.2 324 Z" fill="#8a6636" />
<path d="M9.6 328.4 L14.2 334.6 L18.8 328.4" fill="none" stroke="#666" stroke-width="1.1" />
<rect x="3.00" y="344.60" width="22.30" height="25.20" fill="#333333" rx="1.5" />
<path d="M14.2 349.4 L20.7 353.2 V360.8 L14.2 364.6 L7.7 360.8 V353.2 Z" fill="none" stroke="#666666" stroke-width="1.2" stroke-linejoin="round"/>
<path d="M8.6 353.6 L14.2 360 L19.8 353.6" fill="none" stroke="#8a6636" stroke-width="1.4" />
<rect x="3.00" y="371.20" width="22.30" height="25.80" fill="#333333" rx="1.5" />
<path d="M14.2 376.4 L20.7 380.2 V387.8 L14.2 391.6 L7.7 387.8 V380.2 Z" fill="none" stroke="#666666" stroke-width="1.2" stroke-linejoin="round"/>
<path d="M14.6 380.6 L19 382.8 V387.4 L14.6 389.8 Z" fill="#7a5a32" />
<rect x="3.00" y="399.00" width="22.30" height="25.00" fill="#333333" rx="1.5" />
<rect x="7.40" y="404.40" width="13.60" height="1.30" fill="#8a6a3c" />
<path d="M7.6 408.2 H20.8 V419 H18 C18 413 10.4 413 10.4 419 H7.6 Z" fill="#5a5a5a" />
<rect x="3.00" y="425.60" width="22.30" height="26.40" fill="#333333" rx="1.5" />
<rect x="9.40" y="434.20" width="9.40" height="10.00" fill="none" stroke="#505050" stroke-width="1" stroke-dasharray="1.5 1.2"/>
<path d="M14 431.6 L16.2 436.4 H11.8 Z" fill="#555" />
<rect x="11.60" y="438.00" width="5.00" height="4.60" fill="#585858" />
<rect x="3.00" y="455.00" width="22.30" height="25.20" fill="#343434" rx="1.5" />
<path d="M24.5 479.4 L22.1 479.4 L24.5 477.0 Z" fill="#9a9a9a" />
<path d="M8.6 461.4 C8.6 458.4 19.8 458.4 19.8 461.4 V468.6 C19.8 473.4 16.6 475.8 14.2 475.8 C11.8 475.8 8.6 473.4 8.6 468.6 Z" fill="#585858" />
<rect x="10.20" y="462.60" width="8.00" height="3.80" fill="#3c3c3c" rx="0.8" />
<rect x="3.00" y="483.60" width="22.30" height="25.60" fill="#343434" rx="1.5" />
<path d="M24.5 508.4 L22.1 508.4 L24.5 506.0 Z" fill="#9a9a9a" />
<path d="M12.6 487.8 L16.2 489.9 V494.1 L12.6 496.2 L9.0 494.1 V489.9 Z" fill="none" stroke="#7a5a34" stroke-width="1.1" stroke-linejoin="round"/>
<path d="M15.8 493.2 L19.4 495.3 V499.5 L15.8 501.6 L12.2 499.5 V495.3 Z" fill="none" stroke="#7a5a34" stroke-width="1.1" stroke-linejoin="round"/>
<path d="M11.6 495.8 L14.9 497.7 V501.5 L11.6 503.4 L8.3 501.5 V497.7 Z" fill="none" stroke="#6a4f30" stroke-width="1.1" stroke-linejoin="round"/>
<rect x="3.00" y="513.00" width="22.30" height="24.80" fill="#343434" rx="1.5" />
<path d="M24.5 537.0 L22.1 537.0 L24.5 534.6 Z" fill="#9a9a9a" />
<path d="M20.8 516.8 L21.8 518.4 L15.6 526.4 L13.8 525 Z" fill="#7a5a34" />
<path d="M13.6 525.2 L15.4 526.8 L8.4 534.4 L7.6 533.6 Z" fill="#7a7a7a" />
<rect x="3.00" y="542.00" width="22.30" height="25.40" fill="#343434" rx="1.5" />
<path d="M24.5 566.6 L22.1 566.6 L24.5 564.2 Z" fill="#9a9a9a" />
<path d="M7.6 560.6 V555.6 C7.6 552.8 9.6 551.4 12.4 551.4 H17 V549.6 H13 V548.2 H18.6 C19.8 548.2 20.6 549 20.6 550.2 V560.6 Z" fill="#5c5c5c" />
<rect x="10.40" y="555.00" width="3.60" height="1.80" fill="#343434" />
<rect x="717.40" y="38.00" width="1.00" height="474.00" fill="#232323" />
<rect x="718.00" y="37.20" width="306.00" height="0.90" fill="#222222" />
<rect x="720.40" y="47.40" width="21.00" height="25.20" fill="#383838" rx="1.5" />
<path d="M725.4 50.6 V67 H738" fill="none" stroke="#c9c2f2" stroke-width="1.5" />
<path d="M725.4 49 L727.2 51.6 H723.6 Z M739.6 67 L737 65.2 V68.8 Z" fill="#c9c2f2" />
<circle cx="733.80" cy="56.20" r="4.90" fill="#bcc8f4" />
<circle cx="734.40" cy="55.60" r="3.00" fill="#d6defa" />
<rect x="720.40" y="82.40" width="21.00" height="24.80" fill="#383838" rx="1.5" />
<path d="M740.8 106.6 L738.4 106.6 L740.8 104.2 Z" fill="#9a9a9a" />
<rect x="725.20" y="88.00" width="12.00" height="12.60" fill="none" stroke="#8fd4ee" stroke-width="1.7"/>
<rect x="720.40" y="109.40" width="21.00" height="25.20" fill="#383838" rx="1.5" />
<path d="M740.8 134.0 L738.4 134.0 L740.8 131.6 Z" fill="#9a9a9a" />
<path d="M730.9 114.6 L737.4 118.2 V126 L730.9 129.8 L724.4 126 V118.2 Z" fill="#8fd6f4" />
<path d="M730.9 121.8 L737.4 118.2 L730.9 114.6 L724.4 118.2 Z" fill="#c6ecfb" />
<path d="M730.9 121.8 V129.8 L737.4 126 V118.2 Z" fill="#5fb4dc" />
<rect x="720.40" y="137.00" width="21.00" height="25.40" fill="#383838" rx="1.5" />
<path d="M740.8 161.8 L738.4 161.8 L740.8 159.4 Z" fill="#9a9a9a" />
<path d="M724.6 143 H737.4 V146.2 H736.2 V144.6 H731.8 V155.6 H733.6 V156.8 H728.4 V155.6 H730.2 V144.6 H725.8 V146.2 H724.6 Z" fill="#9fdcf2" />
<rect x="720.40" y="171.60" width="21.00" height="25.40" fill="#383838" rx="1.5" />
<path d="M740.8 196.4 L738.4 196.4 L740.8 194.0 Z" fill="#c8b25a" />
<rect x="725.20" y="177.60" width="11.60" height="13.60" fill="none" stroke="#d8d8d8" stroke-width="0.8"/>
<rect x="724.10" y="176.50" width="2.20" height="2.20" fill="#e6e6e6" />
<rect x="735.70" y="176.50" width="2.20" height="2.20" fill="#e6e6e6" />
<rect x="724.10" y="190.10" width="2.20" height="2.20" fill="#e6e6e6" />
<rect x="735.70" y="190.10" width="2.20" height="2.20" fill="#e6e6e6" />
<rect x="729.90" y="176.50" width="2.20" height="2.20" fill="#e6e6e6" />
<rect x="729.90" y="190.10" width="2.20" height="2.20" fill="#e6e6e6" />
<ellipse cx="731" cy="184.4" rx="4.4" ry="5.2" fill="#3fd05e" stroke="#1d8a3a" stroke-width="0.8"/>
<rect x="720.40" y="198.80" width="21.00" height="25.60" fill="#383838" rx="1.5" />
<path d="M740.8 223.8 L738.4 223.8 L740.8 221.4 Z" fill="#8fa0c8" />
<path d="M731.0 203.1 L734.4 205.1 V208.9 L731.0 210.9 L727.6 208.9 V205.1 Z" fill="#3bd25c" stroke="#35c456" stroke-width="0.6" stroke-linejoin="round"/>
<path d="M727.7 208.9 L731.1 210.9 V214.8 L727.7 216.7 L724.3 214.8 V210.9 Z" fill="#34c454" stroke="#2fb04c" stroke-width="0.6" stroke-linejoin="round"/>
<path d="M734.3 208.9 L737.7 210.9 V214.8 L734.3 216.7 L730.9 214.8 V210.9 Z" fill="#2fb850" stroke="#2fb04c" stroke-width="0.6" stroke-linejoin="round"/>
<rect x="720.40" y="226.60" width="21.00" height="25.00" fill="#383838" rx="1.5" />
<path d="M740.8 251.0 L738.4 251.0 L740.8 248.6 Z" fill="#9a9a9a" />
<circle cx="731.00" cy="246.00" r="1.50" fill="#46d266" />
<circle cx="724.94" cy="242.50" r="1.50" fill="#46d266" />
<circle cx="724.94" cy="235.50" r="1.50" fill="#46d266" />
<circle cx="731.00" cy="232.00" r="1.50" fill="#46d266" />
<circle cx="737.06" cy="235.50" r="1.50" fill="#46d266" />
<circle cx="737.06" cy="242.50" r="1.50" fill="#46d266" />
<path d="M733.90 239.00 L735.90 239.00 M733.05 241.05 L734.46 242.46 M731.00 241.90 L731.00 243.90 M728.95 241.05 L727.54 242.46 M728.10 239.00 L726.10 239.00 M728.95 236.95 L727.54 235.54 M731.00 236.10 L731.00 234.10 M733.05 236.95 L734.46 235.54 " fill="none" stroke="#ececec" stroke-width="1.8" />
<circle cx="731.00" cy="239.00" r="3.10" fill="#ececec" />
<circle cx="731.00" cy="239.00" r="2.00" fill="#3a3a3a" />
<circle cx="731.00" cy="239.00" r="2.00" fill="#383838" />
<circle cx="731.00" cy="239.00" r="0.90" fill="#2e9a48" />
<rect x="720.40" y="255.60" width="21.00" height="24.00" fill="#383838" rx="1.5" />
<path d="M740.8 279.0 L738.4 279.0 L740.8 276.6 Z" fill="#c8b25a" />
<path d="M727.6 261.2 C730.8 258.8 735.8 262.6 736.2 268.6 C736.4 272.6 732.6 274.6 730 271.6 C727.2 268.4 725.4 263.8 727.6 261.2 Z" fill="none" stroke="#8f86e0" stroke-width="1.5" />
<path d="M730 264.2 C732 264.6 733.6 267 733.4 269.6" fill="none" stroke="#8f86e0" stroke-width="1.2" />
<rect x="720.40" y="281.20" width="21.00" height="25.80" fill="#383838" rx="1.5" />
<path d="M740.8 306.4 L738.4 306.4 L740.8 304.0 Z" fill="#9a9a9a" />
<path d="M725 285.8 V302.4 H738.4" fill="none" stroke="#a49af0" stroke-width="1.4" />
<path d="M725 284.4 L726.7 286.8 H723.3 Z M739.8 302.4 L737.4 300.7 V304.1 Z" fill="#a49af0" />
<path d="M733.0 287.4 L736.6 289.5 V293.7 L733.0 295.8 L729.4 293.7 V289.5 Z" fill="none" stroke="#a49af0" stroke-width="1" stroke-linejoin="round"/>
<path d="M729.6 289.8 L733 291.8 L736.4 289.8 M733 291.8 V295.6" fill="none" stroke="#a49af0" stroke-width="0.8" />
<rect x="720.40" y="311.00" width="21.00" height="25.20" fill="#383838" rx="1.5" />
<path d="M740.8 335.6 L738.4 335.6 L740.8 333.2 Z" fill="#9a9a9a" />
<path d="M725 320 L729.4 317 V327.4 L725 330.4 Z" fill="none" stroke="#e37fd2" stroke-width="1.3" stroke-linejoin="round"/>
<path d="M730.6 322.4 L736.6 316.8 V326.4 L730.6 331.6 Z" fill="none" stroke="#e37fd2" stroke-width="1.3" stroke-linejoin="round"/>
<path d="M727 324 L732 319.4" fill="none" stroke="#e37fd2" stroke-width="1" />
<rect x="720.40" y="346.60" width="21.00" height="24.40" fill="#383838" rx="1.5" />
<path d="M740.8 370.4 L738.4 370.4 L740.8 368.0 Z" fill="#9a9a9a" />
<circle cx="731.00" cy="358.80" r="6.60" fill="none" stroke="#d4d8f0" stroke-width="1.2" />
<ellipse cx="731" cy="358.8" rx="3" ry="6.6" fill="none" stroke="#d4d8f0" stroke-width="0.9"/>
<path d="M724.6 356.4 H737.4 M724.6 361.2 H737.4 M731 352.2 V365.4" fill="none" stroke="#d4d8f0" stroke-width="0.8" />
<rect x="720.40" y="373.00" width="21.00" height="25.00" fill="#383838" rx="1.5" />
<path d="M740.8 397.4 L738.4 397.4 L740.8 395.0 Z" fill="#9a9a9a" />
<path d="M728 379.8 H724.4 V383" fill="none" stroke="#dfe2f6" stroke-width="1.2" />
<rect x="724.60" y="382.60" width="8.80" height="8.40" fill="none" rx="1.2" stroke="#dfe2f6" stroke-width="1.4"/>
<path d="M734.8 386.8 L738.6 383.8 V389.8 Z" fill="#dfe2f6" />
<rect x="720.40" y="400.60" width="21.00" height="25.40" fill="#383838" rx="1.5" />
<path d="M740.8 425.4 L738.4 425.4 L740.8 423.0 Z" fill="#9a9a9a" />
<path d="M731 408.6 C728 408.6 726.8 411.6 728.6 413.8 C729.4 414.8 729.4 415.6 729.4 416.6 H732.6 C732.6 415.6 732.6 414.8 733.4 413.8 C735.2 411.6 734 408.6 731 408.6 Z" fill="none" stroke="#e2e2e2" stroke-width="1" />
<path d="M729.6 418.2 H732.4 M730 419.8 H732" fill="none" stroke="#e2e2e2" stroke-width="0.9" />
<path d="M731 404.6 V406.4 M725.8 407 L727 408.2 M736.2 407 L735 408.2 M724.4 412 H726 M736 412 H737.6" fill="none" stroke="#e2e2e2" stroke-width="0.9" />
<rect x="720.40" y="442.60" width="21.00" height="25.40" fill="#353535" rx="1.5" />
<path d="M740.8 467.4 L738.4 467.4 L740.8 465.0 Z" fill="#9a9a9a" />
<path d="M730.6 449.0 L736.1 452.2 V458.6 L730.6 461.8 L725.1 458.6 V452.2 Z" fill="none" stroke="#4c4c4c" stroke-width="1" stroke-linejoin="round"/>
<path d="M727.6 459 L735.6 449.6" fill="none" stroke="#565656" stroke-width="1.5" />
<rect x="745.00" y="38.00" width="1.00" height="540.00" fill="#1f1f1f" />
<rect x="746.00" y="38.00" width="278.00" height="17.00" fill="#1b1b1b" />
<rect x="746.00" y="38.00" width="39.40" height="17.00" fill="#2a2a2a" />
<text x="752.6" y="50.0" font-size="9" fill="#e4e4e4" stroke="#e4e4e4" textLength="24.8" lengthAdjust="spacingAndGlyphs" >Objects</text>
<text x="794.0" y="50.0" font-size="9" fill="#555" stroke="#555" textLength="16.6" lengthAdjust="spacingAndGlyphs" >Takes</text>
<rect x="749.00" y="59.80" width="10.40" height="1.90" fill="#e0e0e0" />
<rect x="749.00" y="63.00" width="10.40" height="1.90" fill="#e0e0e0" />
<rect x="749.00" y="66.20" width="10.40" height="1.90" fill="#e0e0e0" />
<text x="765.0" y="67.4" font-size="9" fill="#cfcfcf" stroke="#cfcfcf" textLength="10.6" lengthAdjust="spacingAndGlyphs" >File</text>
<text x="786.0" y="67.4" font-size="9" fill="#cfcfcf" stroke="#cfcfcf" textLength="12.0" lengthAdjust="spacingAndGlyphs" >Edit</text>
<text x="808.6" y="67.4" font-size="9" fill="#cfcfcf" stroke="#cfcfcf" textLength="15.4" lengthAdjust="spacingAndGlyphs" >View</text>
<text x="834.2" y="67.4" font-size="9" fill="#d6d98a" stroke="#d6d98a" textLength="21.8" lengthAdjust="spacingAndGlyphs" >Object</text>
<text x="865.4" y="67.4" font-size="9" fill="#cfcfcf" stroke="#cfcfcf" textLength="14.6" lengthAdjust="spacingAndGlyphs" >Tags</text>
<text x="888.0" y="67.4" font-size="9" fill="#cfcfcf" stroke="#cfcfcf" textLength="36.0" lengthAdjust="spacingAndGlyphs" >Bookmarks</text>
<circle cx="974.40" cy="62.60" r="2.90" fill="none" stroke="#c4c4c4" stroke-width="1.1" />
<path d="M976.6 65 L979.6 68.4" fill="none" stroke="#c4c4c4" stroke-width="1.3" />
<path d="M985.2 68.6 V63.6 L989 59.4 L992.8 63.6 V68.6 H990.4 V65.6 H987.6 V68.6 Z" fill="none" stroke="#c4c4c4" stroke-width="1" stroke-linejoin="round"/>
<path d="M998 60.6 H1008 M999.8 63.8 H1006.2 M1001.6 67 H1004.4" fill="none" stroke="#c4c4c4" stroke-width="1.3" />
<path d="M1016.4 59.8 H1012.2 V68.6 H1021 V64.6 M1016 64.8 L1021.2 59.6 M1018 59.4 H1021.4 V62.8" fill="none" stroke="#c4c4c4" stroke-width="1.1" />
<rect x="746.00" y="74.00" width="278.00" height="15.40" fill="#262626" />
<rect x="746.00" y="89.40" width="278.00" height="15.20" fill="#2d2d2d" />
<rect x="746.00" y="104.60" width="278.00" height="15.40" fill="#212121" />
<rect x="746.00" y="120.00" width="278.00" height="15.20" fill="#2d2d2d" />
<rect x="826.40" y="104.60" width="197.60" height="15.40" fill="#272727" />
<rect x="827.00" y="135.20" width="197.00" height="141.40" fill="#2c2c2c" />
<rect x="826.00" y="74.00" width="0.90" height="202.60" fill="#202020" />
<path d="M750 75 V108.4 M750 82 H755.6 M750 97 H755.6 M757.6 119 V127 H762.6" fill="none" stroke="#555" stroke-width="0.8" />
<circle cx="761.20" cy="82.00" r="4.30" fill="none" stroke="#8fb6c8" stroke-width="1.3" />
<text x="768.6" y="85.4" font-size="9" fill="#d8d8d8" stroke="#d8d8d8" textLength="23.1" lengthAdjust="spacingAndGlyphs" >Circle.1</text>
<path d="M806.0 80.8 l4.6 2.8 l-4.6 2.8 l-4.6 -2.8 Z" fill="#555555" />
<path d="M806.0 76.8 l4.6 2.8 l-4.6 2.8 l-4.6 -2.8 Z" fill="#6c6c6c" />
<circle cx="815.20" cy="78.70" r="1.80" fill="#606060" />
<circle cx="815.20" cy="85.10" r="1.80" fill="#606060" />
<path d="M818.0 82.4 l2.5 2.6 l4.4 -6.4" fill="none" stroke="#b4b4b4" stroke-width="1" />
<circle cx="761.20" cy="97.00" r="4.30" fill="none" stroke="#8fb6c8" stroke-width="1.3" />
<text x="768.6" y="100.4" font-size="9" fill="#d8d8d8" stroke="#d8d8d8" textLength="17.8" lengthAdjust="spacingAndGlyphs" >Circle</text>
<path d="M806.0 95.8 l4.6 2.8 l-4.6 2.8 l-4.6 -2.8 Z" fill="#555555" />
<path d="M806.0 91.8 l4.6 2.8 l-4.6 2.8 l-4.6 -2.8 Z" fill="#6c6c6c" />
<circle cx="815.20" cy="93.70" r="1.80" fill="#606060" />
<circle cx="815.20" cy="100.10" r="1.80" fill="#606060" />
<path d="M818.0 97.4 l2.5 2.6 l4.4 -6.4" fill="none" stroke="#b4b4b4" stroke-width="1" />
<rect x="747.20" y="108.60" width="5.80" height="7.00" fill="#2a2a2a" stroke="#6a6a6a" stroke-width="0.8"/>
<path d="M748.6 112.1 H751.6" fill="none" stroke="#aaa" stroke-width="0.8" />
<path d="M761.4 107.6 L765.4 115.6 H757.4 Z" fill="#7fd0ee" />
<circle cx="761.40" cy="107.80" r="1.20" fill="#f4f4f4" />
<circle cx="757.60" cy="115.60" r="1.30" fill="#f4f4f4" />
<circle cx="765.20" cy="115.60" r="1.30" fill="#f4f4f4" />
<text x="769.2" y="115.4" font-size="9" fill="#dd8a2e" stroke="#dd8a2e" textLength="17.1" lengthAdjust="spacingAndGlyphs" >Plane</text>
<path d="M806.0 110.8 l4.6 2.8 l-4.6 2.8 l-4.6 -2.8 Z" fill="#555555" />
<path d="M806.0 106.8 l4.6 2.8 l-4.6 2.8 l-4.6 -2.8 Z" fill="#6c6c6c" />
<circle cx="815.20" cy="108.70" r="1.80" fill="#606060" />
<circle cx="815.20" cy="115.10" r="1.80" fill="#606060" />
<rect x="827.80" y="105.80" width="9.40" height="10.20" fill="#4b4578" />
<path d="M829.6 107.6 H836 L829.6 114 Z" fill="#e8e8f4" />
<rect x="841.40" y="105.80" width="9.40" height="10.20" fill="#e6e6e6" />
<rect x="846.10" y="105.80" width="4.70" height="5.10" fill="#222" />
<rect x="841.40" y="110.90" width="4.70" height="5.10" fill="#222" />
<path d="M764.4 126.6 L768.4 123 L772.4 126.6" fill="none" stroke="#d8d6f0" stroke-width="1.2" />
<path d="M764.4 131.4 V128.6 L768.4 125.4 L772.4 128.6 V131.4 Z" fill="none" stroke="#9a92e6" stroke-width="1.1" />
<text x="775.9" y="130.4" font-size="9" fill="#f2c136" stroke="#f2c136" textLength="20.1" lengthAdjust="spacingAndGlyphs" >Spline</text>
<path d="M806.0 125.8 l4.6 2.8 l-4.6 2.8 l-4.6 -2.8 Z" fill="#555555" />
<path d="M806.0 121.8 l4.6 2.8 l-4.6 2.8 l-4.6 -2.8 Z" fill="#6c6c6c" />
<circle cx="815.20" cy="123.70" r="1.80" fill="#606060" />
<circle cx="815.20" cy="130.10" r="1.80" fill="#606060" />
<path d="M818.0 127.4 l2.5 2.6 l4.4 -6.4" fill="none" stroke="#b4b4b4" stroke-width="1" />
<rect x="746.00" y="276.60" width="278.00" height="18.40" fill="#1b1b1b" />
<rect x="746.00" y="279.00" width="46.40" height="16.00" fill="#2a2a2a" />
<text x="752.6" y="290.6" font-size="9" fill="#e4e4e4" stroke="#e4e4e4" textLength="32.0" lengthAdjust="spacingAndGlyphs" >Attributes</text>
<text x="800.4" y="290.6" font-size="9" fill="#555" stroke="#555" textLength="20.2" lengthAdjust="spacingAndGlyphs" >Layers</text>
<rect x="749.00" y="299.80" width="10.40" height="1.80" fill="#c4c4c4" />
<rect x="749.00" y="303.00" width="10.40" height="1.80" fill="#c4c4c4" />
<rect x="749.00" y="306.20" width="10.40" height="1.80" fill="#c4c4c4" />
<text x="765.4" y="307.2" font-size="9" fill="#cfcfcf" stroke="#cfcfcf" textLength="19.0" lengthAdjust="spacingAndGlyphs" >Mode</text>
<text x="794.0" y="307.2" font-size="9" fill="#cfcfcf" stroke="#cfcfcf" textLength="12.4" lengthAdjust="spacingAndGlyphs" >Edit</text>
<text x="816.0" y="307.2" font-size="9" fill="#cfcfcf" stroke="#cfcfcf" textLength="32.0" lengthAdjust="spacingAndGlyphs" >User Data</text>
<path d="M927 304.4 H919.4 M922.6 301 L919.2 304.4 L922.6 307.8" fill="none" stroke="#d0d0d0" stroke-width="1.3" />
<path d="M932.6 304.4 H940.2 M937 301 L940.4 304.4 L937 307.8" fill="none" stroke="#4a4a4a" stroke-width="1.3" />
<path d="M949.8 309 V300.6 M946.4 303.8 L949.8 300.4 L953.2 303.8" fill="none" stroke="#d0d0d0" stroke-width="1.3" />
<circle cx="962.20" cy="302.80" r="2.70" fill="none" stroke="#d0d0d0" stroke-width="1.1" />
<path d="M964.2 305 L967 308.2" fill="none" stroke="#d0d0d0" stroke-width="1.3" />
<path d="M971.4 300.6 H981 M973.2 303.6 H979.2 M975 306.6 H977.4" fill="none" stroke="#d0d0d0" stroke-width="1.3" />
<rect x="985.60" y="303.40" width="8.00" height="5.20" fill="none" rx="0.8" stroke="#d0d0d0" stroke-width="1.1"/>
<path d="M987.4 303.2 V301.8 A2.2 2.2 0 0 1 991.8 301.8 V303.2" fill="none" stroke="#d0d0d0" stroke-width="1.1" />
<circle cx="1002.60" cy="304.40" r="4.30" fill="none" stroke="#d0d0d0" stroke-width="1.1" />
<circle cx="1002.60" cy="304.40" r="1.50" fill="none" stroke="#d0d0d0" stroke-width="0.9" />
<path d="M1015.8 300.4 H1011.8 V308.8 H1020.2 V304.8 M1015.6 305 L1020.6 300 M1017.6 299.8 H1020.8 V303" fill="none" stroke="#d0d0d0" stroke-width="1.1" />
<path d="M750 322.2 L754.6 318 L759.2 322.2" fill="none" stroke="#e6e6f4" stroke-width="1.3" />
<path d="M750 328.6 V325.2 L754.6 321.4 L759.2 325.2 V328.6 Z" fill="none" stroke="#a49af0" stroke-width="1.1" />
<text x="764.0" y="326.8" font-size="9" fill="#cfcfcf" stroke="#cfcfcf" textLength="102.0" lengthAdjust="spacingAndGlyphs" >Spline Deformer Object [Spline]</text>
<rect x="954.60" y="317.80" width="54.00" height="12.60" fill="#3b3b3b" rx="5.0" />
<rect x="1000.00" y="317.80" width="8.60" height="12.60" fill="#3b3b3b" />
<rect x="1009.40" y="317.80" width="14.60" height="12.60" fill="#3b3b3b" />
<text x="959.6" y="327.2" font-size="9" fill="#dcdcdc" stroke="#dcdcdc" textLength="25.0" lengthAdjust="spacingAndGlyphs" >Custom</text>
<path d="M1012.8 322.8 L1015.6 325.6 L1018.4 322.8" fill="none" stroke="#e0e0e0" stroke-width="1.3" />
<rect x="747.60" y="334.60" width="54.40" height="13.60" fill="#3a3a3a" rx="1.5" />
<rect x="773.20" y="334.60" width="0.60" height="13.60" fill="#2f2f2f" />
<rect x="802.00" y="334.60" width="27.00" height="13.60" fill="#5a5eb4" />
<text x="751.6" y="344.8" font-size="9" fill="#cfcfcf" stroke="#cfcfcf" textLength="17.0" lengthAdjust="spacingAndGlyphs" >Basic</text>
<text x="777.0" y="344.8" font-size="9" fill="#cfcfcf" stroke="#cfcfcf" textLength="21.6" lengthAdjust="spacingAndGlyphs" >Coord.</text>
<text x="804.4" y="344.8" font-size="9" fill="#f0f0fa" stroke="#f0f0fa" textLength="21.8" lengthAdjust="spacingAndGlyphs" >Object</text>
<text x="748.0" y="363.0" font-size="9" fill="#ececec" stroke="#ececec" textLength="60.4" lengthAdjust="spacingAndGlyphs" font-weight="bold" >Object Properties</text>
<path d="M752.6 373.4 l2.8 2.8 l-2.8 2.8 l-2.8 -2.8 Z" fill="none" stroke="#b0b0b0" stroke-width="1" />
<path d="M764.2 373.3 l2.2 2.9 l-2.2 2.9" fill="none" stroke="#a8a8a8" stroke-width="1" />
<text x="769.8" y="379.4" font-size="9" fill="#e78a2c" stroke="#e78a2c" textLength="47.6" lengthAdjust="spacingAndGlyphs" >Original Spline</text>
<rect x="843.80" y="371.00" width="143.20" height="10.60" fill="#1b1b1b" rx="1.0" />
<text x="848.4" y="379.4" font-size="9" fill="#dcdcdc" stroke="#dcdcdc" textLength="18.0" lengthAdjust="spacingAndGlyphs" >Circle</text>
<circle cx="992.90" cy="376.20" r="3.40" fill="none" stroke="#8fb6c8" stroke-width="1.2" />
<path d="M1001.4 375.2 l2.4 2.4 l2.4 -2.4" fill="none" stroke="#e0e0e0" stroke-width="1.3" />
<path d="M1009.6 378.8 l5.2 -6.6 l2 1.6 l-5.2 6.6 l-2.6 1 Z" fill="none" stroke="#a8a8a8" stroke-width="1" stroke-linejoin="round"/>
<path d="M752.6 388.8 l2.8 2.8 l-2.8 2.8 l-2.8 -2.8 Z" fill="none" stroke="#b0b0b0" stroke-width="1" />
<path d="M764.2 388.7 l2.2 2.9 l-2.2 2.9" fill="none" stroke="#a8a8a8" stroke-width="1" />
<text x="769.8" y="394.8" font-size="9" fill="#cfcfcf" stroke="#cfcfcf" textLength="55.4" lengthAdjust="spacingAndGlyphs" >Modifying Spline</text>
<rect x="843.80" y="386.40" width="143.20" height="10.60" fill="#1b1b1b" rx="1.0" />
<text x="848.4" y="394.8" font-size="9" fill="#dcdcdc" stroke="#dcdcdc" textLength="23.0" lengthAdjust="spacingAndGlyphs" >Circle.1</text>
<circle cx="992.90" cy="391.60" r="3.40" fill="none" stroke="#8fb6c8" stroke-width="1.2" />
<path d="M1001.4 390.6 l2.4 2.4 l2.4 -2.4" fill="none" stroke="#e0e0e0" stroke-width="1.3" />
<path d="M1009.6 394.2 l5.2 -6.6 l2 1.6 l-5.2 6.6 l-2.6 1 Z" fill="none" stroke="#a8a8a8" stroke-width="1" stroke-linejoin="round"/>
<path d="M752.6 404.6 l2.8 2.8 l-2.8 2.8 l-2.8 -2.8 Z" fill="none" stroke="#b0b0b0" stroke-width="1" />
<text x="762.6" y="410.6" font-size="9" fill="#cfcfcf" stroke="#cfcfcf" textLength="77.0" lengthAdjust="spacingAndGlyphs" >B-Spline Approximation</text>
<rect x="843.80" y="401.80" width="53.00" height="11.40" fill="#1e1e1e" rx="1.0" />
<path d="M848.4 404.5 l-2.2 2.9 l2.2 2.9" fill="none" stroke="#8a8a8a" stroke-width="1" />
<path d="M891.6 404.5 l2.2 2.9 l-2.2 2.9" fill="none" stroke="#8a8a8a" stroke-width="1" />
<text x="866.0" y="410.6" font-size="9" fill="#dcdcdc" stroke="#dcdcdc" textLength="8.2" lengthAdjust="spacingAndGlyphs" >50</text>
<path d="M752.6 420.8 l2.8 2.8 l-2.8 2.8 l-2.8 -2.8 Z" fill="none" stroke="#b0b0b0" stroke-width="1" />
<text x="762.6" y="426.8" font-size="9" fill="#cfcfcf" stroke="#cfcfcf" textLength="21.4" lengthAdjust="spacingAndGlyphs" >Radius</text>
<rect x="843.80" y="418.00" width="53.00" height="11.40" fill="#1e1e1e" rx="1.0" />
<path d="M848.4 420.7 l-2.2 2.9 l2.2 2.9" fill="none" stroke="#8a8a8a" stroke-width="1" />
<path d="M891.6 420.7 l2.2 2.9 l-2.2 2.9" fill="none" stroke="#8a8a8a" stroke-width="1" />
<text x="858.8" y="426.8" font-size="9" fill="#dcdcdc" stroke="#dcdcdc" textLength="22.8" lengthAdjust="spacingAndGlyphs" >146 cm</text>
<path d="M752.6 437.0 l2.8 2.8 l-2.8 2.8 l-2.8 -2.8 Z" fill="none" stroke="#b0b0b0" stroke-width="1" />
<text x="762.6" y="443.0" font-size="9" fill="#cfcfcf" stroke="#cfcfcf" textLength="36.6" lengthAdjust="spacingAndGlyphs" >Use Length</text>
<rect x="843.80" y="435.60" width="8.20" height="8.40" fill="#545454" rx="1.0" />
<path d="M752.6 452.0 l2.8 2.8 l-2.8 2.8 l-2.8 -2.8 Z" fill="none" stroke="#b0b0b0" stroke-width="1" />
<text x="762.6" y="458.0" font-size="9" fill="#cfcfcf" stroke="#cfcfcf" textLength="42.8" lengthAdjust="spacingAndGlyphs" >Full Polygons</text>
<rect x="843.80" y="450.60" width="8.20" height="8.40" fill="#545454" rx="1.0" />
<path d="M752.6 467.2 l2.8 2.8 l-2.8 2.8 l-2.8 -2.8 Z" fill="none" stroke="#b0b0b0" stroke-width="1" />
<text x="762.6" y="473.2" font-size="9" fill="#cfcfcf" stroke="#cfcfcf" textLength="20.0" lengthAdjust="spacingAndGlyphs" >Shape</text>
<path d="M837.6 466.7 l2.2 2.9 l-2.2 2.9" fill="none" stroke="#a8a8a8" stroke-width="1" />
<rect x="842.60" y="462.40" width="181.40" height="66.60" fill="#1d1d1d" />
<rect x="852.40" y="462.40" width="171.60" height="62.00" fill="#222222" />
<rect x="879.00" y="463.00" width="0.60" height="61.00" fill="#2c2c2c" />
<rect x="905.60" y="463.00" width="0.60" height="61.00" fill="#2c2c2c" />
<rect x="932.20" y="463.00" width="0.60" height="61.00" fill="#2c2c2c" />
<rect x="958.80" y="463.00" width="0.60" height="61.00" fill="#2c2c2c" />
<rect x="985.40" y="463.00" width="0.60" height="61.00" fill="#2c2c2c" />
<rect x="1012.00" y="463.00" width="0.60" height="61.00" fill="#2c2c2c" />
<rect x="852.40" y="497.00" width="172.00" height="0.60" fill="#2c2c2c" />
<path d="M843 469.5 H1024" fill="none" stroke="#b0b0b0" stroke-width="1" stroke-dasharray="1 2.4"/>
<path d="M843 524.4 H1024" fill="none" stroke="#b0b0b0" stroke-width="1" stroke-dasharray="1 2.4"/>
<path d="M852.4 469.6 L1022 481.2" fill="none" stroke="#a8a8a8" stroke-width="1" />
<circle cx="852.20" cy="469.60" r="1.50" fill="#e8e8e8" />
<rect x="848.40" y="519.60" width="5.20" height="6.20" fill="#1d1d1d" />
<text x="851.0" y="525.6" font-size="8" fill="#9a9a9a" stroke="#9a9a9a" text-anchor="middle" >0</text>
<rect x="900.00" y="519.60" width="9.40" height="6.20" fill="#1d1d1d" />
<text x="904.6" y="525.6" font-size="8" fill="#9a9a9a" stroke="#9a9a9a" text-anchor="middle" >10</text>
<rect x="953.20" y="519.60" width="9.40" height="6.20" fill="#1d1d1d" />
<text x="957.8" y="525.6" font-size="8" fill="#9a9a9a" stroke="#9a9a9a" text-anchor="middle" >20</text>
<rect x="1006.40" y="519.60" width="9.40" height="6.20" fill="#1d1d1d" />
<text x="1011.0" y="525.6" font-size="8" fill="#9a9a9a" stroke="#9a9a9a" text-anchor="middle" >30</text>
<rect x="843.00" y="534.60" width="57.40" height="13.40" fill="#3b3b3b" rx="5.5" />
<rect x="905.00" y="534.60" width="56.00" height="13.40" fill="#3b3b3b" rx="5.5" />
<text x="850.6" y="544.6" font-size="9" fill="#d0d0d0" stroke="#d0d0d0" textLength="42.8" lengthAdjust="spacingAndGlyphs" >Load Preset...</text>
<text x="911.6" y="544.6" font-size="9" fill="#d0d0d0" stroke="#d0d0d0" textLength="42.4" lengthAdjust="spacingAndGlyphs" >Save Preset...</text>
<rect x="0.00" y="578.00" width="1024.00" height="4.00" fill="#1e1e1e" />
<rect x="35.80" y="519.60" width="17.80" height="19.00" fill="#3a3a3a" rx="1.5" />
<path d="M44.7 524.4 L49.5 529.2 L44.7 534 L39.9 529.2 Z" fill="none" stroke="#e8e8e8" stroke-width="1.5" />
<rect x="145.00" y="519.60" width="128.70" height="19.00" fill="#3a3a3a" rx="1.5" />
<rect x="149.40" y="525.00" width="1.70" height="8.80" fill="#cfcfcf" />
<path d="M157.6 525.0 L151.6 529.4 L157.6 533.8 Z" fill="#cfcfcf" />
<path d="M179.2 525.4 L173.4 529.4 L179.2 533.4 Z" fill="#cfcfcf" />
<path d="M169.6 527.0 l2.4 2.4 l-2.4 2.4 l-2.4 -2.4 Z" fill="none" stroke="#cfcfcf" stroke-width="0.9" />
<path d="M192.6 525.2 L186.6 529.4 L192.6 533.6 Z" fill="#cfcfcf" />
<rect x="193.80" y="525.20" width="1.60" height="8.40" fill="#cfcfcf" />
<path d="M205.8 523.2 L214.4 529.4 L205.8 535.6 Z" fill="#cfcfcf" />
<rect x="224.40" y="525.20" width="1.60" height="8.40" fill="#cfcfcf" />
<path d="M227.2 525.2 L233.2 529.4 L227.2 533.6 Z" fill="#cfcfcf" />
<path d="M241.2 525.4 L247 529.4 L241.2 533.4 Z" fill="#cfcfcf" />
<path d="M250.8 527.0 l2.4 2.4 l-2.4 2.4 l-2.4 -2.4 Z" fill="none" stroke="#cfcfcf" stroke-width="0.9" />
<path d="M262.4 525.0 L268.4 529.4 L262.4 533.8 Z" fill="#cfcfcf" />
<rect x="268.90" y="525.00" width="1.70" height="8.80" fill="#cfcfcf" />
<rect x="282.40" y="519.60" width="54.80" height="19.00" fill="#3a3a3a" rx="1.5" />
<rect x="282.40" y="519.60" width="36.80" height="19.00" fill="#5a5eb4" />
<path d="M286.6 527.4 V525.4 H295.4 M293.6 523.4 L295.8 525.4 L293.6 527.4 M295.6 531 V533 H286.8 M288.6 531 L286.4 533 L288.6 535" fill="none" stroke="#d9dbf6" stroke-width="1.2" />
<path d="M300.2 537.8 L298.0 537.8 L300.2 535.6 Z" fill="#c9cbe8" />
<text x="310.0" y="528.6" font-size="7.5" fill="#d9dbf6" stroke="#d9dbf6" text-anchor="middle" >A</text>
<rect x="304.40" y="532.60" width="1.20" height="2.40" fill="#d9dbf6" />
<rect x="306.70" y="532.60" width="1.20" height="2.40" fill="#d9dbf6" />
<rect x="309.00" y="532.60" width="1.20" height="2.40" fill="#d9dbf6" />
<rect x="311.60" y="531.80" width="3.60" height="3.40" fill="#d9dbf6" />
<path d="M318.4 537.8 L316.2 537.8 L318.4 535.6 Z" fill="#c9cbe8" />
<path d="M323.2 527.2 H325.6 L329 524.2 V534.6 L325.6 531.6 H323.2 Z" fill="#cfcfcf" />
<path d="M331 526.4 C332.6 528 332.6 530.8 331 532.4 M332.8 524.6 C335.4 527.2 335.4 531.6 332.8 534.2" fill="none" stroke="#cfcfcf" stroke-width="1" />
<rect x="345.60" y="523.00" width="54.00" height="12.60" fill="#1a1a1a" rx="1.5" />
<path d="M349.1 526.8 l-1.9 2.5 l1.9 2.5" fill="none" stroke="#6a6a6a" stroke-width="1" />
<path d="M394.4 526.8 l1.9 2.5 l-1.9 2.5" fill="none" stroke="#6a6a6a" stroke-width="1" />
<text x="367.0" y="532.2" font-size="8.4" fill="#dcdcdc" stroke="#dcdcdc" textLength="9.6" lengthAdjust="spacingAndGlyphs" >0 F</text>
<rect x="407.00" y="519.60" width="54.40" height="19.00" fill="#3a3a3a" rx="1.5" />
<circle cx="415.00" cy="529.20" r="6.40" fill="#ea5c6e" />
<path d="M415 525.6 l3.6 3.6 l-3.6 3.6 l-3.6 -3.6 Z" fill="none" stroke="#8c2634" stroke-width="1.1" />
<path d="M422.4 538.0 L420.2 538.0 L422.4 535.8 Z" fill="#9a9a9a" />
<circle cx="433.60" cy="529.20" r="6.40" fill="#ea5c6e" />
<text x="433.6" y="532.4" font-size="8.6" fill="#8c2634" stroke="#8c2634" font-weight="bold" text-anchor="middle" >A</text>
<circle cx="452.00" cy="529.20" r="6.00" fill="#dedede" />
<path d="M453.80 529.20 L455.80 529.20 M452.90 530.76 L453.90 532.49 M451.10 530.76 L450.10 532.49 M450.20 529.20 L448.20 529.20 M451.10 527.64 L450.10 525.91 M452.90 527.64 L453.90 525.91 " fill="none" stroke="#3a3a3a" stroke-width="1.8" />
<circle cx="452.00" cy="529.20" r="2.00" fill="#3a3a3a" />
<circle cx="452.00" cy="529.20" r="1.20" fill="#dedede" />
<rect x="469.60" y="519.60" width="35.60" height="19.00" fill="#3a3a3a" rx="1.5" />
<circle cx="478.20" cy="529.20" r="6.00" fill="#dedede" />
<rect x="475.80" y="525.60" width="4.80" height="7.40" fill="#dedede" rx="2.4" stroke="#3a3a3a" stroke-width="1"/>
<path d="M478.2 525.8 V528.6" fill="none" stroke="#3a3a3a" stroke-width="0.9" />
<path d="M501.6 525.2 A5.8 5.8 0 1 1 497 523.4" fill="none" stroke="#a8a8a8" stroke-width="1.2" />
<circle cx="497.00" cy="529.20" r="2.40" fill="none" stroke="#a8a8a8" stroke-width="1" />
<path d="M498.6 527.6 L501.6 524.4" fill="none" stroke="#a8a8a8" stroke-width="1" />
<rect x="513.40" y="519.60" width="92.20" height="19.00" fill="#3a3a3a" rx="1.5" />
<rect x="587.60" y="519.60" width="18.00" height="19.00" fill="#5a5eb4" />
<circle cx="521.80" cy="529.20" r="2.10" fill="none" stroke="#cfcfcf" stroke-width="1" />
<path d="M521.8 523.4 l1.6 1.8 h-3.2 Z M521.8 535 l1.6 -1.8 h-3.2 Z M516 529.2 l1.8 -1.6 v3.2 Z M527.6 529.2 l-1.8 -1.6 v3.2 Z" fill="#cfcfcf" />
<path d="M535.4 532.6 A5.6 5.6 0 0 1 540.4 523.6 M545.2 525.8 A5.6 5.6 0 0 1 540.2 534.8" fill="none" stroke="#cfcfcf" stroke-width="1.2" />
<path d="M540.3 526.6 l2.4 2.6 l-2.4 2.6 l-2.4 -2.6 Z" fill="none" stroke="#cfcfcf" stroke-width="0.9" />
<path d="M554.4 528 V523.8 H564 V534.6 H560.6" fill="none" stroke="#cfcfcf" stroke-width="1.2" />
<path d="M557 529.4 l2.5 2.5 l-2.5 2.5 l-2.5 -2.5 Z" fill="none" stroke="#cfcfcf" stroke-width="0.9" />
<rect x="571.40" y="524.20" width="12.00" height="4.20" fill="#cfcfcf" rx="2.1" />
<rect x="571.40" y="530.20" width="12.00" height="4.20" fill="#cfcfcf" rx="2.1" />
<circle cx="580.60" cy="526.30" r="1.10" fill="#3a3a3a" />
<circle cx="580.60" cy="532.30" r="1.10" fill="#3a3a3a" />
<path d="M592.4 523.4 L601.4 535 M600.6 523.6 L596.2 530" fill="none" stroke="#f0f0fb" stroke-width="1.5" />
<circle cx="594.20" cy="532.60" r="2.20" fill="#f0f0fb" />
<rect x="697.00" y="519.60" width="17.60" height="19.00" fill="#3a3a3a" rx="1.5" />
<path d="M701.4 523.6 V534.6 H711.6 M701.4 534.6 L710 525.4" fill="none" stroke="#cfcfcf" stroke-width="1.3" />
<circle cx="701.40" cy="523.80" r="1.10" fill="#cfcfcf" />
<circle cx="711.60" cy="534.60" r="1.10" fill="#cfcfcf" />
<circle cx="710.20" cy="525.20" r="1.10" fill="#cfcfcf" />
<rect x="41.60" y="545.00" width="6.40" height="12.60" fill="#7b80da" rx="0.6" />
<text x="49.0" y="553.8" font-size="8.2" fill="#6a70c8" stroke="#6a70c8" >0</text>
<text x="81.3" y="553.8" font-size="8" fill="#adadad" stroke="#adadad" text-anchor="middle" >5</text>
<text x="118.0" y="553.8" font-size="8" fill="#adadad" stroke="#adadad" text-anchor="middle" >10</text>
<text x="154.6" y="553.8" font-size="8" fill="#adadad" stroke="#adadad" text-anchor="middle" >15</text>
<text x="191.2" y="553.8" font-size="8" fill="#adadad" stroke="#adadad" text-anchor="middle" >20</text>
<text x="227.8" y="553.8" font-size="8" fill="#adadad" stroke="#adadad" text-anchor="middle" >25</text>
<text x="264.4" y="553.8" font-size="8" fill="#adadad" stroke="#adadad" text-anchor="middle" >30</text>
<text x="301.1" y="553.8" font-size="8" fill="#adadad" stroke="#adadad" text-anchor="middle" >35</text>
<text x="337.7" y="553.8" font-size="8" fill="#adadad" stroke="#adadad" text-anchor="middle" >40</text>
<text x="374.3" y="553.8" font-size="8" fill="#adadad" stroke="#adadad" text-anchor="middle" >45</text>
<text x="410.9" y="553.8" font-size="8" fill="#adadad" stroke="#adadad" text-anchor="middle" >50</text>
<text x="447.6" y="553.8" font-size="8" fill="#adadad" stroke="#adadad" text-anchor="middle" >55</text>
<text x="484.2" y="553.8" font-size="8" fill="#adadad" stroke="#adadad" text-anchor="middle" >60</text>
<text x="520.8" y="553.8" font-size="8" fill="#adadad" stroke="#adadad" text-anchor="middle" >65</text>
<text x="557.5" y="553.8" font-size="8" fill="#adadad" stroke="#adadad" text-anchor="middle" >70</text>
<text x="594.1" y="553.8" font-size="8" fill="#adadad" stroke="#adadad" text-anchor="middle" >75</text>
<text x="630.7" y="553.8" font-size="8" fill="#adadad" stroke="#adadad" text-anchor="middle" >80</text>
<text x="667.3" y="553.8" font-size="8" fill="#adadad" stroke="#adadad" text-anchor="middle" >85</text>
<text x="704.0" y="553.8" font-size="8" fill="#adadad" stroke="#adadad" text-anchor="middle" >90</text>
<rect x="44.30" y="558.40" width="0.90" height="2.80" fill="#7c7c7c" />
<rect x="51.63" y="558.40" width="0.90" height="2.80" fill="#7c7c7c" />
<rect x="58.95" y="558.40" width="0.90" height="2.80" fill="#7c7c7c" />
<rect x="66.28" y="558.40" width="0.90" height="2.80" fill="#7c7c7c" />
<rect x="73.60" y="558.40" width="0.90" height="2.80" fill="#7c7c7c" />
<rect x="80.92" y="558.40" width="0.90" height="2.80" fill="#7c7c7c" />
<rect x="88.25" y="558.40" width="0.90" height="2.80" fill="#7c7c7c" />
<rect x="95.57" y="558.40" width="0.90" height="2.80" fill="#7c7c7c" />
<rect x="102.90" y="558.40" width="0.90" height="2.80" fill="#7c7c7c" />
<rect x="110.22" y="558.40" width="0.90" height="2.80" fill="#7c7c7c" />
<rect x="117.55" y="558.40" width="0.90" height="2.80" fill="#7c7c7c" />
<rect x="124.88" y="558.40" width="0.90" height="2.80" fill="#7c7c7c" />
<rect x="132.20" y="558.40" width="0.90" height="2.80" fill="#7c7c7c" />
<rect x="139.53" y="558.40" width="0.90" height="2.80" fill="#7c7c7c" />
<rect x="146.85" y="558.40" width="0.90" height="2.80" fill="#7c7c7c" />
<rect x="154.17" y="558.40" width="0.90" height="2.80" fill="#7c7c7c" />
<rect x="161.50" y="558.40" width="0.90" height="2.80" fill="#7c7c7c" />
<rect x="168.83" y="558.40" width="0.90" height="2.80" fill="#7c7c7c" />
<rect x="176.15" y="558.40" width="0.90" height="2.80" fill="#7c7c7c" />
<rect x="183.47" y="558.40" width="0.90" height="2.80" fill="#7c7c7c" />
<rect x="190.80" y="558.40" width="0.90" height="2.80" fill="#7c7c7c" />
<rect x="198.13" y="558.40" width="0.90" height="2.80" fill="#7c7c7c" />
<rect x="205.45" y="558.40" width="0.90" height="2.80" fill="#7c7c7c" />
<rect x="212.78" y="558.40" width="0.90" height="2.80" fill="#7c7c7c" />
<rect x="220.10" y="558.40" width="0.90" height="2.80" fill="#7c7c7c" />
<rect x="227.42" y="558.40" width="0.90" height="2.80" fill="#7c7c7c" />
<rect x="234.75" y="558.40" width="0.90" height="2.80" fill="#7c7c7c" />
<rect x="242.08" y="558.40" width="0.90" height="2.80" fill="#7c7c7c" />
<rect x="249.40" y="558.40" width="0.90" height="2.80" fill="#7c7c7c" />
<rect x="256.73" y="558.40" width="0.90" height="2.80" fill="#7c7c7c" />
<rect x="264.05" y="549.60" width="0.90" height="11.60" fill="#b0b0b0" />
<rect x="271.38" y="558.40" width="0.90" height="2.80" fill="#7c7c7c" />
<rect x="278.70" y="558.40" width="0.90" height="2.80" fill="#7c7c7c" />
<rect x="286.03" y="558.40" width="0.90" height="2.80" fill="#7c7c7c" />
<rect x="293.35" y="558.40" width="0.90" height="2.80" fill="#7c7c7c" />
<rect x="300.68" y="558.40" width="0.90" height="2.80" fill="#7c7c7c" />
<rect x="308.00" y="558.40" width="0.90" height="2.80" fill="#7c7c7c" />
<rect x="315.33" y="558.40" width="0.90" height="2.80" fill="#7c7c7c" />
<rect x="322.65" y="558.40" width="0.90" height="2.80" fill="#7c7c7c" />
<rect x="329.98" y="558.40" width="0.90" height="2.80" fill="#7c7c7c" />
<rect x="337.30" y="558.40" width="0.90" height="2.80" fill="#7c7c7c" />
<rect x="344.62" y="558.40" width="0.90" height="2.80" fill="#7c7c7c" />
<rect x="351.95" y="558.40" width="0.90" height="2.80" fill="#7c7c7c" />
<rect x="359.28" y="558.40" width="0.90" height="2.80" fill="#7c7c7c" />
<rect x="366.60" y="558.40" width="0.90" height="2.80" fill="#7c7c7c" />
<rect x="373.93" y="558.40" width="0.90" height="2.80" fill="#7c7c7c" />
<rect x="381.25" y="558.40" width="0.90" height="2.80" fill="#7c7c7c" />
<rect x="388.58" y="558.40" width="0.90" height="2.80" fill="#7c7c7c" />
<rect x="395.90" y="558.40" width="0.90" height="2.80" fill="#7c7c7c" />
<rect x="403.23" y="558.40" width="0.90" height="2.80" fill="#7c7c7c" />
<rect x="410.55" y="558.40" width="0.90" height="2.80" fill="#7c7c7c" />
<rect x="417.88" y="558.40" width="0.90" height="2.80" fill="#7c7c7c" />
<rect x="425.20" y="558.40" width="0.90" height="2.80" fill="#7c7c7c" />
<rect x="432.53" y="558.40" width="0.90" height="2.80" fill="#7c7c7c" />
<rect x="439.85" y="558.40" width="0.90" height="2.80" fill="#7c7c7c" />
<rect x="447.18" y="558.40" width="0.90" height="2.80" fill="#7c7c7c" />
<rect x="454.50" y="558.40" width="0.90" height="2.80" fill="#7c7c7c" />
<rect x="461.83" y="558.40" width="0.90" height="2.80" fill="#7c7c7c" />
<rect x="469.15" y="558.40" width="0.90" height="2.80" fill="#7c7c7c" />
<rect x="476.48" y="558.40" width="0.90" height="2.80" fill="#7c7c7c" />
<rect x="483.80" y="549.60" width="0.90" height="11.60" fill="#b0b0b0" />
<rect x="491.12" y="558.40" width="0.90" height="2.80" fill="#7c7c7c" />
<rect x="498.45" y="558.40" width="0.90" height="2.80" fill="#7c7c7c" />
<rect x="505.78" y="558.40" width="0.90" height="2.80" fill="#7c7c7c" />
<rect x="513.10" y="558.40" width="0.90" height="2.80" fill="#7c7c7c" />
<rect x="520.43" y="558.40" width="0.90" height="2.80" fill="#7c7c7c" />
<rect x="527.75" y="558.40" width="0.90" height="2.80" fill="#7c7c7c" />
<rect x="535.08" y="558.40" width="0.90" height="2.80" fill="#7c7c7c" />
<rect x="542.40" y="558.40" width="0.90" height="2.80" fill="#7c7c7c" />
<rect x="549.73" y="558.40" width="0.90" height="2.80" fill="#7c7c7c" />
<rect x="557.05" y="558.40" width="0.90" height="2.80" fill="#7c7c7c" />
<rect x="564.38" y="558.40" width="0.90" height="2.80" fill="#7c7c7c" />
<rect x="571.70" y="558.40" width="0.90" height="2.80" fill="#7c7c7c" />
<rect x="579.03" y="558.40" width="0.90" height="2.80" fill="#7c7c7c" />
<rect x="586.35" y="558.40" width="0.90" height="2.80" fill="#7c7c7c" />
<rect x="593.68" y="558.40" width="0.90" height="2.80" fill="#7c7c7c" />
<rect x="601.00" y="558.40" width="0.90" height="2.80" fill="#7c7c7c" />
<rect x="608.33" y="558.40" width="0.90" height="2.80" fill="#7c7c7c" />
<rect x="615.65" y="558.40" width="0.90" height="2.80" fill="#7c7c7c" />
<rect x="622.98" y="558.40" width="0.90" height="2.80" fill="#7c7c7c" />
<rect x="630.30" y="558.40" width="0.90" height="2.80" fill="#7c7c7c" />
<rect x="637.63" y="558.40" width="0.90" height="2.80" fill="#7c7c7c" />
<rect x="644.95" y="558.40" width="0.90" height="2.80" fill="#7c7c7c" />
<rect x="652.28" y="558.40" width="0.90" height="2.80" fill="#7c7c7c" />
<rect x="659.60" y="558.40" width="0.90" height="2.80" fill="#7c7c7c" />
<rect x="666.93" y="558.40" width="0.90" height="2.80" fill="#7c7c7c" />
<rect x="674.25" y="558.40" width="0.90" height="2.80" fill="#7c7c7c" />
<rect x="681.58" y="558.40" width="0.90" height="2.80" fill="#7c7c7c" />
<rect x="688.90" y="558.40" width="0.90" height="2.80" fill="#7c7c7c" />
<rect x="696.23" y="558.40" width="0.90" height="2.80" fill="#7c7c7c" />
<rect x="703.55" y="549.60" width="0.90" height="11.60" fill="#b0b0b0" />
<rect x="44.30" y="557.00" width="0.90" height="4.40" fill="#b0b0b0" />
<rect x="35.80" y="564.40" width="53.40" height="12.80" fill="#1a1a1a" rx="1.5" />
<path d="M40.3 568.3 l-1.9 2.5 l1.9 2.5" fill="none" stroke="#6a6a6a" stroke-width="1" />
<path d="M84.6 568.3 l1.9 2.5 l-1.9 2.5" fill="none" stroke="#6a6a6a" stroke-width="1" />
<text x="57.0" y="573.8" font-size="8.4" fill="#dcdcdc" stroke="#dcdcdc" textLength="10.0" lengthAdjust="spacingAndGlyphs" >0 F</text>
<rect x="95.00" y="564.20" width="561.00" height="13.00" fill="#3b3b3b" rx="1.5" />
<rect x="97.20" y="566.40" width="1.00" height="8.60" fill="#5a5a5a" />
<rect x="99.20" y="566.40" width="1.00" height="8.60" fill="#5a5a5a" />
<text x="104.4" y="573.8" font-size="8.4" fill="#d0d0d0" stroke="#d0d0d0" textLength="10.0" lengthAdjust="spacingAndGlyphs" >0 F</text>
<text x="630.5" y="573.8" font-size="8.4" fill="#d0d0d0" stroke="#d0d0d0" textLength="13.9" lengthAdjust="spacingAndGlyphs" >90 F</text>
<rect x="649.60" y="566.40" width="1.00" height="8.60" fill="#5a5a5a" />
<rect x="651.60" y="566.40" width="1.00" height="8.60" fill="#5a5a5a" />
<rect x="659.80" y="564.40" width="54.80" height="12.80" fill="#1a1a1a" rx="1.5" />
<path d="M664.3 568.3 l-1.9 2.5 l1.9 2.5" fill="none" stroke="#6a6a6a" stroke-width="1" />
<path d="M709.2 568.3 l1.9 2.5 l-1.9 2.5" fill="none" stroke="#6a6a6a" stroke-width="1" />
<text x="680.5" y="573.8" font-size="8.4" fill="#dcdcdc" stroke="#dcdcdc" textLength="13.5" lengthAdjust="spacingAndGlyphs" >90 F</text>
</svg>
</body></html>
